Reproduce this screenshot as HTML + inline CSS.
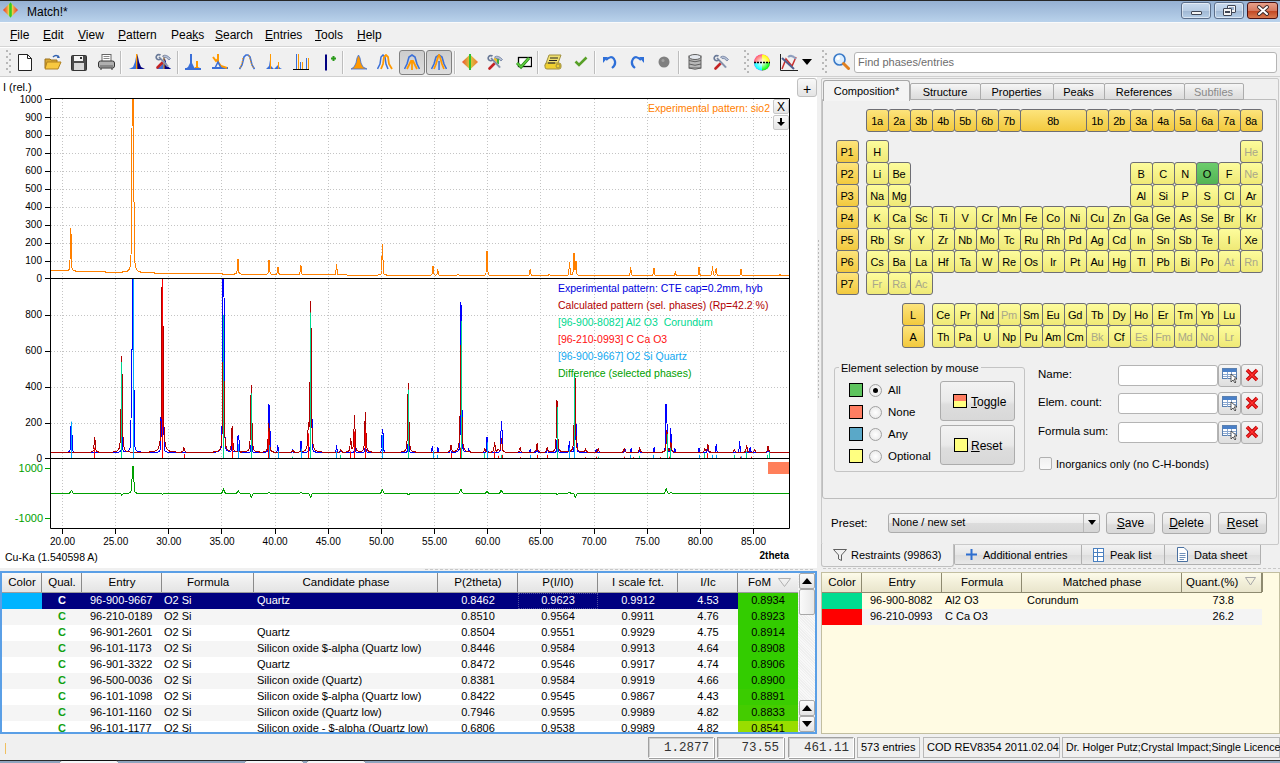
<!DOCTYPE html><html><head><meta charset="utf-8"><style>
*{box-sizing:border-box;margin:0;padding:0}
html,body{width:1280px;height:763px;overflow:hidden;background:#f0f0f0;font-family:"Liberation Sans",sans-serif;font-size:11px;color:#000}
.a{position:absolute}
.t{position:absolute;white-space:nowrap;line-height:1}
u{text-decoration:underline}
.btn{position:absolute;border:1px solid #acacac;border-radius:3px;background:linear-gradient(#f2f2f2,#ebebeb 50%,#dddddd 51%,#cfcfcf)}
.wbtn{position:absolute;border:1px solid #5d6f87;border-radius:3px}
.sep{position:absolute;width:1px;background:#c5c5c5;border-right:1px solid #fff}
.pe{position:absolute;width:21px;height:21px;border:1px solid #a09a5a;border-radius:3px;background:linear-gradient(#fbf79a,#f2ea6a);text-align:center;line-height:19px;font-size:11px;color:#111}
.pg{background:linear-gradient(#fbe07a,#f0c840);border-color:#b09030}
.pd{color:#a8a890}
.po{background:linear-gradient(#5cbf5c,#3da83d);border-color:#2e7a2e}
.tab{position:absolute;border:1px solid #aeaeae;border-bottom:none;background:linear-gradient(#f4f4f4,#e4e4e4);text-align:center;font-size:11px}
.hd{position:absolute;top:0;height:20px;border-right:1px solid #a9a9a9;background:linear-gradient(#ffffff,#f3f3f3 50%,#e8e8e8 51%,#dcdcdc);text-align:center;line-height:19px;font-size:11px}
.row{position:absolute;left:0;height:16px;font-size:11px;line-height:16px}
.c{position:absolute;top:0;height:16px;white-space:nowrap}
</style></head><body><div class="a" style="left:0px;top:0px;width:1280px;height:1px;background:#262626"></div>
<div class="a" style="left:0px;top:1px;width:1280px;height:21px;background:linear-gradient(#95b0d2,#b9d2eb)"></div>
<div class="a" style="left:0px;top:22px;width:1280px;height:1px;background:#fafafa"></div>
<svg class="a" style="left:3px;top:2px" width="15" height="16" viewBox="0 0 15 16"><defs><linearGradient id="dg" x1="0" x2="1"><stop offset="0" stop-color="#f03820"/><stop offset="0.25" stop-color="#f08a40"/><stop offset="0.4" stop-color="#e8e050"/><stop offset="0.5" stop-color="#40d020"/><stop offset="0.6" stop-color="#e8e050"/><stop offset="0.75" stop-color="#f08a40"/><stop offset="1" stop-color="#f03820"/></linearGradient></defs><polygon points="0,8 7.5,0.5 15,8 7.5,15.5" fill="url(#dg)"/><polygon points="6.3,2 7.5,0.5 8.7,2 8.7,14 7.5,15.5 6.3,14" fill="#38c820"/></svg>
<div class="t" style="left:27px;top:5.5px;font-size:12px;color:#000;">Match!*</div>
<div class="a" style="left:1181px;top:2px;width:30px;height:17px;border:1px solid #5b6e8a;border-radius:3px;background:linear-gradient(#c9daee,#b7cce4 50%,#9fb6d2 51%,#b6cfe8);box-shadow:inset 0 0 0 1px rgba(255,255,255,.5)"></div>
<div class="a" style="left:1214px;top:2px;width:30px;height:17px;border:1px solid #5b6e8a;border-radius:3px;background:linear-gradient(#c9daee,#b7cce4 50%,#9fb6d2 51%,#b6cfe8);box-shadow:inset 0 0 0 1px rgba(255,255,255,.5)"></div>
<div class="a" style="left:1191px;top:11px;width:11px;height:4px;background:#f4f4f4;border:1px solid #404654;border-radius:1px"></div>
<div class="a" style="left:1227px;top:5px;width:9px;height:8px;background:#f4f4f4;border:1px solid #404654;border-radius:1px"></div>
<div class="a" style="left:1229px;top:7px;width:5px;height:3px;background:#9ab0cc"></div>
<div class="a" style="left:1223px;top:8px;width:9px;height:8px;background:#f4f4f4;border:1px solid #404654;border-radius:1px"></div>
<div class="a" style="left:1225px;top:11px;width:5px;height:2px;background:#404654"></div>
<div class="a" style="left:1247px;top:2px;width:31px;height:17px;border:1px solid #4a1010;border-radius:3px;background:linear-gradient(#e7a08a,#d67a60 50%,#c04420 51%,#d87a50)"></div>
<svg class="a" style="left:1255px;top:5px" width="16" height="11" viewBox="0 0 16 11"><path d="M4 2 L12 9 M12 2 L4 9" stroke="#3a2a2a" stroke-width="3.8" stroke-linecap="round"/><path d="M4 2 L12 9 M12 2 L4 9" stroke="#fff" stroke-width="2" stroke-linecap="round"/></svg>
<div class="t" style="left:10px;top:28.5px;font-size:12px;color:#000;"><span style="text-decoration:underline">F</span>ile</div>
<div class="t" style="left:43px;top:28.5px;font-size:12px;color:#000;"><span style="text-decoration:underline">E</span>dit</div>
<div class="t" style="left:78px;top:28.5px;font-size:12px;color:#000;"><span style="text-decoration:underline">V</span>iew</div>
<div class="t" style="left:118px;top:28.5px;font-size:12px;color:#000;"><span style="text-decoration:underline">P</span>attern</div>
<div class="t" style="left:171px;top:28.5px;font-size:12px;color:#000;">Pea<span style="text-decoration:underline">k</span>s</div>
<div class="t" style="left:215px;top:28.5px;font-size:12px;color:#000;"><span style="text-decoration:underline">S</span>earch</div>
<div class="t" style="left:265px;top:28.5px;font-size:12px;color:#000;"><span style="text-decoration:underline">E</span>ntries</div>
<div class="t" style="left:315px;top:28.5px;font-size:12px;color:#000;"><span style="text-decoration:underline">T</span>ools</div>
<div class="t" style="left:357px;top:28.5px;font-size:12px;color:#000;"><span style="text-decoration:underline">H</span>elp</div>
<div class="a" style="left:0px;top:46px;width:1280px;height:1px;background:#d5d5d5"></div>
<div class="a" style="left:0px;top:47px;width:1280px;height:1px;background:#ffffff"></div>
<div class="a" style="left:0px;top:76px;width:1280px;height:1px;background:#d0d0d0"></div>
<svg class="a" style="left:6px;top:50px" width="6" height="24" viewBox="0 0 6 24"><rect x="0" y="0" width="2" height="2" fill="#b8b8b8"/><rect x="3" y="3" width="2" height="2" fill="#b8b8b8"/><rect x="0" y="6" width="2" height="2" fill="#b8b8b8"/><rect x="3" y="9" width="2" height="2" fill="#b8b8b8"/><rect x="0" y="12" width="2" height="2" fill="#b8b8b8"/><rect x="3" y="15" width="2" height="2" fill="#b8b8b8"/><rect x="0" y="18" width="2" height="2" fill="#b8b8b8"/><rect x="3" y="21" width="2" height="2" fill="#b8b8b8"/></svg>
<svg class="a" style="left:18px;top:54px" width="14" height="17" viewBox="0 0 14 17"><path d="M0.5 0.5 H9.5 L13.5 4.5 V16.5 H0.5 Z" fill="#fff" stroke="#222"/><path d="M9.5 0.5 V4.5 H13.5" fill="none" stroke="#222"/></svg>
<svg class="a" style="left:44px;top:54px" width="18" height="17" viewBox="0 0 18 17"><path d="M1 5 H6 L7 6 H13 V14 H1 Z" fill="#d8a830" stroke="#9a7020"/><path d="M3 8 H17 L14 15 H1 Z" fill="#f8c840" stroke="#b08020"/><path d="M9 3 Q12 0 15 3" fill="none" stroke="#3060b0" stroke-width="1.5"/><path d="M14 1 L16 4 L13 4 Z" fill="#3060b0"/></svg>
<svg class="a" style="left:71px;top:55px" width="16" height="16" viewBox="0 0 16 16"><rect x="0.5" y="0.5" width="15" height="15" rx="1" fill="#4a4a4a" stroke="#333"/><rect x="3" y="1" width="9" height="5" fill="#f4f4f4"/><rect x="9" y="2" width="2" height="2" fill="#333"/><rect x="3" y="8" width="10" height="7" fill="#d8d8d8"/></svg>
<svg class="a" style="left:98px;top:54px" width="17" height="17" viewBox="0 0 17 17"><rect x="4" y="0.5" width="9" height="7" fill="#fff" stroke="#666"/><path d="M5.5 2.5h6M5.5 4.5h6" stroke="#888"/><rect x="0.5" y="7" width="16" height="7" rx="2" fill="#b0b0b0" stroke="#333"/><rect x="2" y="11" width="13" height="2" fill="#888"/><path d="M3 14v2M14 14v2" stroke="#333"/></svg>
<div class="a" style="left:120px;top:51px;width:1px;height:23px;background:#bdbdbd"></div>
<div class="a" style="left:121px;top:51px;width:1px;height:23px;background:#fbfbfb"></div>
<svg class="a" style="left:129px;top:54px" width="16" height="16" viewBox="0 0 16 16"><path d="M0 15 L4 13 L6 8 L7 3 L8 0 V15 Z" fill="#3a6fd8"/><path d="M8 0 L9 3 L10 8 L12 13 L16 15 H8 Z" fill="#000080"/><rect x="7" y="0" width="1.3" height="15" fill="#ff9900"/></svg>
<svg class="a" style="left:155px;top:53px" width="17" height="17" viewBox="0 0 17 17"><path d="M1 16 L16 16 L12 13 L10 6 L9 2 L8 6 L6 13 Z" fill="#3a6fd8"/><path d="M9 6 L10 6 L12 13 L16 16 H9Z" fill="#000080"/><rect x="8.5" y="2" width="1" height="14" fill="#ff9900"/><path d="M2.5 14.5 L7.5 9.5" stroke="#c42424" stroke-width="2.6" stroke-linecap="round"/><path d="M4 4 L13 13.5" stroke="#9aa6bc" stroke-width="2"/><path d="M13 13.5 L4 4" stroke="#5a6a88" stroke-width="0.6"/><path d="M5.5 2.2 A2.6 2.6 0 1 0 5.8 5.8" fill="none" stroke="#6a7a98" stroke-width="1.7"/><path d="M7.5 3 Q11 0.5 15.5 5.5 L14 7 Q11 3.5 9 4.5 Z" fill="#b4bfd4" stroke="#6e7ea0" stroke-width="0.8"/></svg>
<div class="a" style="left:177px;top:51px;width:1px;height:23px;background:#bdbdbd"></div>
<div class="a" style="left:178px;top:51px;width:1px;height:23px;background:#fbfbfb"></div>
<svg class="a" style="left:185px;top:54px" width="16" height="16" viewBox="0 0 16 16"><path d="M0 15 L3 13 L5 9 V0 H7 V9 L9 13 L10 15 Z" fill="#3a6fd8"/><path d="M9 15 L10 13 L11 13 L11 7 H13 V13 L15 14 L16 15 Z" fill="#ff9900"/><rect x="0" y="14" width="16" height="2" fill="#3a6fd8"/></svg>
<svg class="a" style="left:212px;top:54px" width="17" height="16" viewBox="0 0 17 16"><path d="M0 14 H16" stroke="#3a6fd8" stroke-width="2"/><path d="M1 3 L4 7 L6 5 V0 L6 8 L9 12 L15 14" fill="none" stroke="#ff9900" stroke-width="2"/><path d="M3 14 L6 8 L9 14" fill="none" stroke="#3a6fd8" stroke-width="1.5"/></svg>
<svg class="a" style="left:239px;top:54px" width="16" height="16" viewBox="0 0 16 16"><path d="M0.5 15 L3 11 L5 3 L7 1 L9 1 L11 3 L13 11 L15.5 15" fill="none" stroke="#3a6fd8" stroke-width="1.6"/><path d="M1 14 L3 9 L4 3 M10 1 L12 9 L15 15" fill="none" stroke="#ff9900" stroke-width="1" stroke-dasharray="1.5 1.5"/></svg>
<svg class="a" style="left:266px;top:54px" width="16" height="16" viewBox="0 0 16 16"><path d="M0 15 L3 12 L4 6 L5 12 L8 15 L11 12 L12 11 L14 14 L16 15 Z" fill="#3a6fd8"/><rect x="4" y="0" width="1" height="15" fill="#ff9900"/><rect x="12" y="8" width="1" height="7" fill="#ff9900"/></svg>
<svg class="a" style="left:293px;top:54px" width="16" height="16" viewBox="0 0 16 16"><rect x="3" y="0" width="1" height="15" fill="#3a6fd8"/><rect x="5" y="0" width="1" height="15" fill="#ff9900"/><rect x="7" y="8" width="1" height="7" fill="#3a6fd8"/><rect x="9" y="8" width="1" height="7" fill="#ff9900"/><rect x="13" y="4" width="1" height="11" fill="#3a6fd8"/><rect x="15" y="4" width="1" height="11" fill="#ff9900"/><rect x="0" y="15" width="16" height="1" fill="#000"/></svg>
<svg class="a" style="left:324px;top:54px" width="13" height="17" viewBox="0 0 13 17"><rect x="1" y="0.5" width="2" height="16" fill="#000080"/><path d="M7 4.5 H12 M9.5 2 V7" stroke="#2a9a1a" stroke-width="2"/></svg>
<div class="a" style="left:342px;top:51px;width:1px;height:23px;background:#bdbdbd"></div>
<div class="a" style="left:343px;top:51px;width:1px;height:23px;background:#fbfbfb"></div>
<svg class="a" style="left:351px;top:54px" width="16" height="16" viewBox="0 0 16 16"><path d="M0 15 L3 13 L5 9 L6 4 L7.5 1 L9 4 L10 9 L12 13 L16 15 Z" fill="#ff9900" stroke="#3a6fd8" stroke-width="0.8"/></svg>
<svg class="a" style="left:377px;top:54px" width="17" height="16" viewBox="0 0 17 16"><path d="M0.5 15 L3 10 L4 3 L6 1 L8 3 L9 10 L11 15" fill="none" stroke="#3a6fd8" stroke-width="1.5"/><path d="M4 15 L6 10 L7 3 L9 1 L11 3 L12 10 L15 15" fill="none" stroke="#ff9900" stroke-width="1.8"/></svg>
<div class="a" style="left:399px;top:50px;width:26px;height:25px;border:1px solid #808080;border-radius:3px;background:linear-gradient(#cdcdcd,#dedede)"></div>
<div class="a" style="left:426px;top:50px;width:26px;height:25px;border:1px solid #808080;border-radius:3px;background:linear-gradient(#cdcdcd,#dedede)"></div>
<svg class="a" style="left:404px;top:54px" width="16" height="16" viewBox="0 0 16 16"><path d="M0.5 15 L3 10 L5 3 L8 1 L11 3 L13 10 L15.5 15" fill="none" stroke="#3a6fd8" stroke-width="1.6"/><path d="M3 15 L5 11 L7 7 H9 L11 11 L13 15 M8 7 V16" fill="none" stroke="#ff9900" stroke-width="1.8"/></svg>
<svg class="a" style="left:431px;top:54px" width="16" height="16" viewBox="0 0 16 16"><path d="M0.5 15 L3 10 L5 3 L8 1 L11 3 L13 10 L15.5 15" fill="none" stroke="#3a6fd8" stroke-width="1.6"/><path d="M3 15 L5 10 L7 3 L8 1 L9 3 L11 10 L13 15" fill="none" stroke="#ff9900" stroke-width="1.8"/><rect x="7.3" y="7" width="1.5" height="9" fill="#3a6fd8"/></svg>
<div class="a" style="left:454px;top:51px;width:1px;height:23px;background:#bdbdbd"></div>
<div class="a" style="left:455px;top:51px;width:1px;height:23px;background:#fbfbfb"></div>
<svg class="a" style="left:462px;top:54px" width="16" height="16" viewBox="0 0 16 16"><defs><linearGradient id="dg2" x1="0" x2="1"><stop offset="0" stop-color="#f05030"/><stop offset="0.5" stop-color="#d8d040"/><stop offset="1" stop-color="#f07030"/></linearGradient></defs><polygon points="0,8 8,0.5 16,8 8,15.5" fill="url(#dg2)"/><rect x="7" y="0" width="2" height="16" fill="#30c030"/></svg>
<svg class="a" style="left:487px;top:54px" width="18" height="16" viewBox="0 0 18 16"><rect x="7" y="4" width="3" height="6" fill="#f0c030"/><rect x="10" y="5" width="2" height="5" fill="#40b040"/><path d="M2.5 14.5 L7.5 9.5" stroke="#c42424" stroke-width="2.6" stroke-linecap="round"/><path d="M4 4 L13 13.5" stroke="#9aa6bc" stroke-width="2"/><path d="M13 13.5 L4 4" stroke="#5a6a88" stroke-width="0.6"/><path d="M5.5 2.2 A2.6 2.6 0 1 0 5.8 5.8" fill="none" stroke="#6a7a98" stroke-width="1.7"/><path d="M7.5 3 Q11 0.5 15.5 5.5 L14 7 Q11 3.5 9 4.5 Z" fill="#b4bfd4" stroke="#6e7ea0" stroke-width="0.8"/></svg>
<svg class="a" style="left:516px;top:56px" width="16" height="14" viewBox="0 0 16 14"><rect x="2.5" y="1.5" width="13" height="9" fill="#fff" stroke="#000" stroke-width="1.3"/><path d="M1 7 L5 11 L13 2" fill="none" stroke="#2a8a1a" stroke-width="3"/><path d="M1 7 L5 11 L13 2" fill="none" stroke="#60d040" stroke-width="1.5"/></svg>
<div class="a" style="left:537px;top:51px;width:1px;height:23px;background:#bdbdbd"></div>
<div class="a" style="left:538px;top:51px;width:1px;height:23px;background:#fbfbfb"></div>
<svg class="a" style="left:544px;top:54px" width="18" height="16" viewBox="0 0 18 16"><path d="M5 1 H17 L13 12 H1 Z" fill="#f0e070" stroke="#a09040"/><rect x="1" y="9" width="16" height="6" rx="2" fill="#f0d030" stroke="#a09040"/><path d="M6 4h8M5 6.5h8M4 9h7" stroke="#222" stroke-width="1.2"/><circle cx="14" cy="12" r="2" fill="none" stroke="#a09040"/></svg>
<svg class="a" style="left:574px;top:56px" width="14" height="11" viewBox="0 0 14 11"><path d="M1.5 5.5 L5 9 L12.5 1.5" fill="none" stroke="#58a028" stroke-width="2.6"/></svg>
<div class="a" style="left:594px;top:51px;width:1px;height:23px;background:#bdbdbd"></div>
<div class="a" style="left:595px;top:51px;width:1px;height:23px;background:#fbfbfb"></div>
<svg class="a" style="left:603px;top:55px" width="14" height="14" viewBox="0 0 14 14"><path d="M3 5 Q8 0 11 4 Q14 9 9 13" fill="none" stroke="#2e6fd8" stroke-width="2.2"/><path d="M0 2 L5 2 L0 8 Z" fill="#2e6fd8"/></svg>
<svg class="a" style="left:630px;top:55px" width="14" height="14" viewBox="0 0 14 14"><path d="M11 5 Q6 0 3 4 Q0 9 5 13" fill="none" stroke="#2e6fd8" stroke-width="2.2"/><path d="M14 2 L9 2 L14 8 Z" fill="#2e6fd8"/></svg>
<svg class="a" style="left:658px;top:56px" width="12" height="12" viewBox="0 0 12 12"><circle cx="6" cy="6" r="5.5" fill="#808080"/><circle cx="5" cy="4.5" r="1.5" fill="#a0a0a0"/></svg>
<div class="a" style="left:678px;top:51px;width:1px;height:23px;background:#bdbdbd"></div>
<div class="a" style="left:679px;top:51px;width:1px;height:23px;background:#fbfbfb"></div>
<svg class="a" style="left:688px;top:54px" width="14" height="16" viewBox="0 0 14 16"><rect x="1" y="2" width="12" height="12" fill="#b8b8b8" stroke="#606060"/><ellipse cx="7" cy="3" rx="6" ry="2.5" fill="#e4e8ee" stroke="#606060"/><path d="M1 6.5 Q7 9 13 6.5 M1 10 Q7 12.5 13 10" fill="none" stroke="#606060"/><path d="M1 14 Q7 16.5 13 14" fill="none" stroke="#606060"/></svg>
<svg class="a" style="left:713px;top:54px" width="17" height="16" viewBox="0 0 17 16"><path d="M2.5 14.5 L7.5 9.5" stroke="#c42424" stroke-width="2.6" stroke-linecap="round"/><path d="M4 4 L13 13.5" stroke="#9aa6bc" stroke-width="2"/><path d="M13 13.5 L4 4" stroke="#5a6a88" stroke-width="0.6"/><path d="M5.5 2.2 A2.6 2.6 0 1 0 5.8 5.8" fill="none" stroke="#6a7a98" stroke-width="1.7"/><path d="M7.5 3 Q11 0.5 15.5 5.5 L14 7 Q11 3.5 9 4.5 Z" fill="#b4bfd4" stroke="#6e7ea0" stroke-width="0.8"/></svg>
<svg class="a" style="left:744px;top:50px" width="6" height="24" viewBox="0 0 6 24"><rect x="0" y="0" width="2" height="2" fill="#b8b8b8"/><rect x="3" y="3" width="2" height="2" fill="#b8b8b8"/><rect x="0" y="6" width="2" height="2" fill="#b8b8b8"/><rect x="3" y="9" width="2" height="2" fill="#b8b8b8"/><rect x="0" y="12" width="2" height="2" fill="#b8b8b8"/><rect x="3" y="15" width="2" height="2" fill="#b8b8b8"/><rect x="0" y="18" width="2" height="2" fill="#b8b8b8"/><rect x="3" y="21" width="2" height="2" fill="#b8b8b8"/></svg>
<svg class="a" style="left:753px;top:54px" width="18" height="17" viewBox="0 0 18 17"><defs><radialGradient id="cw"><stop offset="0" stop-color="#fff"/><stop offset="1" stop-color="#fff" stop-opacity="0"/></radialGradient></defs><circle cx="9" cy="8.5" r="8" fill="#f0f"/><path d="M9 8.5 L9 0.5 A8 8 0 0 1 17 8.5 Z" fill="#ff0"/><path d="M9 8.5 L17 8.5 A8 8 0 0 1 9 16.5 Z" fill="#0f0"/><path d="M9 8.5 L9 16.5 A8 8 0 0 1 1 8.5 Z" fill="#0ff"/><path d="M9 8.5 L1 8.5 A8 8 0 0 1 9 0.5 Z" fill="#f66"/><circle cx="9" cy="8.5" r="8" fill="url(#cw)"/><path d="M1 8.5 H17" stroke="#000" stroke-width="1.5" stroke-dasharray="2 1"/></svg>
<svg class="a" style="left:780px;top:54px" width="18" height="17" viewBox="0 0 18 17"><path d="M0.5 0 V16.5 H18" fill="none" stroke="#222"/><path d="M2 15 L6 5 L12 12 L16 3" fill="none" stroke="#c83030" stroke-width="1.5"/><path d="M2 4 L14 15" stroke="#506090" stroke-width="2"/><path d="M8 3 Q12 0 16 5" fill="none" stroke="#90a0c0" stroke-width="2"/></svg>
<svg class="a" style="left:802px;top:59px" width="10" height="6" viewBox="0 0 10 6"><path d="M0 0 H10 L5 6 Z" fill="#000"/></svg>
<svg class="a" style="left:822px;top:50px" width="6" height="24" viewBox="0 0 6 24"><rect x="0" y="0" width="2" height="2" fill="#b8b8b8"/><rect x="3" y="3" width="2" height="2" fill="#b8b8b8"/><rect x="0" y="6" width="2" height="2" fill="#b8b8b8"/><rect x="3" y="9" width="2" height="2" fill="#b8b8b8"/><rect x="0" y="12" width="2" height="2" fill="#b8b8b8"/><rect x="3" y="15" width="2" height="2" fill="#b8b8b8"/><rect x="0" y="18" width="2" height="2" fill="#b8b8b8"/><rect x="3" y="21" width="2" height="2" fill="#b8b8b8"/></svg>
<svg class="a" style="left:833px;top:53px" width="17" height="17" viewBox="0 0 17 17"><circle cx="6.5" cy="6.5" r="5.5" fill="#dbeeff" stroke="#3a7ac8" stroke-width="1.6"/><circle cx="5" cy="5" r="2" fill="#fff"/><path d="M10.5 10.5 L15.5 15.5" stroke="#e08020" stroke-width="3" stroke-linecap="round"/></svg>
<div class="a" style="left:854px;top:52px;width:423px;height:21px;background:#fff;border:1px solid #b5b5b5;border-radius:3px"></div>
<div class="t" style="left:858px;top:57.0px;font-size:11px;color:#6d6d6d;">Find phases/entries</div>
<div class="a" style="left:0px;top:77px;width:817px;height:491px;background:#fff"></div>
<svg class="a" style="left:0;top:0" width="817" height="568" viewBox="0 0 817 568"><path d="M62.5 99 V528" stroke="#c4c4c4" stroke-dasharray="1 2"/><path d="M115.5 99 V528" stroke="#c4c4c4" stroke-dasharray="1 2"/><path d="M168.5 99 V528" stroke="#c4c4c4" stroke-dasharray="1 2"/><path d="M221.5 99 V528" stroke="#c4c4c4" stroke-dasharray="1 2"/><path d="M275.5 99 V528" stroke="#c4c4c4" stroke-dasharray="1 2"/><path d="M328.5 99 V528" stroke="#c4c4c4" stroke-dasharray="1 2"/><path d="M381.5 99 V528" stroke="#c4c4c4" stroke-dasharray="1 2"/><path d="M434.5 99 V528" stroke="#c4c4c4" stroke-dasharray="1 2"/><path d="M487.5 99 V528" stroke="#c4c4c4" stroke-dasharray="1 2"/><path d="M540.5 99 V528" stroke="#c4c4c4" stroke-dasharray="1 2"/><path d="M594.5 99 V528" stroke="#c4c4c4" stroke-dasharray="1 2"/><path d="M647.5 99 V528" stroke="#c4c4c4" stroke-dasharray="1 2"/><path d="M700.5 99 V528" stroke="#c4c4c4" stroke-dasharray="1 2"/><path d="M753.5 99 V528" stroke="#c4c4c4" stroke-dasharray="1 2"/><path d="M51 261.5 H789" stroke="#c4c4c4" stroke-dasharray="1 2"/><path d="M51 243.5 H789" stroke="#c4c4c4" stroke-dasharray="1 2"/><path d="M51 225.5 H789" stroke="#c4c4c4" stroke-dasharray="1 2"/><path d="M51 207.5 H789" stroke="#c4c4c4" stroke-dasharray="1 2"/><path d="M51 189.5 H789" stroke="#c4c4c4" stroke-dasharray="1 2"/><path d="M51 171.5 H789" stroke="#c4c4c4" stroke-dasharray="1 2"/><path d="M51 153.5 H789" stroke="#c4c4c4" stroke-dasharray="1 2"/><path d="M51 135.5 H789" stroke="#c4c4c4" stroke-dasharray="1 2"/><path d="M51 117.5 H789" stroke="#c4c4c4" stroke-dasharray="1 2"/><path d="M51 423.5 H789" stroke="#c4c4c4" stroke-dasharray="1 2"/><path d="M51 387.5 H789" stroke="#c4c4c4" stroke-dasharray="1 2"/><path d="M51 351.5 H789" stroke="#c4c4c4" stroke-dasharray="1 2"/><path d="M51 315.5 H789" stroke="#c4c4c4" stroke-dasharray="1 2"/><path d="M50.50,270.4 L51.00,270.4 L51.50,270.4 L52.00,270.4 L52.50,270.4 L53.00,270.4 L53.50,270.5 L54.00,270.5 L54.50,270.5 L55.00,270.5 L55.50,270.5 L56.00,270.5 L56.50,270.6 L57.00,270.6 L57.50,270.6 L58.00,270.6 L58.50,270.6 L59.00,270.6 L59.50,270.6 L60.00,270.7 L60.50,270.7 L61.00,270.7 L61.50,270.7 L62.00,270.7 L62.50,270.7 L63.00,270.7 L63.50,270.7 L64.00,270.7 L64.50,270.7 L65.00,270.7 L65.50,270.7 L66.00,270.7 L66.50,270.7 L67.00,270.6 L67.50,270.5 L68.00,270.4 L68.50,270.2 L69.00,269.7 L69.50,268.3 L70.00,260.3 L70.50,236.7 L70.79,227.9 L71.00,232.8 L71.50,257.4 L72.00,267.8 L72.50,269.7 L73.00,270.3 L73.50,270.5 L74.00,270.7 L74.50,270.8 L75.00,270.9 L75.50,271.0 L76.00,271.0 L76.50,271.1 L77.00,271.1 L77.50,271.1 L78.00,271.2 L78.50,271.2 L79.00,271.2 L79.50,271.2 L80.00,271.2 L80.50,271.3 L81.00,271.3 L81.50,271.3 L82.00,271.3 L82.50,271.3 L83.00,271.3 L83.50,271.4 L84.00,271.4 L84.50,271.4 L85.00,271.4 L85.50,271.4 L86.00,271.4 L86.50,271.5 L87.00,271.5 L87.50,271.5 L88.00,271.5 L88.50,271.5 L89.00,271.5 L89.50,271.5 L90.00,271.6 L90.50,271.6 L91.00,271.6 L91.50,271.6 L92.00,271.6 L92.50,271.6 L93.00,271.6 L93.50,271.7 L94.00,271.7 L94.50,271.7 L95.00,271.7 L95.50,271.7 L96.00,271.7 L96.50,271.7 L97.00,271.7 L97.50,271.8 L98.00,271.8 L98.50,271.8 L99.00,271.8 L99.50,271.8 L100.00,271.8 L100.50,271.8 L101.00,271.9 L101.50,271.9 L102.00,271.9 L102.50,271.9 L103.00,271.9 L103.50,271.9 L104.00,271.9 L104.50,271.9 L105.00,271.9 L105.50,272.0 L106.00,272.0 L106.50,272.0 L107.00,272.0 L107.50,272.0 L108.00,272.0 L108.50,272.0 L109.00,272.0 L109.50,272.1 L110.00,272.1 L110.50,272.1 L111.00,272.1 L111.50,272.1 L112.00,272.0 L112.50,272.0 L113.00,272.0 L113.50,272.0 L114.00,272.0 L114.50,272.0 L115.00,272.1 L115.50,272.1 L116.00,272.1 L116.50,272.1 L117.00,272.1 L117.50,272.1 L118.00,272.1 L118.50,272.1 L119.00,272.1 L119.50,272.0 L120.00,272.0 L120.50,272.0 L121.00,272.0 L121.50,272.0 L122.00,272.0 L122.50,272.0 L123.00,271.9 L123.50,271.9 L124.00,271.8 L124.50,271.8 L125.00,271.7 L125.50,271.6 L126.00,271.5 L126.50,271.4 L127.00,271.2 L127.50,271.0 L128.00,270.7 L128.50,270.2 L129.00,269.6 L129.50,268.6 L130.00,267.1 L130.50,264.3 L131.00,255.9 L131.50,219.2 L132.00,130.3 L132.13,105.8 L132.50,98.0 L132.87,98.0 L133.00,98.0 L133.40,98.0 L133.50,98.0 L134.00,202.2 L134.50,252.3 L135.00,263.1 L135.50,266.5 L136.00,268.3 L136.50,269.5 L137.00,270.2 L137.50,270.7 L138.00,271.1 L138.50,271.4 L139.00,271.6 L139.50,271.8 L140.00,271.9 L140.50,272.0 L141.00,272.1 L141.50,272.2 L142.00,272.2 L142.50,272.3 L143.00,272.4 L143.50,272.4 L144.00,272.5 L144.50,272.5 L145.00,272.5 L145.50,272.6 L146.00,272.6 L146.50,272.6 L147.00,272.6 L147.50,272.7 L148.00,272.7 L148.50,272.7 L149.00,272.7 L149.50,272.7 L150.00,272.8 L150.50,272.8 L151.00,272.8 L151.50,272.8 L152.00,272.8 L152.50,272.8 L153.00,272.8 L153.50,272.9 L154.00,272.9 L154.50,273.0 L155.00,273.0 L155.50,273.0 L156.00,273.0 L156.50,273.0 L157.00,273.0 L157.50,273.0 L158.00,273.0 L158.50,273.0 L159.00,273.1 L159.50,273.1 L160.00,273.1 L160.50,273.1 L161.00,273.1 L161.50,273.1 L162.00,273.1 L162.50,273.1 L163.00,273.1 L163.50,273.1 L164.00,273.1 L164.50,273.2 L165.00,273.2 L165.50,273.2 L166.00,273.2 L166.50,273.2 L167.00,273.2 L167.50,273.2 L168.00,273.2 L168.50,273.2 L169.00,273.2 L169.50,273.2 L170.00,273.2 L170.50,273.2 L171.00,273.3 L171.50,273.3 L172.00,273.3 L172.50,273.3 L173.00,273.3 L173.50,273.3 L174.00,273.3 L174.50,273.3 L175.00,273.3 L175.50,273.3 L176.00,273.3 L176.50,273.3 L177.00,273.4 L177.50,273.4 L178.00,273.4 L178.50,273.4 L179.00,273.4 L179.50,273.4 L180.00,273.4 L180.50,273.4 L181.00,273.4 L181.50,273.4 L182.00,273.4 L182.50,273.4 L183.00,273.4 L183.50,273.4 L184.00,273.5 L184.50,273.5 L185.00,273.5 L185.50,273.5 L186.00,273.5 L186.50,273.5 L187.00,273.5 L187.50,273.5 L188.00,273.5 L188.50,273.5 L189.00,273.5 L189.50,273.5 L190.00,273.5 L190.50,273.6 L191.00,273.6 L191.50,273.6 L192.00,273.6 L192.50,273.6 L193.00,273.6 L193.50,273.6 L194.00,273.6 L194.50,273.6 L195.00,273.6 L195.50,273.6 L196.00,273.6 L196.50,273.6 L197.00,273.6 L197.50,273.6 L198.00,273.7 L198.50,273.7 L199.00,273.7 L199.50,273.7 L200.00,273.7 L200.50,273.7 L201.00,273.7 L201.50,273.7 L202.00,273.7 L202.50,273.7 L203.00,273.7 L203.50,273.7 L204.00,273.7 L204.50,273.7 L205.00,273.7 L205.50,273.8 L206.00,273.8 L206.50,273.8 L207.00,273.8 L207.50,273.8 L208.00,273.8 L208.50,273.8 L209.00,273.8 L209.50,273.8 L210.00,273.8 L210.50,273.8 L211.00,273.8 L211.50,273.8 L212.00,273.8 L212.50,273.8 L213.00,273.8 L213.50,273.9 L214.00,273.9 L214.50,273.9 L215.00,273.9 L215.50,273.9 L216.00,273.9 L216.50,273.9 L217.00,273.9 L217.50,273.9 L218.00,273.9 L218.50,273.9 L219.00,273.9 L219.50,273.9 L220.00,273.9 L220.50,273.9 L221.00,273.9 L221.50,273.9 L222.00,273.9 L222.50,274.0 L223.00,274.0 L223.50,274.0 L224.00,274.0 L224.50,274.0 L225.00,274.0 L225.50,274.0 L226.00,274.0 L226.50,274.0 L227.00,274.0 L227.50,274.0 L228.00,274.0 L228.50,274.0 L229.00,274.0 L229.50,274.0 L230.00,274.0 L230.50,274.0 L231.00,274.0 L231.50,274.0 L232.00,274.0 L232.50,274.0 L233.00,274.0 L233.50,274.0 L234.00,274.0 L234.50,274.0 L235.00,273.9 L235.50,273.9 L236.00,273.7 L236.50,273.4 L237.00,271.3 L237.50,263.9 L237.90,258.9 L238.00,259.3 L238.50,267.8 L239.00,272.6 L239.50,273.6 L240.00,273.8 L240.50,273.9 L241.00,274.0 L241.50,274.1 L242.00,274.1 L242.50,274.1 L243.00,274.1 L243.50,274.1 L244.00,274.2 L244.50,274.2 L245.00,274.2 L245.50,274.2 L246.00,274.2 L246.50,274.2 L247.00,274.2 L247.50,274.2 L248.00,274.2 L248.50,274.2 L249.00,274.2 L249.50,274.2 L250.00,274.2 L250.50,274.2 L251.00,274.2 L251.50,274.3 L252.00,274.3 L252.50,274.3 L253.00,274.3 L253.50,274.3 L254.00,274.3 L254.50,274.3 L255.00,274.3 L255.50,274.3 L256.00,274.3 L256.50,274.3 L257.00,274.3 L257.50,274.3 L258.00,274.3 L258.50,274.3 L259.00,274.3 L259.50,274.3 L260.00,274.3 L260.50,274.3 L261.00,274.3 L261.50,274.3 L262.00,274.3 L262.50,274.3 L263.00,274.3 L263.50,274.3 L264.00,274.3 L264.50,274.3 L265.00,274.3 L265.50,274.3 L266.00,274.3 L266.50,274.2 L267.00,274.1 L267.50,273.9 L268.00,272.8 L268.50,267.6 L269.00,260.5 L269.04,260.4 L269.50,266.2 L270.00,272.3 L270.50,273.8 L271.00,274.1 L271.50,274.2 L272.00,274.3 L272.50,274.3 L273.00,274.3 L273.50,274.4 L274.00,274.4 L274.50,274.4 L275.00,274.4 L275.50,274.3 L276.00,274.3 L276.50,274.1 L277.00,273.4 L277.50,270.2 L277.97,266.9 L278.00,267.0 L278.50,270.7 L279.00,273.6 L279.50,274.2 L280.00,274.3 L280.50,274.4 L281.00,274.4 L281.50,274.5 L282.00,274.5 L282.50,274.5 L283.00,274.5 L283.50,274.5 L284.00,274.5 L284.50,274.5 L285.00,274.5 L285.50,274.5 L286.00,274.5 L286.50,274.6 L287.00,274.6 L287.50,274.6 L288.00,274.6 L288.50,274.6 L289.00,274.6 L289.50,274.6 L290.00,274.6 L290.50,274.6 L291.00,274.6 L291.50,274.6 L292.00,274.6 L292.50,274.6 L293.00,274.6 L293.50,274.6 L294.00,274.6 L294.50,274.6 L295.00,274.6 L295.50,274.6 L296.00,274.6 L296.50,274.6 L297.00,274.6 L297.50,274.6 L298.00,274.5 L298.50,274.5 L299.00,274.4 L299.50,274.1 L300.00,272.4 L300.50,267.2 L300.82,264.8 L301.00,265.6 L301.50,271.3 L302.00,273.9 L302.50,274.4 L303.00,274.5 L303.50,274.6 L304.00,274.6 L304.50,274.6 L305.00,274.7 L305.50,274.7 L306.00,274.7 L306.50,274.7 L307.00,274.7 L307.50,274.7 L308.00,274.7 L308.50,274.7 L309.00,274.7 L309.50,274.7 L310.00,274.7 L310.50,274.7 L311.00,274.7 L311.50,274.7 L312.00,274.7 L312.50,274.8 L313.00,274.8 L313.50,274.8 L314.00,274.8 L314.50,274.8 L315.00,274.8 L315.50,274.8 L316.00,274.8 L316.50,274.8 L317.00,274.8 L317.50,274.8 L318.00,274.8 L318.50,274.8 L319.00,274.8 L319.50,274.8 L320.00,274.8 L320.50,274.8 L321.00,274.8 L321.50,274.8 L322.00,274.8 L322.50,274.8 L323.00,274.8 L323.50,274.8 L324.00,274.8 L324.50,274.8 L325.00,274.8 L325.50,274.8 L326.00,274.8 L326.50,274.8 L327.00,274.8 L327.50,274.8 L328.00,274.8 L328.50,274.8 L329.00,274.8 L329.50,274.8 L330.00,274.8 L330.50,274.8 L331.00,274.8 L331.50,274.8 L332.00,274.8 L332.50,274.8 L333.00,274.8 L333.50,274.8 L334.00,274.7 L334.50,274.7 L335.00,274.5 L335.50,273.7 L336.00,269.8 L336.50,264.5 L336.54,264.5 L337.00,268.8 L337.50,273.3 L338.00,274.4 L338.50,274.7 L339.00,274.8 L339.50,274.8 L340.00,274.8 L340.50,274.9 L341.00,274.9 L341.50,274.9 L342.00,274.9 L342.50,274.9 L343.00,274.9 L343.50,274.9 L344.00,274.9 L344.50,274.9 L345.00,274.9 L345.50,274.9 L346.00,274.9 L346.50,274.9 L347.00,275.0 L347.50,275.0 L348.00,275.0 L348.50,275.0 L349.00,275.0 L349.50,275.0 L350.00,275.0 L350.50,275.0 L351.00,275.0 L351.50,275.0 L352.00,275.0 L352.50,275.0 L353.00,275.0 L353.50,275.0 L354.00,275.0 L354.50,275.0 L355.00,275.0 L355.50,275.0 L356.00,275.0 L356.50,275.0 L357.00,275.0 L357.50,275.0 L358.00,275.0 L358.50,275.0 L359.00,275.0 L359.50,275.0 L360.00,275.0 L360.50,275.0 L361.00,275.0 L361.50,275.0 L362.00,275.0 L362.50,275.0 L363.00,275.0 L363.50,275.0 L364.00,275.0 L364.50,275.0 L365.00,275.0 L365.50,275.0 L366.00,275.0 L366.50,275.0 L367.00,275.0 L367.50,275.0 L368.00,275.1 L368.50,275.1 L369.00,275.1 L369.50,275.1 L370.00,275.1 L370.50,275.1 L371.00,275.1 L371.50,275.1 L372.00,275.1 L372.50,275.1 L373.00,275.1 L373.50,275.1 L374.00,275.1 L374.50,275.0 L375.00,275.0 L375.50,275.0 L376.00,275.0 L376.50,275.0 L377.00,275.0 L377.50,275.0 L378.00,275.0 L378.50,274.9 L379.00,274.9 L379.50,274.8 L380.00,274.6 L380.50,274.4 L381.00,273.7 L381.50,270.5 L382.00,256.8 L382.46,243.7 L382.50,243.8 L383.00,259.6 L383.50,271.4 L384.00,273.9 L384.50,274.4 L385.00,274.7 L385.50,274.8 L386.00,274.9 L386.50,275.0 L387.00,275.0 L387.50,275.0 L388.00,275.1 L388.50,275.1 L389.00,275.1 L389.50,275.1 L390.00,275.1 L390.50,275.1 L391.00,275.1 L391.50,275.1 L392.00,275.1 L392.50,275.1 L393.00,275.1 L393.50,275.2 L394.00,275.2 L394.50,275.2 L395.00,275.2 L395.50,275.2 L396.00,275.2 L396.50,275.2 L397.00,275.2 L397.50,275.2 L398.00,275.2 L398.50,275.2 L399.00,275.2 L399.50,275.2 L400.00,275.2 L400.50,275.2 L401.00,275.2 L401.50,275.2 L402.00,275.2 L402.50,275.2 L403.00,275.2 L403.50,275.2 L404.00,275.2 L404.50,275.2 L405.00,275.2 L405.50,275.2 L406.00,275.2 L406.50,275.2 L407.00,275.2 L407.50,275.2 L408.00,275.2 L408.50,275.2 L409.00,275.2 L409.50,275.2 L410.00,275.2 L410.50,275.2 L411.00,275.2 L411.50,275.2 L412.00,275.2 L412.50,275.2 L413.00,275.2 L413.50,275.2 L414.00,275.2 L414.50,275.3 L415.00,275.3 L415.50,275.3 L416.00,275.3 L416.50,275.3 L417.00,275.3 L417.50,275.3 L418.00,275.3 L418.50,275.3 L419.00,275.3 L419.50,275.3 L420.00,275.3 L420.50,275.3 L421.00,275.3 L421.50,275.3 L422.00,275.3 L422.50,275.3 L423.00,275.3 L423.50,275.3 L424.00,275.3 L424.50,275.3 L425.00,275.3 L425.50,275.3 L426.00,275.3 L426.50,275.3 L427.00,275.3 L427.50,275.3 L428.00,275.3 L428.50,275.3 L429.00,275.2 L429.50,275.2 L430.00,275.2 L430.50,275.2 L431.00,275.1 L431.50,274.9 L432.00,273.9 L432.50,270.0 L432.96,266.3 L433.00,266.4 L433.50,270.9 L434.00,274.2 L434.50,274.9 L435.00,275.1 L435.50,275.1 L436.00,275.1 L436.50,274.9 L437.00,273.8 L437.50,271.0 L437.74,270.3 L438.00,271.1 L438.50,273.9 L439.00,275.0 L439.50,275.2 L440.00,275.2 L440.50,275.3 L441.00,275.3 L441.50,275.3 L442.00,275.3 L442.50,275.3 L443.00,275.3 L443.50,275.3 L444.00,275.3 L444.50,275.3 L445.00,275.3 L445.50,275.3 L446.00,275.3 L446.50,275.3 L447.00,275.3 L447.50,275.3 L448.00,275.3 L448.50,275.4 L449.00,275.4 L449.50,275.4 L450.00,275.4 L450.50,275.4 L451.00,275.4 L451.50,275.4 L452.00,275.4 L452.50,275.4 L453.00,275.4 L453.50,275.4 L454.00,275.4 L454.50,275.4 L455.00,275.4 L455.50,275.4 L456.00,275.3 L456.50,275.3 L457.00,275.2 L457.50,274.5 L457.94,273.9 L458.00,274.0 L458.50,274.7 L459.00,275.2 L459.50,275.3 L460.00,275.4 L460.50,275.4 L461.00,275.4 L461.50,275.4 L462.00,275.4 L462.50,275.4 L463.00,275.4 L463.50,275.4 L464.00,275.4 L464.50,275.4 L465.00,275.4 L465.50,275.4 L466.00,275.4 L466.50,275.4 L467.00,275.4 L467.50,275.4 L468.00,275.4 L468.50,275.4 L469.00,275.4 L469.50,275.4 L470.00,275.4 L470.50,275.4 L471.00,275.4 L471.50,275.4 L472.00,275.4 L472.50,275.4 L473.00,275.4 L473.50,275.4 L474.00,275.4 L474.50,275.4 L475.00,275.4 L475.50,275.4 L476.00,275.4 L476.50,275.4 L477.00,275.4 L477.50,275.4 L478.00,275.4 L478.50,275.4 L479.00,275.4 L479.50,275.4 L480.00,275.4 L480.50,275.4 L481.00,275.4 L481.50,275.4 L482.00,275.4 L482.50,275.3 L483.00,275.3 L483.50,275.3 L484.00,275.2 L484.50,275.1 L485.00,274.9 L485.50,274.5 L486.00,272.8 L486.50,264.2 L487.00,251.5 L487.06,251.2 L487.50,260.6 L488.00,271.6 L488.50,274.3 L489.00,274.9 L489.50,275.1 L490.00,275.2 L490.50,275.3 L491.00,275.3 L491.50,275.3 L492.00,275.4 L492.50,275.4 L493.00,275.4 L493.50,275.4 L494.00,275.4 L494.50,275.4 L495.00,275.4 L495.50,275.4 L496.00,275.4 L496.50,275.4 L497.00,275.5 L497.50,275.5 L498.00,275.5 L498.50,275.5 L499.00,275.5 L499.50,275.5 L500.00,275.5 L500.50,275.5 L501.00,275.5 L501.50,275.5 L502.00,275.5 L502.50,275.5 L503.00,275.5 L503.50,275.5 L504.00,275.5 L504.50,275.5 L505.00,275.5 L505.50,275.5 L506.00,275.5 L506.50,275.5 L507.00,275.5 L507.50,275.5 L508.00,275.5 L508.50,275.5 L509.00,275.5 L509.50,275.5 L510.00,275.5 L510.50,275.5 L511.00,275.5 L511.50,275.5 L512.00,275.5 L512.50,275.5 L513.00,275.5 L513.50,275.5 L514.00,275.5 L514.50,275.5 L515.00,275.5 L515.50,275.5 L516.00,275.5 L516.50,275.5 L517.00,275.5 L517.50,275.5 L518.00,275.5 L518.50,275.5 L519.00,275.5 L519.50,275.5 L520.00,275.5 L520.50,275.5 L521.00,275.5 L521.50,275.5 L522.00,275.5 L522.50,275.5 L523.00,275.5 L523.50,275.5 L524.00,275.5 L524.50,275.5 L525.00,275.5 L525.50,275.5 L526.00,275.5 L526.50,275.5 L527.00,275.5 L527.50,275.5 L528.00,275.4 L528.50,275.4 L529.00,275.1 L529.50,273.8 L530.00,270.5 L530.22,269.8 L530.50,270.9 L531.00,274.1 L531.50,275.2 L532.00,275.4 L532.50,275.4 L533.00,275.5 L533.50,275.5 L534.00,275.5 L534.50,275.5 L535.00,275.5 L535.50,275.5 L536.00,275.5 L536.50,275.5 L537.00,275.5 L537.50,275.5 L538.00,275.5 L538.50,275.5 L539.00,275.5 L539.50,275.5 L540.00,275.5 L540.50,275.5 L541.00,275.6 L541.50,275.6 L542.00,275.6 L542.50,275.6 L543.00,275.6 L543.50,275.6 L544.00,275.6 L544.50,275.6 L545.00,275.6 L545.50,275.6 L546.00,275.6 L546.50,275.5 L547.00,275.5 L547.50,275.5 L548.00,275.5 L548.50,275.3 L549.00,274.5 L549.35,274.1 L549.50,274.2 L550.00,275.0 L550.50,275.4 L551.00,275.5 L551.50,275.5 L552.00,275.6 L552.50,275.6 L553.00,275.6 L553.50,275.6 L554.00,275.6 L554.50,275.6 L555.00,275.6 L555.50,275.6 L556.00,275.6 L556.50,275.6 L557.00,275.6 L557.50,275.6 L558.00,275.6 L558.50,275.6 L559.00,275.6 L559.50,275.6 L560.00,275.6 L560.50,275.6 L561.00,275.5 L561.50,275.5 L562.00,275.5 L562.50,275.5 L563.00,275.5 L563.50,275.5 L564.00,275.5 L564.50,275.5 L565.00,275.5 L565.50,275.5 L566.00,275.4 L566.50,275.4 L567.00,275.3 L567.50,275.2 L568.00,275.0 L568.50,274.1 L569.00,269.5 L569.50,263.0 L569.55,262.9 L570.00,267.9 L570.50,273.4 L571.00,274.7 L571.50,274.9 L572.00,274.8 L572.50,274.4 L573.00,272.5 L573.50,263.7 L574.00,252.8 L574.02,252.7 L574.50,262.4 L575.00,270.1 L575.50,265.6 L575.93,260.7 L576.00,260.9 L576.50,268.7 L577.00,273.8 L577.50,274.9 L578.00,275.1 L578.50,275.3 L579.00,275.4 L579.50,275.4 L580.00,275.5 L580.50,275.5 L581.00,275.5 L581.50,275.5 L582.00,275.5 L582.50,275.5 L583.00,275.6 L583.50,275.6 L584.00,275.6 L584.50,275.6 L585.00,275.6 L585.50,275.6 L586.00,275.6 L586.50,275.6 L587.00,275.6 L587.50,275.6 L588.00,275.6 L588.50,275.6 L589.00,275.6 L589.50,275.6 L590.00,275.6 L590.50,275.6 L591.00,275.6 L591.50,275.6 L592.00,275.6 L592.50,275.6 L593.00,275.6 L593.50,275.6 L594.00,275.6 L594.50,275.6 L595.00,275.6 L595.50,275.6 L596.00,275.6 L596.50,275.6 L597.00,275.6 L597.50,275.6 L598.00,275.6 L598.50,275.6 L599.00,275.6 L599.50,275.6 L600.00,275.6 L600.50,275.6 L601.00,275.6 L601.50,275.6 L602.00,275.6 L602.50,275.6 L603.00,275.6 L603.50,275.6 L604.00,275.6 L604.50,275.6 L605.00,275.6 L605.50,275.6 L606.00,275.6 L606.50,275.6 L607.00,275.6 L607.50,275.6 L608.00,275.6 L608.50,275.6 L609.00,275.6 L609.50,275.6 L610.00,275.6 L610.50,275.6 L611.00,275.6 L611.50,275.6 L612.00,275.6 L612.50,275.6 L613.00,275.6 L613.50,275.6 L614.00,275.6 L614.50,275.6 L615.00,275.6 L615.50,275.6 L616.00,275.6 L616.50,275.6 L617.00,275.6 L617.50,275.6 L618.00,275.6 L618.50,275.6 L619.00,275.6 L619.50,275.6 L620.00,275.6 L620.50,275.6 L621.00,275.6 L621.50,275.6 L622.00,275.6 L622.50,275.6 L623.00,275.6 L623.50,275.6 L624.00,275.6 L624.50,275.6 L625.00,275.6 L625.50,275.6 L626.00,275.6 L626.50,275.6 L627.00,275.6 L627.50,275.6 L628.00,275.6 L628.50,275.5 L629.00,275.4 L629.50,275.0 L630.00,272.9 L630.50,268.2 L630.67,267.6 L631.00,269.6 L631.50,273.9 L632.00,275.2 L632.50,275.4 L633.00,275.5 L633.50,275.6 L634.00,275.6 L634.50,275.6 L635.00,275.6 L635.50,275.6 L636.00,275.6 L636.50,275.6 L637.00,275.6 L637.50,275.7 L638.00,275.7 L638.50,275.7 L639.00,275.7 L639.50,275.7 L640.00,275.7 L640.50,275.7 L641.00,275.7 L641.50,275.7 L642.00,275.7 L642.50,275.7 L643.00,275.7 L643.50,275.7 L644.00,275.7 L644.50,275.7 L645.00,275.7 L645.50,275.7 L646.00,275.7 L646.50,275.7 L647.00,275.7 L647.50,275.7 L648.00,275.7 L648.50,275.6 L649.00,275.6 L649.50,275.6 L650.00,275.6 L650.50,275.6 L651.00,275.6 L651.50,275.5 L652.00,275.5 L652.50,275.2 L653.00,274.0 L653.50,269.8 L653.85,267.6 L654.00,268.1 L654.50,272.7 L655.00,275.0 L655.50,275.4 L656.00,275.5 L656.50,275.6 L657.00,275.6 L657.50,275.6 L658.00,275.6 L658.50,275.6 L659.00,275.7 L659.50,275.7 L660.00,275.7 L660.50,275.7 L661.00,275.7 L661.50,275.7 L662.00,275.7 L662.50,275.7 L663.00,275.7 L663.50,275.7 L664.00,275.7 L664.50,275.7 L665.00,275.7 L665.50,275.7 L666.00,275.7 L666.50,275.7 L667.00,275.7 L667.50,275.7 L668.00,275.7 L668.50,275.7 L669.00,275.7 L669.50,275.7 L670.00,275.7 L670.50,275.7 L671.00,275.7 L671.50,275.7 L672.00,275.7 L672.50,275.6 L673.00,275.6 L673.50,275.6 L674.00,275.5 L674.50,274.8 L675.00,272.7 L675.32,271.8 L675.50,272.1 L676.00,274.4 L676.50,275.4 L677.00,275.6 L677.50,275.6 L678.00,275.6 L678.50,275.7 L679.00,275.7 L679.50,275.7 L680.00,275.7 L680.50,275.7 L681.00,275.7 L681.50,275.7 L682.00,275.7 L682.50,275.7 L683.00,275.7 L683.50,275.7 L684.00,275.7 L684.50,275.7 L685.00,275.7 L685.50,275.7 L686.00,275.7 L686.50,275.7 L687.00,275.7 L687.50,275.7 L688.00,275.7 L688.50,275.7 L689.00,275.7 L689.50,275.7 L690.00,275.7 L690.50,275.7 L691.00,275.7 L691.50,275.7 L692.00,275.7 L692.50,275.7 L693.00,275.7 L693.50,275.7 L694.00,275.7 L694.50,275.7 L695.00,275.7 L695.50,275.6 L696.00,275.6 L696.50,275.6 L697.00,275.5 L697.50,275.4 L698.00,274.7 L698.50,271.6 L699.00,267.6 L699.02,267.6 L699.50,271.1 L700.00,274.6 L700.50,275.4 L701.00,275.5 L701.50,275.6 L702.00,275.6 L702.50,275.6 L703.00,275.7 L703.50,275.7 L704.00,275.7 L704.50,275.7 L705.00,275.7 L705.50,275.7 L706.00,275.7 L706.50,275.7 L707.00,275.7 L707.50,275.7 L708.00,275.7 L708.50,275.6 L709.00,275.6 L709.50,275.6 L710.00,275.6 L710.50,275.5 L711.00,275.3 L711.50,274.6 L712.00,271.1 L712.50,266.7 L712.52,266.7 L713.00,270.6 L713.50,274.3 L714.00,275.2 L714.50,275.3 L715.00,275.1 L715.50,273.5 L716.00,269.2 L716.25,268.1 L716.50,269.3 L717.00,273.6 L717.50,275.2 L718.00,275.5 L718.50,275.6 L719.00,275.6 L719.50,275.6 L720.00,275.7 L720.50,275.7 L721.00,275.7 L721.50,275.7 L722.00,275.7 L722.50,275.7 L723.00,275.7 L723.50,275.7 L724.00,275.7 L724.50,275.7 L725.00,275.7 L725.50,275.7 L726.00,275.7 L726.50,275.7 L727.00,275.7 L727.50,275.7 L728.00,275.7 L728.50,275.7 L729.00,275.7 L729.50,275.7 L730.00,275.7 L730.50,275.7 L731.00,275.7 L731.50,275.7 L732.00,275.7 L732.50,275.7 L733.00,275.7 L733.50,275.7 L734.00,275.7 L734.50,275.7 L735.00,275.7 L735.50,275.7 L736.00,275.7 L736.50,275.7 L737.00,275.7 L737.50,275.7 L738.00,275.7 L738.50,275.6 L739.00,275.6 L739.50,275.5 L740.00,274.9 L740.50,272.2 L741.00,268.9 L741.01,268.9 L741.50,272.0 L742.00,274.8 L742.50,275.4 L743.00,275.6 L743.50,275.6 L744.00,275.7 L744.50,275.7 L745.00,275.7 L745.50,275.7 L746.00,275.7 L746.50,275.7 L747.00,275.7 L747.50,275.7 L748.00,275.7 L748.50,275.7 L749.00,275.7 L749.50,275.7 L750.00,275.7 L750.50,275.7 L751.00,275.7 L751.50,275.7 L752.00,275.7 L752.50,275.7 L753.00,275.7 L753.50,275.7 L754.00,275.7 L754.50,275.7 L755.00,275.7 L755.50,275.7 L756.00,275.7 L756.50,275.7 L757.00,275.7 L757.50,275.7 L758.00,275.7 L758.50,275.7 L759.00,275.7 L759.50,275.7 L760.00,275.7 L760.50,275.7 L761.00,275.7 L761.50,275.7 L762.00,275.7 L762.50,275.7 L763.00,275.7 L763.50,275.7 L764.00,275.7 L764.50,275.7 L765.00,275.7 L765.50,275.7 L766.00,275.7 L766.50,275.7 L767.00,275.7 L767.50,275.7 L768.00,275.7 L768.50,275.7 L769.00,275.7 L769.50,275.7 L770.00,275.7 L770.50,275.7 L771.00,275.7 L771.50,275.7 L772.00,275.7 L772.50,275.7 L773.00,275.7 L773.50,275.7 L774.00,275.7 L774.50,275.7 L775.00,275.7 L775.50,275.7 L776.00,275.7 L776.50,275.7 L777.00,275.7 L777.50,275.7 L778.00,275.7 L778.50,275.7 L779.00,275.6 L779.50,275.0 L780.00,274.3 L780.03,274.3 L780.50,274.9 L781.00,275.5 L781.50,275.7 L782.00,275.7 L782.50,275.7 L783.00,275.7 L783.50,275.7 L784.00,275.7 L784.50,275.7 L785.00,275.7 L785.50,275.7 L786.00,275.7 L786.50,275.8 L787.00,275.8 L787.50,275.8 L788.00,275.8 L788.50,275.8 L789.00,275.8" fill="none" stroke="#ff8000" stroke-width="1" shape-rendering="crispEdges"/><path d="M50.50,452.4 L51.00,452.4 L51.50,452.4 L52.00,452.4 L52.50,452.4 L53.00,452.4 L53.50,452.4 L54.00,452.4 L54.50,452.4 L55.00,452.4 L55.50,452.4 L56.00,452.4 L56.50,452.4 L57.00,452.4 L57.50,452.4 L58.00,452.4 L58.50,452.4 L59.00,452.4 L59.50,452.4 L60.00,452.4 L60.50,452.4 L61.00,452.4 L61.50,452.4 L62.00,452.3 L62.50,452.3 L63.00,452.3 L63.50,452.3 L64.00,452.3 L64.50,452.3 L65.00,452.3 L65.50,452.3 L66.00,452.3 L66.50,452.3 L67.00,452.2 L67.50,452.2 L68.00,452.1 L68.50,452.0 L69.00,451.9 L69.50,451.5 L70.00,450.4 L70.50,442.3 L71.00,426.1 L71.00,426.1 L71.50,431.7 L71.85,431.7 L72.00,434.3 L72.50,447.5 L73.00,451.2 L73.50,451.7 L74.00,452.0 L74.50,452.1 L75.00,452.2 L75.50,452.2 L76.00,452.3 L76.50,452.3 L77.00,452.3 L77.50,452.3 L78.00,452.3 L78.50,452.3 L79.00,452.3 L79.50,452.3 L80.00,452.3 L80.50,452.3 L81.00,452.4 L81.50,452.4 L82.00,452.4 L82.50,452.4 L83.00,452.4 L83.50,452.4 L84.00,452.4 L84.50,452.4 L85.00,452.4 L85.50,452.4 L86.00,452.4 L86.50,452.4 L87.00,452.4 L87.50,452.4 L88.00,452.4 L88.50,452.4 L89.00,452.4 L89.50,452.4 L90.00,452.4 L90.50,452.4 L91.00,452.4 L91.50,452.4 L92.00,452.4 L92.50,452.4 L93.00,452.4 L93.50,452.4 L94.00,452.4 L94.50,452.4 L95.00,452.4 L95.50,452.4 L96.00,452.4 L96.50,452.4 L97.00,452.4 L97.50,452.4 L98.00,452.4 L98.50,452.4 L99.00,452.4 L99.50,452.4 L100.00,452.4 L100.50,452.4 L101.00,452.4 L101.50,452.4 L102.00,452.4 L102.50,452.4 L103.00,452.4 L103.50,452.4 L104.00,452.4 L104.50,452.4 L105.00,452.4 L105.50,452.4 L106.00,452.4 L106.50,452.4 L107.00,452.4 L107.50,452.4 L108.00,452.4 L108.50,452.4 L109.00,452.4 L109.50,452.4 L110.00,452.4 L110.50,452.4 L111.00,452.4 L111.50,452.4 L112.00,452.4 L112.50,452.4 L113.00,452.4 L113.50,452.4 L114.00,452.3 L114.50,452.3 L115.00,452.3 L115.50,452.3 L116.00,452.3 L116.50,452.2 L117.00,452.2 L117.50,452.2 L118.00,452.1 L118.50,452.1 L119.00,452.0 L119.50,451.9 L120.00,451.8 L120.50,451.4 L121.00,450.2 L121.50,440.7 L122.00,420.6 L122.03,420.5 L122.50,438.4 L123.00,449.8 L123.50,451.2 L124.00,451.6 L124.50,451.7 L125.00,451.7 L125.50,451.7 L126.00,451.7 L126.50,451.6 L127.00,451.5 L127.50,451.3 L128.00,451.1 L128.50,450.8 L129.00,450.3 L129.50,449.5 L130.00,448.0 L130.50,444.3 L131.00,421.3 L131.50,355.1 L131.59,349.0 L132.00,354.1 L132.50,278.0 L132.66,278.0 L133.00,300.3 L133.50,363.2 L133.72,361.5 L134.00,388.1 L134.50,436.7 L135.00,446.7 L135.50,448.9 L136.00,450.0 L136.50,450.6 L137.00,451.0 L137.50,451.3 L138.00,451.5 L138.50,451.6 L139.00,451.8 L139.50,451.9 L140.00,451.9 L140.50,452.0 L141.00,452.0 L141.50,452.1 L142.00,452.1 L142.50,452.1 L143.00,452.2 L143.50,452.2 L144.00,452.2 L144.50,452.2 L145.00,452.2 L145.50,452.2 L146.00,452.2 L146.50,452.2 L147.00,452.2 L147.50,452.2 L148.00,452.2 L148.50,452.2 L149.00,452.3 L149.50,452.3 L150.00,452.3 L150.50,452.3 L151.00,452.3 L151.50,452.3 L152.00,452.3 L152.50,452.3 L153.00,452.3 L153.50,452.3 L154.00,452.3 L154.50,452.3 L155.00,452.3 L155.50,452.2 L156.00,452.2 L156.50,452.2 L157.00,452.1 L157.50,452.1 L158.00,452.0 L158.50,451.8 L159.00,451.6 L159.50,451.2 L160.00,450.3 L160.50,445.9 L161.00,417.3 L161.36,394.2 L161.50,398.8 L162.00,437.3 L162.50,446.5 L163.00,432.4 L163.49,406.6 L163.50,406.7 L164.00,434.9 L164.50,449.1 L165.00,451.0 L165.50,451.5 L166.00,451.8 L166.50,451.9 L167.00,452.0 L167.50,452.1 L168.00,452.2 L168.50,452.2 L169.00,452.2 L169.50,452.2 L170.00,452.3 L170.50,452.3 L171.00,452.3 L171.50,452.3 L172.00,452.3 L172.50,452.3 L173.00,452.3 L173.50,452.3 L174.00,452.3 L174.50,452.3 L175.00,452.3 L175.50,452.3 L176.00,452.3 L176.50,452.3 L177.00,452.3 L177.50,452.4 L178.00,452.4 L178.50,452.4 L179.00,452.4 L179.50,452.4 L180.00,452.4 L180.50,452.4 L181.00,452.4 L181.50,452.4 L182.00,452.4 L182.50,452.4 L183.00,452.4 L183.50,452.4 L184.00,452.4 L184.50,452.4 L185.00,452.4 L185.50,452.4 L186.00,452.4 L186.50,452.4 L187.00,452.4 L187.50,452.4 L188.00,452.4 L188.50,452.4 L189.00,452.4 L189.50,452.4 L190.00,452.4 L190.50,452.4 L191.00,452.4 L191.50,452.4 L192.00,452.4 L192.50,452.4 L193.00,452.4 L193.50,452.4 L194.00,452.4 L194.50,452.4 L195.00,452.4 L195.50,452.4 L196.00,452.4 L196.50,452.4 L197.00,452.4 L197.50,452.4 L198.00,452.4 L198.50,452.4 L199.00,452.4 L199.50,452.4 L200.00,452.4 L200.50,452.4 L201.00,452.4 L201.50,452.4 L202.00,452.4 L202.50,452.4 L203.00,452.4 L203.50,452.4 L204.00,452.4 L204.50,452.4 L205.00,452.4 L205.50,452.4 L206.00,452.4 L206.50,452.3 L207.00,452.3 L207.50,452.3 L208.00,452.3 L208.50,452.3 L209.00,452.3 L209.50,452.3 L210.00,452.2 L210.50,452.2 L211.00,452.2 L211.50,452.2 L212.00,452.2 L212.50,452.2 L213.00,452.2 L213.50,452.1 L214.00,452.1 L214.50,452.1 L215.00,452.0 L215.50,452.0 L216.00,451.9 L216.50,451.9 L217.00,451.8 L217.50,451.7 L218.00,451.6 L218.50,451.4 L219.00,451.1 L219.50,450.8 L220.00,450.3 L220.50,449.4 L221.00,447.9 L221.50,444.3 L222.00,426.9 L222.48,378.0 L222.50,375.4 L223.00,278.0 L223.23,278.0 L223.50,278.0 L224.00,297.0 L224.08,301.6 L224.50,380.7 L225.00,437.1 L225.50,445.9 L226.00,448.4 L226.50,449.6 L227.00,450.4 L227.50,450.8 L228.00,451.1 L228.50,451.4 L229.00,451.5 L229.50,451.6 L230.00,451.7 L230.50,451.6 L231.00,451.4 L231.50,449.5 L232.00,442.3 L232.15,441.2 L232.50,445.3 L233.00,450.8 L233.50,451.7 L234.00,451.9 L234.50,451.9 L235.00,452.0 L235.50,451.9 L236.00,451.9 L236.50,451.7 L237.00,451.2 L237.50,447.6 L238.00,436.2 L238.11,435.0 L238.50,438.6 L238.96,439.7 L239.00,440.0 L239.50,448.1 L240.00,451.4 L240.50,451.9 L241.00,452.1 L241.50,452.2 L242.00,452.2 L242.50,452.3 L243.00,452.3 L243.50,452.3 L244.00,452.3 L244.50,452.3 L245.00,452.3 L245.50,452.3 L246.00,452.3 L246.50,452.3 L247.00,452.3 L247.50,452.3 L248.00,452.3 L248.50,452.2 L249.00,452.2 L249.50,452.1 L250.00,451.9 L250.50,451.2 L251.00,445.3 L251.50,434.4 L251.50,434.4 L252.00,445.2 L252.50,451.1 L253.00,451.9 L253.50,452.1 L254.00,452.2 L254.50,452.2 L255.00,452.3 L255.50,452.3 L256.00,452.3 L256.50,452.3 L257.00,452.3 L257.50,452.3 L258.00,452.3 L258.50,452.3 L259.00,452.3 L259.50,452.3 L260.00,452.3 L260.50,452.3 L261.00,452.3 L261.50,452.3 L262.00,452.3 L262.50,452.3 L263.00,452.3 L263.50,452.2 L264.00,452.2 L264.50,452.2 L265.00,452.1 L265.50,452.1 L266.00,451.9 L266.50,451.8 L267.00,451.5 L267.50,450.8 L268.00,448.2 L268.50,429.5 L268.93,404.4 L269.00,404.6 L269.50,421.2 L269.79,424.0 L270.00,430.5 L270.50,447.0 L271.00,450.8 L271.50,451.5 L272.00,451.8 L272.50,451.9 L273.00,452.0 L273.50,452.1 L274.00,452.2 L274.50,452.2 L275.00,452.2 L275.50,452.2 L276.00,452.2 L276.50,452.0 L277.00,451.2 L277.50,447.1 L277.76,445.5 L278.00,447.0 L278.50,451.2 L279.00,452.1 L279.50,452.2 L280.00,452.3 L280.50,452.3 L281.00,452.3 L281.50,452.3 L282.00,452.3 L282.50,452.3 L283.00,452.3 L283.50,452.3 L284.00,452.3 L284.50,452.3 L285.00,452.3 L285.50,452.4 L286.00,452.4 L286.50,452.4 L287.00,452.4 L287.50,452.4 L288.00,452.4 L288.50,452.4 L289.00,452.4 L289.50,452.4 L290.00,452.3 L290.50,452.3 L291.00,452.3 L291.50,452.3 L292.00,451.9 L292.50,450.3 L292.75,449.7 L293.00,450.3 L293.50,451.9 L294.00,452.3 L294.50,452.3 L295.00,452.3 L295.50,452.3 L296.00,452.3 L296.50,452.3 L297.00,452.3 L297.50,452.3 L298.00,452.3 L298.50,452.2 L299.00,452.1 L299.50,452.0 L300.00,451.3 L300.50,446.6 L300.93,440.6 L301.00,440.9 L301.50,448.6 L302.00,451.7 L302.50,452.0 L303.00,452.1 L303.50,452.2 L304.00,452.2 L304.50,452.2 L305.00,452.2 L305.50,452.2 L306.00,452.1 L306.50,452.1 L307.00,452.0 L307.50,451.9 L308.00,451.8 L308.50,451.6 L309.00,451.2 L309.50,450.4 L310.00,447.8 L310.50,428.5 L311.00,384.5 L311.03,383.6 L311.50,398.5 L311.77,406.1 L312.00,418.7 L312.50,444.4 L313.00,450.0 L313.50,451.0 L314.00,451.5 L314.50,451.8 L315.00,451.9 L315.50,452.0 L316.00,452.1 L316.50,452.1 L317.00,452.2 L317.50,452.2 L318.00,452.2 L318.50,452.3 L319.00,452.3 L319.50,452.3 L320.00,452.3 L320.50,452.3 L321.00,452.3 L321.50,452.3 L322.00,452.3 L322.50,452.3 L323.00,452.3 L323.50,452.3 L324.00,452.3 L324.50,452.3 L325.00,452.3 L325.50,452.3 L326.00,452.3 L326.50,452.3 L327.00,452.3 L327.50,452.3 L328.00,452.4 L328.50,452.4 L329.00,452.4 L329.50,452.4 L330.00,452.4 L330.50,452.4 L331.00,452.4 L331.50,452.4 L332.00,452.4 L332.50,452.4 L333.00,452.3 L333.50,452.3 L334.00,452.3 L334.50,452.3 L335.00,452.2 L335.50,452.0 L336.00,450.0 L336.50,445.6 L336.54,445.5 L337.00,449.3 L337.50,451.8 L338.00,452.2 L338.50,452.2 L339.00,452.3 L339.50,452.3 L340.00,452.2 L340.50,451.3 L341.00,449.7 L341.01,449.7 L341.50,451.3 L342.00,452.2 L342.50,452.3 L343.00,452.3 L343.50,452.3 L344.00,452.3 L344.50,452.4 L345.00,452.4 L345.50,452.4 L346.00,452.4 L346.50,452.4 L347.00,452.4 L347.50,452.4 L348.00,452.4 L348.50,452.4 L349.00,452.4 L349.50,452.4 L350.00,452.3 L350.50,452.3 L351.00,452.3 L351.50,452.3 L352.00,452.3 L352.50,452.3 L353.00,452.2 L353.50,452.1 L354.00,451.3 L354.50,446.5 L354.83,443.4 L355.00,444.5 L355.50,450.5 L356.00,452.0 L356.50,452.2 L357.00,452.3 L357.50,452.3 L358.00,452.3 L358.50,452.3 L359.00,452.3 L359.50,452.3 L360.00,452.3 L360.50,452.3 L361.00,452.3 L361.50,452.3 L362.00,452.3 L362.50,452.3 L363.00,452.3 L363.50,452.2 L364.00,452.1 L364.50,451.7 L365.00,448.3 L365.46,443.4 L365.50,443.5 L366.00,449.3 L366.50,451.8 L367.00,452.1 L367.50,452.2 L368.00,452.3 L368.50,452.3 L369.00,452.3 L369.50,452.3 L370.00,452.3 L370.50,452.3 L371.00,452.3 L371.50,452.3 L372.00,452.3 L372.50,452.3 L373.00,452.3 L373.50,452.3 L374.00,452.3 L374.50,452.3 L375.00,452.3 L375.50,452.3 L376.00,452.3 L376.50,452.3 L377.00,452.3 L377.50,452.3 L378.00,452.3 L378.50,452.2 L379.00,452.2 L379.50,452.1 L380.00,452.0 L380.50,451.8 L381.00,451.3 L381.50,448.5 L382.00,434.7 L382.25,428.8 L382.50,431.0 L383.00,433.4 L383.10,433.8 L383.50,442.8 L384.00,450.4 L384.50,451.6 L385.00,451.9 L385.50,452.1 L386.00,452.2 L386.50,452.2 L387.00,452.3 L387.50,452.3 L388.00,452.3 L388.50,452.3 L389.00,452.3 L389.50,452.3 L390.00,452.3 L390.50,452.3 L391.00,452.3 L391.50,452.3 L392.00,452.3 L392.50,452.3 L393.00,452.4 L393.50,452.4 L394.00,452.4 L394.50,452.4 L395.00,452.4 L395.50,452.4 L396.00,452.4 L396.50,452.4 L397.00,452.4 L397.50,452.4 L398.00,452.4 L398.50,452.4 L399.00,452.4 L399.50,452.4 L400.00,452.4 L400.50,452.4 L401.00,452.4 L401.50,452.4 L402.00,452.3 L402.50,452.3 L403.00,452.3 L403.50,452.3 L404.00,452.3 L404.50,452.3 L405.00,452.3 L405.50,452.2 L406.00,452.2 L406.50,452.1 L407.00,451.8 L407.50,450.9 L408.00,444.0 L408.50,430.8 L408.51,430.8 L409.00,443.6 L409.50,450.9 L410.00,451.8 L410.50,452.1 L411.00,452.2 L411.50,452.2 L412.00,452.3 L412.50,452.3 L413.00,452.3 L413.50,452.3 L414.00,452.3 L414.50,452.3 L415.00,452.3 L415.50,452.4 L416.00,452.4 L416.50,452.4 L417.00,452.4 L417.50,452.4 L418.00,452.4 L418.50,452.4 L419.00,452.4 L419.50,452.4 L420.00,452.4 L420.50,452.4 L421.00,452.4 L421.50,452.4 L422.00,452.4 L422.50,452.4 L423.00,452.4 L423.50,452.4 L424.00,452.4 L424.50,452.4 L425.00,452.4 L425.50,452.4 L426.00,452.4 L426.50,452.4 L427.00,452.4 L427.50,452.4 L428.00,452.4 L428.50,452.3 L429.00,452.3 L429.50,452.3 L430.00,452.3 L430.50,452.3 L431.00,452.2 L431.50,451.6 L432.00,448.2 L432.32,446.1 L432.50,446.9 L433.00,451.1 L433.50,452.1 L434.00,452.2 L434.50,452.3 L435.00,452.3 L435.50,452.3 L436.00,452.3 L436.50,452.2 L437.00,451.8 L437.50,449.5 L437.85,447.7 L438.00,448.1 L438.50,451.3 L439.00,452.2 L439.50,452.3 L440.00,452.3 L440.50,452.3 L441.00,452.3 L441.50,452.4 L442.00,452.4 L442.50,452.4 L443.00,452.4 L443.50,452.4 L444.00,452.3 L444.50,452.3 L445.00,452.3 L445.50,452.3 L446.00,452.3 L446.50,452.3 L447.00,452.3 L447.50,452.3 L448.00,452.3 L448.50,452.2 L449.00,452.2 L449.50,452.0 L450.00,450.8 L450.50,448.7 L450.50,448.7 L451.00,450.9 L451.50,452.0 L452.00,452.1 L452.50,452.2 L453.00,452.2 L453.50,452.1 L454.00,452.1 L454.50,452.1 L455.00,452.0 L455.50,452.0 L456.00,451.9 L456.50,451.8 L457.00,451.6 L457.50,451.4 L458.00,451.1 L458.50,450.5 L459.00,449.5 L459.50,447.5 L460.00,438.6 L460.50,376.8 L460.91,302.2 L461.00,303.1 L461.50,357.7 L461.66,369.9 L462.00,407.7 L462.50,442.3 L463.00,448.5 L463.50,450.0 L464.00,450.8 L464.50,451.2 L465.00,451.5 L465.50,451.7 L466.00,451.8 L466.50,451.9 L467.00,451.9 L467.50,451.9 L468.00,451.0 L468.50,448.6 L468.57,448.6 L469.00,450.4 L469.50,451.9 L470.00,452.1 L470.50,452.2 L471.00,452.2 L471.50,452.2 L472.00,452.2 L472.50,452.3 L473.00,452.3 L473.50,452.3 L474.00,452.3 L474.50,452.3 L475.00,452.3 L475.50,452.3 L476.00,452.3 L476.50,452.3 L477.00,452.3 L477.50,452.3 L478.00,452.4 L478.50,452.4 L479.00,452.4 L479.50,452.4 L480.00,452.4 L480.50,452.4 L481.00,452.4 L481.50,452.3 L482.00,452.3 L482.50,452.3 L483.00,452.3 L483.50,452.3 L484.00,452.3 L484.50,452.2 L485.00,452.2 L485.50,452.0 L486.00,451.5 L486.50,447.4 L487.00,437.1 L487.06,436.9 L487.50,444.9 L488.00,451.1 L488.50,451.9 L489.00,452.1 L489.50,452.2 L490.00,452.2 L490.50,452.3 L491.00,452.3 L491.50,452.3 L492.00,452.3 L492.50,452.3 L493.00,452.3 L493.50,452.3 L494.00,452.3 L494.50,452.3 L495.00,452.3 L495.50,452.3 L496.00,452.3 L496.50,452.3 L497.00,452.2 L497.50,452.2 L498.00,452.1 L498.50,452.1 L499.00,451.9 L499.50,451.7 L500.00,451.1 L500.50,448.2 L501.00,431.5 L501.31,421.0 L501.50,423.3 L502.00,430.4 L502.16,431.1 L502.50,439.9 L503.00,449.7 L503.50,451.4 L504.00,451.8 L504.50,452.0 L505.00,452.1 L505.50,452.2 L506.00,452.2 L506.50,452.3 L507.00,452.3 L507.50,452.3 L508.00,452.3 L508.50,452.3 L509.00,452.3 L509.50,452.3 L510.00,452.3 L510.50,452.3 L511.00,452.3 L511.50,452.3 L512.00,452.4 L512.50,452.4 L513.00,452.4 L513.50,452.4 L514.00,452.4 L514.50,452.4 L515.00,452.4 L515.50,452.4 L516.00,452.4 L516.50,452.4 L517.00,452.4 L517.50,452.4 L518.00,452.4 L518.50,452.4 L519.00,452.4 L519.50,452.4 L520.00,452.4 L520.50,452.4 L521.00,452.4 L521.50,452.4 L522.00,452.4 L522.50,452.4 L523.00,452.4 L523.50,452.4 L524.00,452.4 L524.50,452.4 L525.00,452.4 L525.50,452.4 L526.00,452.4 L526.50,452.4 L527.00,452.4 L527.50,452.4 L528.00,452.3 L528.50,452.3 L529.00,452.3 L529.50,451.9 L530.00,450.0 L530.22,449.5 L530.50,450.3 L531.00,452.0 L531.50,452.3 L532.00,452.3 L532.50,452.3 L533.00,452.3 L533.50,452.3 L534.00,452.3 L534.50,452.3 L535.00,452.2 L535.50,452.2 L536.00,451.7 L536.50,448.6 L536.92,445.0 L537.00,445.2 L537.50,450.2 L538.00,452.0 L538.50,452.2 L539.00,452.3 L539.50,452.3 L540.00,452.3 L540.50,452.3 L541.00,452.3 L541.50,452.3 L542.00,452.3 L542.50,452.3 L543.00,452.3 L543.50,452.3 L544.00,452.3 L544.50,452.3 L545.00,452.3 L545.50,452.3 L546.00,452.3 L546.50,452.1 L547.00,450.6 L547.44,448.8 L547.50,448.8 L548.00,451.2 L548.50,452.2 L549.00,452.3 L549.50,452.3 L550.00,452.3 L550.50,452.3 L551.00,452.3 L551.50,452.3 L552.00,452.3 L552.50,452.3 L553.00,452.3 L553.50,452.3 L554.00,452.3 L554.50,452.2 L555.00,452.2 L555.50,452.0 L556.00,451.8 L556.50,450.2 L557.00,440.6 L557.33,434.4 L557.50,436.5 L558.00,448.5 L558.50,451.6 L559.00,452.0 L559.50,452.1 L560.00,452.2 L560.50,452.2 L561.00,452.3 L561.50,452.3 L562.00,452.3 L562.50,452.3 L563.00,452.3 L563.50,452.3 L564.00,452.3 L564.50,452.3 L565.00,452.3 L565.50,452.3 L566.00,452.3 L566.50,452.2 L567.00,452.2 L567.50,452.1 L568.00,451.9 L568.50,450.9 L569.00,444.9 L569.34,440.6 L569.50,441.8 L570.00,449.6 L570.50,451.7 L571.00,451.9 L571.50,451.9 L572.00,451.9 L572.50,451.7 L573.00,451.5 L573.50,450.8 L574.00,447.7 L574.50,427.5 L574.87,410.3 L575.00,413.3 L575.50,440.0 L576.00,438.2 L576.46,424.4 L576.50,424.6 L577.00,442.4 L577.50,450.4 L578.00,451.4 L578.50,451.8 L579.00,452.0 L579.50,452.1 L580.00,452.1 L580.50,452.2 L581.00,452.2 L581.50,452.2 L582.00,452.3 L582.50,452.3 L583.00,452.3 L583.50,452.3 L584.00,452.3 L584.50,452.3 L585.00,452.3 L585.50,452.3 L586.00,452.3 L586.50,452.3 L587.00,452.3 L587.50,452.3 L588.00,452.3 L588.50,452.4 L589.00,452.4 L589.50,452.4 L590.00,452.4 L590.50,452.4 L591.00,452.4 L591.50,452.4 L592.00,452.4 L592.50,452.4 L593.00,452.4 L593.50,452.4 L594.00,452.3 L594.50,452.3 L595.00,452.2 L595.50,451.7 L596.00,449.9 L596.13,449.7 L596.50,450.8 L597.00,452.1 L597.50,452.3 L598.00,452.3 L598.50,452.4 L599.00,452.4 L599.50,452.4 L600.00,452.4 L600.50,452.4 L601.00,452.4 L601.50,452.4 L602.00,452.4 L602.50,452.4 L603.00,452.4 L603.50,452.4 L604.00,452.4 L604.50,452.4 L605.00,452.4 L605.50,452.4 L606.00,452.4 L606.50,452.4 L607.00,452.4 L607.50,452.4 L608.00,452.4 L608.50,452.4 L609.00,452.4 L609.50,452.4 L610.00,452.4 L610.50,452.4 L611.00,452.4 L611.50,452.4 L612.00,452.4 L612.50,452.4 L613.00,452.4 L613.50,452.4 L614.00,452.4 L614.50,452.4 L615.00,452.4 L615.50,452.4 L616.00,452.4 L616.50,452.4 L617.00,452.4 L617.50,452.4 L618.00,452.4 L618.50,452.4 L619.00,452.4 L619.50,452.4 L620.00,452.4 L620.50,452.4 L621.00,452.4 L621.50,452.4 L622.00,452.3 L622.50,452.3 L623.00,452.3 L623.50,452.3 L624.00,451.9 L624.50,450.0 L624.83,448.8 L625.00,449.2 L625.50,451.6 L626.00,452.2 L626.50,452.3 L627.00,452.3 L627.50,452.3 L628.00,452.3 L628.50,452.3 L629.00,452.3 L629.50,452.3 L630.00,452.2 L630.50,451.7 L631.00,449.4 L631.21,448.8 L631.50,449.8 L632.00,451.9 L632.50,452.2 L633.00,452.3 L633.50,452.3 L634.00,452.3 L634.50,452.4 L635.00,452.4 L635.50,452.4 L636.00,452.4 L636.50,452.4 L637.00,452.3 L637.50,452.3 L638.00,452.3 L638.50,452.3 L639.00,451.9 L639.50,450.1 L639.71,449.7 L640.00,450.5 L640.50,452.0 L641.00,452.3 L641.50,452.3 L642.00,452.3 L642.50,452.4 L643.00,452.4 L643.50,452.4 L644.00,452.4 L644.50,452.4 L645.00,452.4 L645.50,452.4 L646.00,452.4 L646.50,452.4 L647.00,452.4 L647.50,452.4 L648.00,452.4 L648.50,452.4 L649.00,452.4 L649.50,452.4 L650.00,452.3 L650.50,452.3 L651.00,452.3 L651.50,452.3 L652.00,452.3 L652.50,452.3 L653.00,452.2 L653.50,451.4 L654.00,448.3 L654.17,447.8 L654.50,449.5 L655.00,451.8 L655.50,452.2 L656.00,452.2 L656.50,452.3 L657.00,452.3 L657.50,452.3 L658.00,452.3 L658.50,452.3 L659.00,452.3 L659.50,452.3 L660.00,452.2 L660.50,452.2 L661.00,452.2 L661.50,452.1 L662.00,452.1 L662.50,452.0 L663.00,451.9 L663.50,451.7 L664.00,451.4 L664.50,450.8 L665.00,448.4 L665.50,431.3 L665.97,403.9 L666.00,403.7 L666.50,415.9 L666.82,416.7 L667.00,423.0 L667.50,444.8 L668.00,450.2 L668.50,451.0 L669.00,451.2 L669.50,451.0 L670.00,448.1 L670.50,433.3 L670.75,427.8 L671.00,433.4 L671.50,448.3 L672.00,451.3 L672.50,451.7 L673.00,451.9 L673.50,452.0 L674.00,451.7 L674.50,449.6 L674.79,448.6 L675.00,449.3 L675.50,451.6 L676.00,452.1 L676.50,452.2 L677.00,452.3 L677.50,452.3 L678.00,452.3 L678.50,452.3 L679.00,452.3 L679.50,452.3 L680.00,452.3 L680.50,452.3 L681.00,452.3 L681.50,452.3 L682.00,452.3 L682.50,452.3 L683.00,452.4 L683.50,452.4 L684.00,452.4 L684.50,452.4 L685.00,452.4 L685.50,452.4 L686.00,452.4 L686.50,452.4 L687.00,452.4 L687.50,452.4 L688.00,452.4 L688.50,452.4 L689.00,452.4 L689.50,452.4 L690.00,452.4 L690.50,452.4 L691.00,452.4 L691.50,452.4 L692.00,452.4 L692.50,452.4 L693.00,452.4 L693.50,452.4 L694.00,452.4 L694.50,452.4 L695.00,452.4 L695.50,452.4 L696.00,452.3 L696.50,452.3 L697.00,452.3 L697.50,452.3 L698.00,452.1 L698.50,450.7 L699.00,447.9 L699.02,447.9 L699.50,450.4 L700.00,452.0 L700.50,452.2 L701.00,452.3 L701.50,452.3 L702.00,452.3 L702.50,452.3 L703.00,452.3 L703.50,452.3 L704.00,452.3 L704.50,452.3 L705.00,452.3 L705.50,452.3 L706.00,452.3 L706.50,452.2 L707.00,451.5 L707.50,448.1 L707.74,447.0 L708.00,448.3 L708.50,451.5 L709.00,452.2 L709.50,452.3 L710.00,452.3 L710.50,452.3 L711.00,452.3 L711.50,452.3 L712.00,452.3 L712.50,452.3 L713.00,452.3 L713.50,452.3 L714.00,452.3 L714.50,452.2 L715.00,452.1 L715.50,451.0 L716.00,446.1 L716.25,444.3 L716.50,446.2 L717.00,451.1 L717.50,452.1 L718.00,452.2 L718.50,452.3 L719.00,452.3 L719.50,452.3 L720.00,452.3 L720.50,452.3 L721.00,452.4 L721.50,452.4 L722.00,452.4 L722.50,452.4 L723.00,452.4 L723.50,452.4 L724.00,452.4 L724.50,452.4 L725.00,452.4 L725.50,452.4 L726.00,452.4 L726.50,452.4 L727.00,452.4 L727.50,452.4 L728.00,452.4 L728.50,452.4 L729.00,452.4 L729.50,452.4 L730.00,452.4 L730.50,452.4 L731.00,452.4 L731.50,452.4 L732.00,452.4 L732.50,452.4 L733.00,452.4 L733.50,452.4 L734.00,452.4 L734.50,452.4 L735.00,452.3 L735.50,452.3 L736.00,452.3 L736.50,452.3 L737.00,452.3 L737.50,452.2 L738.00,452.1 L738.50,451.8 L739.00,449.6 L739.50,442.2 L739.63,441.4 L740.00,445.9 L740.50,451.2 L741.00,452.0 L741.50,452.2 L742.00,452.3 L742.50,452.3 L743.00,452.3 L743.50,452.3 L744.00,452.3 L744.50,452.3 L745.00,452.3 L745.50,452.3 L746.00,452.3 L746.50,452.3 L747.00,452.3 L747.50,452.3 L748.00,452.3 L748.50,452.3 L749.00,452.2 L749.50,451.6 L750.00,448.4 L750.26,447.2 L750.50,448.3 L751.00,451.5 L751.50,452.2 L752.00,452.3 L752.50,452.3 L753.00,452.3 L753.50,452.3 L754.00,452.4 L754.50,452.4 L755.00,452.4 L755.50,452.4 L756.00,452.4 L756.50,452.4 L757.00,452.4 L757.50,452.4 L758.00,452.4 L758.50,452.4 L759.00,452.4 L759.50,452.4 L760.00,452.4 L760.50,452.4 L761.00,452.4 L761.50,452.4 L762.00,452.4 L762.50,452.4 L763.00,452.4 L763.50,452.4 L764.00,452.4 L764.50,452.4 L765.00,452.4 L765.50,452.3 L766.00,452.3 L766.50,452.3 L767.00,452.2 L767.50,451.8 L768.00,449.5 L768.33,447.9 L768.50,448.4 L769.00,451.4 L769.50,452.2 L770.00,452.3 L770.50,452.3 L771.00,452.3 L771.50,452.4 L772.00,452.4 L772.50,452.4 L773.00,452.4 L773.50,452.4 L774.00,452.4 L774.50,452.4 L775.00,452.4 L775.50,452.4 L776.00,452.4 L776.50,452.4 L777.00,452.4 L777.50,452.4 L778.00,452.4 L778.50,452.4 L779.00,452.4 L779.50,452.4 L780.00,452.4 L780.50,452.4 L781.00,452.4 L781.50,452.4 L782.00,452.4 L782.50,452.4 L783.00,452.4 L783.50,452.4 L784.00,452.4 L784.50,452.4 L785.00,452.4 L785.50,452.4 L786.00,452.4 L786.50,452.4 L787.00,452.4 L787.50,452.4 L788.00,452.4 L788.50,452.4 L789.00,452.4" fill="none" stroke="#0000ff" stroke-width="1" shape-rendering="crispEdges"/><path d="M50.50,452.4 L51.00,452.4 L51.50,452.4 L52.00,452.4 L52.50,452.4 L53.00,452.4 L53.50,452.4 L54.00,452.4 L54.50,452.4 L55.00,452.4 L55.50,452.4 L56.00,452.4 L56.50,452.4 L57.00,452.4 L57.50,452.4 L58.00,452.4 L58.50,452.4 L59.00,452.4 L59.50,452.4 L60.00,452.4 L60.50,452.4 L61.00,452.4 L61.50,452.4 L62.00,452.4 L62.50,452.4 L63.00,452.4 L63.50,452.4 L64.00,452.4 L64.50,452.4 L65.00,452.4 L65.50,452.4 L66.00,452.4 L66.50,452.4 L67.00,452.4 L67.50,452.4 L68.00,452.4 L68.50,452.4 L69.00,452.4 L69.50,452.4 L70.00,452.4 L70.50,452.4 L71.00,452.4 L71.50,452.4 L72.00,452.4 L72.50,452.4 L73.00,452.4 L73.50,452.4 L74.00,452.4 L74.50,452.4 L75.00,452.4 L75.50,452.4 L76.00,452.4 L76.50,452.4 L77.00,452.4 L77.50,452.4 L78.00,452.4 L78.50,452.4 L79.00,452.4 L79.50,452.4 L80.00,452.4 L80.50,452.4 L81.00,452.4 L81.50,452.4 L82.00,452.4 L82.50,452.3 L83.00,452.3 L83.50,452.3 L84.00,452.3 L84.50,452.3 L85.00,452.3 L85.50,452.3 L86.00,452.3 L86.50,452.3 L87.00,452.3 L87.50,452.3 L88.00,452.3 L88.50,452.3 L89.00,452.2 L89.50,452.2 L90.00,452.2 L90.50,452.1 L91.00,452.0 L91.50,451.9 L92.00,451.8 L92.50,451.5 L93.00,450.9 L93.50,449.5 L94.00,445.5 L94.50,438.3 L94.71,436.9 L95.00,439.4 L95.50,446.5 L96.00,449.9 L96.50,451.0 L97.00,451.5 L97.50,451.8 L98.00,451.9 L98.50,452.0 L99.00,452.1 L99.50,452.1 L100.00,452.2 L100.50,452.2 L101.00,452.2 L101.50,452.2 L102.00,452.2 L102.50,452.2 L103.00,452.2 L103.50,452.2 L104.00,452.2 L104.50,452.2 L105.00,452.2 L105.50,452.2 L106.00,452.2 L106.50,452.2 L107.00,452.2 L107.50,452.2 L108.00,452.2 L108.50,452.2 L109.00,452.2 L109.50,452.2 L110.00,452.1 L110.50,452.1 L111.00,452.1 L111.50,452.1 L112.00,452.1 L112.50,452.0 L113.00,452.0 L113.50,451.9 L114.00,451.9 L114.50,451.8 L115.00,451.7 L115.50,451.6 L116.00,451.5 L116.50,451.3 L117.00,451.1 L117.50,450.7 L118.00,450.3 L118.50,449.6 L119.00,448.6 L119.50,446.8 L120.00,443.4 L120.50,434.7 L121.00,409.9 L121.50,364.8 L121.71,356.1 L122.00,371.7 L122.50,415.6 L123.00,436.8 L123.50,444.1 L124.00,447.2 L124.50,448.8 L125.00,449.8 L125.50,450.4 L126.00,450.8 L126.50,451.1 L127.00,451.3 L127.50,451.5 L128.00,451.6 L128.50,451.7 L129.00,451.8 L129.50,451.9 L130.00,452.0 L130.50,452.0 L131.00,452.0 L131.50,452.1 L132.00,452.1 L132.50,452.1 L133.00,452.2 L133.50,452.2 L134.00,452.2 L134.50,452.2 L135.00,452.2 L135.50,452.2 L136.00,452.2 L136.50,452.2 L137.00,452.1 L137.50,452.1 L138.00,452.1 L138.50,452.2 L139.00,452.2 L139.50,452.2 L140.00,452.2 L140.50,452.1 L141.00,452.1 L141.50,452.1 L142.00,452.1 L142.50,452.1 L143.00,452.1 L143.50,452.1 L144.00,452.1 L144.50,452.1 L145.00,452.1 L145.50,452.1 L146.00,452.1 L146.50,452.1 L147.00,452.0 L147.50,452.1 L148.00,452.0 L148.50,452.0 L149.00,452.0 L149.50,452.0 L150.00,451.9 L150.50,451.9 L151.00,451.8 L151.50,451.8 L152.00,451.7 L152.50,451.7 L153.00,451.6 L153.50,451.5 L154.00,451.4 L154.50,451.2 L155.00,451.1 L155.50,450.9 L156.00,450.7 L156.50,450.4 L157.00,450.0 L157.50,449.5 L158.00,448.8 L158.50,447.9 L159.00,446.5 L159.50,444.4 L160.00,441.0 L160.50,434.9 L161.00,421.1 L161.50,381.8 L162.00,287.1 L162.42,278.0 L162.50,278.0 L163.00,322.9 L163.50,398.8 L164.00,426.9 L164.50,437.2 L165.00,442.3 L165.50,445.2 L166.00,447.0 L166.50,448.2 L167.00,449.0 L167.50,449.6 L168.00,450.1 L168.50,450.5 L169.00,450.7 L169.50,451.0 L170.00,451.1 L170.50,451.3 L171.00,451.4 L171.50,451.5 L172.00,451.6 L172.50,451.7 L173.00,451.7 L173.50,451.8 L174.00,451.8 L174.50,451.9 L175.00,451.9 L175.50,451.9 L176.00,452.0 L176.50,452.0 L177.00,452.0 L177.50,452.0 L178.00,452.0 L178.50,452.1 L179.00,452.1 L179.50,452.1 L180.00,452.1 L180.50,452.1 L181.00,452.0 L181.50,452.0 L182.00,451.9 L182.50,451.6 L183.00,450.8 L183.50,449.0 L183.89,447.9 L184.00,448.0 L184.50,450.0 L185.00,451.3 L185.50,451.8 L186.00,452.0 L186.50,452.1 L187.00,452.1 L187.50,452.2 L188.00,452.3 L188.50,452.3 L189.00,452.3 L189.50,452.3 L190.00,452.3 L190.50,452.4 L191.00,452.4 L191.50,452.4 L192.00,452.4 L192.50,452.4 L193.00,452.4 L193.50,452.4 L194.00,452.4 L194.50,452.4 L195.00,452.4 L195.50,452.4 L196.00,452.4 L196.50,452.4 L197.00,452.4 L197.50,452.4 L198.00,452.3 L198.50,452.3 L199.00,452.3 L199.50,452.3 L200.00,452.3 L200.50,452.3 L201.00,452.3 L201.50,452.3 L202.00,452.3 L202.50,452.3 L203.00,452.3 L203.50,452.3 L204.00,452.3 L204.50,452.3 L205.00,452.3 L205.50,452.3 L206.00,452.2 L206.50,452.2 L207.00,452.2 L207.50,452.2 L208.00,452.2 L208.50,452.2 L209.00,452.2 L209.50,452.2 L210.00,452.1 L210.50,452.1 L211.00,452.1 L211.50,452.1 L212.00,452.1 L212.50,452.0 L213.00,452.0 L213.50,452.0 L214.00,451.9 L214.50,451.9 L215.00,451.8 L215.50,451.7 L216.00,451.6 L216.50,451.5 L217.00,451.4 L217.50,451.2 L218.00,451.0 L218.50,450.7 L219.00,450.4 L219.50,449.8 L220.00,449.1 L220.50,447.9 L221.00,446.1 L221.50,442.8 L222.00,435.4 L222.50,414.3 L223.00,362.9 L223.44,322.7 L223.50,323.8 L224.00,378.6 L224.50,421.7 L225.00,437.8 L225.50,443.7 L226.00,446.5 L226.50,448.1 L227.00,449.0 L227.50,449.7 L228.00,450.0 L228.50,450.3 L229.00,450.3 L229.50,450.2 L230.00,449.9 L230.50,449.0 L231.00,446.5 L231.50,439.4 L232.00,427.7 L232.15,426.4 L232.50,431.9 L233.00,443.1 L233.50,448.1 L234.00,449.9 L234.50,450.7 L235.00,451.1 L235.50,451.4 L236.00,451.5 L236.50,451.7 L237.00,451.7 L237.50,451.8 L238.00,451.9 L238.50,451.9 L239.00,451.9 L239.50,451.9 L240.00,451.9 L240.50,452.0 L241.00,452.0 L241.50,452.0 L242.00,451.9 L242.50,451.9 L243.00,451.9 L243.50,451.9 L244.00,451.8 L244.50,451.8 L245.00,451.7 L245.50,451.6 L246.00,451.5 L246.50,451.4 L247.00,451.2 L247.50,450.9 L248.00,450.4 L248.50,449.7 L249.00,448.7 L249.50,446.5 L250.00,441.3 L250.50,426.4 L251.00,395.5 L251.29,384.6 L251.50,390.9 L252.00,422.6 L252.50,439.9 L253.00,446.0 L253.50,448.4 L254.00,449.7 L254.50,450.4 L255.00,450.9 L255.50,451.2 L256.00,451.4 L256.50,451.6 L257.00,451.7 L257.50,451.8 L258.00,451.8 L258.50,451.9 L259.00,451.9 L259.50,452.0 L260.00,452.0 L260.50,452.0 L261.00,452.0 L261.50,452.0 L262.00,452.0 L262.50,452.0 L263.00,452.0 L263.50,451.9 L264.00,451.9 L264.50,451.8 L265.00,451.6 L265.50,451.4 L266.00,451.1 L266.50,450.6 L267.00,449.6 L267.50,447.0 L268.00,439.6 L268.50,425.9 L268.72,423.0 L269.00,427.4 L269.50,440.9 L270.00,447.5 L270.50,449.8 L271.00,450.7 L271.50,451.2 L272.00,451.5 L272.50,451.7 L273.00,451.9 L273.50,452.0 L274.00,452.0 L274.50,452.1 L275.00,452.1 L275.50,452.1 L276.00,452.2 L276.50,452.2 L277.00,452.2 L277.50,452.3 L278.00,452.3 L278.50,452.3 L279.00,452.3 L279.50,452.3 L280.00,452.3 L280.50,452.3 L281.00,452.3 L281.50,452.3 L282.00,452.3 L282.50,452.3 L283.00,452.3 L283.50,452.3 L284.00,452.3 L284.50,452.3 L285.00,452.3 L285.50,452.3 L286.00,452.2 L286.50,452.2 L287.00,452.2 L287.50,452.2 L288.00,452.2 L288.50,452.2 L289.00,452.2 L289.50,452.2 L290.00,452.2 L290.50,452.1 L291.00,452.1 L291.50,451.9 L292.00,451.5 L292.50,450.6 L292.75,450.4 L293.00,450.6 L293.50,451.4 L294.00,451.9 L294.50,452.0 L295.00,452.1 L295.50,452.1 L296.00,452.1 L296.50,452.1 L297.00,452.1 L297.50,452.0 L298.00,452.0 L298.50,452.0 L299.00,452.0 L299.50,451.9 L300.00,451.9 L300.50,451.8 L301.00,451.8 L301.50,451.7 L302.00,451.6 L302.50,451.5 L303.00,451.4 L303.50,451.2 L304.00,451.0 L304.50,450.8 L305.00,450.4 L305.50,449.9 L306.00,449.3 L306.50,448.1 L307.00,446.0 L307.50,441.0 L308.00,430.1 L308.37,423.0 L308.50,422.9 L309.00,427.4 L309.50,420.2 L310.00,383.9 L310.50,314.4 L310.71,300.8 L311.00,325.3 L311.50,394.2 L312.00,427.5 L312.50,439.1 L313.00,443.9 L313.50,446.5 L314.00,448.1 L314.50,449.1 L315.00,449.8 L315.50,450.3 L316.00,450.6 L316.50,450.9 L317.00,451.1 L317.50,451.3 L318.00,451.4 L318.50,451.6 L319.00,451.7 L319.50,451.7 L320.00,451.8 L320.50,451.9 L321.00,451.9 L321.50,451.9 L322.00,452.0 L322.50,452.0 L323.00,452.0 L323.50,452.1 L324.00,452.1 L324.50,452.1 L325.00,452.1 L325.50,452.1 L326.00,452.2 L326.50,452.2 L327.00,452.2 L327.50,452.2 L328.00,452.2 L328.50,452.2 L329.00,452.2 L329.50,452.2 L330.00,452.2 L330.50,452.2 L331.00,452.2 L331.50,452.2 L332.00,452.2 L332.50,452.2 L333.00,452.2 L333.50,452.2 L334.00,452.2 L334.50,452.2 L335.00,452.2 L335.50,452.2 L336.00,452.2 L336.50,452.3 L337.00,452.3 L337.50,452.2 L338.00,452.2 L338.50,452.2 L339.00,452.0 L339.50,451.8 L340.00,451.0 L340.50,449.8 L340.69,449.6 L341.00,450.1 L341.50,451.3 L342.00,451.8 L342.50,452.0 L343.00,452.1 L343.50,452.1 L344.00,452.1 L344.50,452.1 L345.00,452.1 L345.50,452.0 L346.00,452.0 L346.50,451.9 L347.00,451.8 L347.50,451.7 L348.00,451.5 L348.50,451.2 L349.00,450.7 L349.50,449.3 L350.00,445.7 L350.50,439.4 L350.68,438.4 L351.00,440.8 L351.50,446.4 L352.00,448.6 L352.50,448.7 L353.00,447.2 L353.50,442.3 L354.00,429.1 L354.50,415.3 L354.51,415.3 L355.00,428.8 L355.50,442.3 L356.00,447.6 L356.50,449.5 L357.00,450.4 L357.50,450.9 L358.00,451.2 L358.50,451.4 L359.00,451.5 L359.50,451.5 L360.00,451.5 L360.50,451.5 L361.00,451.4 L361.50,451.3 L362.00,451.1 L362.50,450.7 L363.00,450.1 L363.50,449.0 L364.00,446.3 L364.50,438.4 L365.00,420.8 L365.35,411.9 L365.50,413.9 L366.00,432.6 L366.50,444.1 L367.00,448.3 L367.50,449.9 L368.00,450.7 L368.50,451.1 L369.00,451.4 L369.50,451.6 L370.00,451.8 L370.50,451.9 L371.00,451.9 L371.50,452.0 L372.00,452.1 L372.50,452.1 L373.00,452.1 L373.50,452.2 L374.00,452.2 L374.50,452.2 L375.00,452.2 L375.50,452.2 L376.00,452.2 L376.50,452.3 L377.00,452.3 L377.50,452.3 L378.00,452.3 L378.50,452.3 L379.00,452.3 L379.50,452.3 L380.00,452.3 L380.50,452.3 L381.00,452.3 L381.50,452.3 L382.00,452.3 L382.50,452.3 L383.00,452.3 L383.50,452.3 L384.00,452.3 L384.50,452.3 L385.00,452.3 L385.50,452.3 L386.00,452.3 L386.50,452.3 L387.00,452.3 L387.50,452.3 L388.00,452.3 L388.50,452.3 L389.00,452.3 L389.50,452.3 L390.00,452.3 L390.50,452.3 L391.00,452.3 L391.50,452.3 L392.00,452.3 L392.50,452.3 L393.00,452.3 L393.50,452.3 L394.00,452.3 L394.50,452.3 L395.00,452.3 L395.50,452.3 L396.00,452.2 L396.50,452.2 L397.00,452.2 L397.50,452.2 L398.00,452.2 L398.50,452.2 L399.00,452.1 L399.50,452.1 L400.00,452.1 L400.50,452.0 L401.00,452.0 L401.50,451.9 L402.00,451.9 L402.50,451.8 L403.00,451.6 L403.50,451.5 L404.00,451.3 L404.50,451.0 L405.00,450.5 L405.50,449.8 L406.00,448.7 L406.50,446.5 L407.00,441.2 L407.50,426.1 L408.00,394.7 L408.29,383.3 L408.50,389.4 L409.00,421.7 L409.50,439.6 L410.00,445.9 L410.50,448.4 L411.00,449.7 L411.50,450.4 L412.00,450.9 L412.50,451.2 L413.00,451.4 L413.50,451.6 L414.00,451.7 L414.50,451.8 L415.00,451.9 L415.50,452.0 L416.00,452.0 L416.50,452.1 L417.00,452.1 L417.50,452.1 L418.00,452.2 L418.50,452.2 L419.00,452.2 L419.50,452.2 L420.00,452.2 L420.50,452.2 L421.00,452.2 L421.50,452.3 L422.00,452.3 L422.50,452.3 L423.00,452.3 L423.50,452.3 L424.00,452.3 L424.50,452.3 L425.00,452.3 L425.50,452.3 L426.00,452.3 L426.50,452.3 L427.00,452.3 L427.50,452.3 L428.00,452.3 L428.50,452.3 L429.00,452.3 L429.50,452.3 L430.00,452.3 L430.50,452.3 L431.00,452.3 L431.50,452.3 L432.00,452.3 L432.50,452.3 L433.00,452.3 L433.50,452.3 L434.00,452.4 L434.50,452.4 L435.00,452.4 L435.50,452.4 L436.00,452.3 L436.50,452.3 L437.00,452.3 L437.50,452.3 L438.00,452.3 L438.50,452.3 L439.00,452.3 L439.50,452.3 L440.00,452.3 L440.50,452.3 L441.00,452.3 L441.50,452.3 L442.00,452.3 L442.50,452.2 L443.00,452.2 L443.50,452.2 L444.00,452.2 L444.50,452.2 L445.00,452.2 L445.50,452.2 L446.00,452.1 L446.50,452.1 L447.00,452.1 L447.50,452.0 L448.00,452.0 L448.50,451.9 L449.00,451.7 L449.50,451.4 L450.00,450.5 L450.50,448.1 L451.00,445.5 L451.03,445.5 L451.50,447.7 L452.00,450.1 L452.50,451.1 L453.00,451.3 L453.50,451.4 L454.00,451.4 L454.50,451.4 L455.00,451.2 L455.50,451.1 L456.00,450.8 L456.50,450.5 L457.00,450.1 L457.50,449.4 L458.00,448.3 L458.50,446.6 L459.00,443.2 L459.50,435.3 L460.00,416.6 L460.27,400.5 L460.50,384.8 L461.00,345.1 L461.13,342.9 L461.50,371.1 L462.00,416.8 L462.50,436.6 L463.00,443.6 L463.50,446.7 L464.00,448.4 L464.50,449.4 L465.00,450.1 L465.50,450.6 L466.00,450.9 L466.50,451.2 L467.00,451.4 L467.50,451.5 L468.00,451.6 L468.50,451.7 L469.00,451.8 L469.50,451.9 L470.00,451.9 L470.50,452.0 L471.00,452.0 L471.50,452.0 L472.00,452.1 L472.50,452.1 L473.00,452.1 L473.50,452.1 L474.00,452.1 L474.50,452.2 L475.00,452.2 L475.50,452.2 L476.00,452.2 L476.50,452.2 L477.00,452.2 L477.50,452.2 L478.00,452.2 L478.50,452.2 L479.00,452.2 L479.50,452.2 L480.00,452.2 L480.50,452.2 L481.00,452.2 L481.50,452.2 L482.00,452.1 L482.50,452.1 L483.00,452.0 L483.50,451.7 L484.00,451.0 L484.50,449.4 L484.83,448.7 L485.00,448.9 L485.50,450.6 L486.00,451.6 L486.50,451.9 L487.00,452.1 L487.50,452.1 L488.00,452.2 L488.50,452.2 L489.00,452.2 L489.50,452.2 L490.00,452.2 L490.50,452.1 L491.00,452.1 L491.50,452.0 L492.00,451.9 L492.50,451.7 L493.00,451.2 L493.50,450.1 L494.00,447.0 L494.50,442.4 L494.61,442.1 L495.00,444.8 L495.50,448.9 L496.00,450.7 L496.50,451.2 L497.00,451.3 L497.50,450.8 L498.00,449.6 L498.33,449.1 L498.50,449.2 L499.00,450.3 L499.50,450.8 L500.00,450.4 L500.50,448.7 L501.00,444.1 L501.50,438.9 L501.52,438.9 L502.00,443.6 L502.50,448.7 L503.00,450.6 L503.50,451.4 L504.00,451.7 L504.50,451.9 L505.00,452.0 L505.50,452.1 L506.00,452.1 L506.50,452.2 L507.00,452.2 L507.50,452.2 L508.00,452.2 L508.50,452.3 L509.00,452.3 L509.50,452.3 L510.00,452.3 L510.50,452.3 L511.00,452.3 L511.50,452.3 L512.00,452.3 L512.50,452.3 L513.00,452.3 L513.50,452.3 L514.00,452.3 L514.50,452.3 L515.00,452.3 L515.50,452.3 L516.00,452.3 L516.50,452.3 L517.00,452.2 L517.50,452.2 L518.00,452.1 L518.50,452.0 L519.00,451.6 L519.50,450.5 L520.00,448.5 L520.23,448.0 L520.50,448.7 L521.00,450.7 L521.50,451.6 L522.00,452.0 L522.50,452.1 L523.00,452.2 L523.50,452.2 L524.00,452.3 L524.50,452.3 L525.00,452.3 L525.50,452.3 L526.00,452.3 L526.50,452.3 L527.00,452.3 L527.50,452.3 L528.00,452.3 L528.50,452.3 L529.00,452.3 L529.50,452.3 L530.00,452.3 L530.50,452.3 L531.00,452.3 L531.50,452.3 L532.00,452.2 L532.50,452.2 L533.00,452.2 L533.50,452.2 L534.00,452.1 L534.50,452.0 L535.00,451.8 L535.50,451.5 L536.00,450.6 L536.50,448.1 L537.00,444.3 L537.13,444.0 L537.50,446.0 L538.00,449.6 L538.50,451.1 L539.00,451.7 L539.50,451.9 L540.00,452.0 L540.50,452.1 L541.00,452.1 L541.50,452.1 L542.00,452.2 L542.50,452.2 L543.00,452.1 L543.50,452.1 L544.00,452.1 L544.50,452.0 L545.00,452.0 L545.50,451.8 L546.00,451.4 L546.50,450.2 L547.00,448.0 L547.23,447.5 L547.50,448.2 L548.00,450.3 L548.50,451.4 L549.00,451.7 L549.50,451.8 L550.00,451.8 L550.50,451.8 L551.00,451.8 L551.50,451.7 L552.00,451.6 L552.50,451.5 L553.00,451.3 L553.50,451.0 L554.00,450.6 L554.50,449.9 L555.00,448.7 L555.50,446.1 L556.00,438.9 L556.50,420.2 L557.00,400.6 L557.01,400.6 L557.50,419.5 L558.00,438.5 L558.50,446.0 L559.00,448.7 L559.50,449.9 L560.00,450.6 L560.50,451.0 L561.00,451.3 L561.50,451.5 L562.00,451.6 L562.50,451.7 L563.00,451.8 L563.50,451.8 L564.00,451.8 L564.50,451.9 L565.00,451.9 L565.50,451.9 L566.00,451.9 L566.50,451.9 L567.00,451.8 L567.50,451.8 L568.00,451.7 L568.50,451.7 L569.00,451.6 L569.50,451.4 L570.00,451.3 L570.50,451.0 L571.00,450.7 L571.50,450.2 L572.00,449.5 L572.50,448.3 L573.00,446.1 L573.50,440.9 L574.00,426.0 L574.50,392.0 L574.87,373.3 L575.00,376.4 L575.50,412.6 L576.00,435.9 L576.50,444.3 L577.00,447.5 L577.50,449.0 L578.00,450.0 L578.50,450.6 L579.00,450.9 L579.50,451.2 L580.00,451.4 L580.50,451.6 L581.00,451.7 L581.50,451.8 L582.00,451.8 L582.50,451.9 L583.00,451.9 L583.50,451.9 L584.00,451.8 L584.50,451.4 L585.00,450.4 L585.50,449.5 L585.50,449.5 L586.00,450.5 L586.50,451.5 L587.00,451.9 L587.50,452.0 L588.00,452.1 L588.50,452.2 L589.00,452.2 L589.50,452.2 L590.00,452.2 L590.50,452.2 L591.00,452.2 L591.50,452.2 L592.00,452.3 L592.50,452.3 L593.00,452.3 L593.50,452.3 L594.00,452.2 L594.50,452.2 L595.00,452.2 L595.50,452.2 L596.00,452.1 L596.50,452.0 L597.00,451.7 L597.50,450.9 L598.00,449.2 L598.25,448.7 L598.50,449.2 L599.00,450.8 L599.50,451.7 L600.00,452.0 L600.50,452.2 L601.00,452.2 L601.50,452.3 L602.00,452.3 L602.50,452.3 L603.00,452.3 L603.50,452.3 L604.00,452.3 L604.50,452.3 L605.00,452.4 L605.50,452.4 L606.00,452.4 L606.50,452.4 L607.00,452.4 L607.50,452.4 L608.00,452.4 L608.50,452.4 L609.00,452.4 L609.50,452.4 L610.00,452.4 L610.50,452.4 L611.00,452.4 L611.50,452.4 L612.00,452.4 L612.50,452.4 L613.00,452.4 L613.50,452.4 L614.00,452.4 L614.50,452.4 L615.00,452.4 L615.50,452.4 L616.00,452.4 L616.50,452.4 L617.00,452.4 L617.50,452.4 L618.00,452.3 L618.50,452.3 L619.00,452.3 L619.50,452.3 L620.00,452.3 L620.50,452.3 L621.00,452.3 L621.50,452.2 L622.00,452.2 L622.50,452.1 L623.00,451.8 L623.50,451.0 L624.00,449.4 L624.30,448.8 L624.50,449.1 L625.00,450.8 L625.50,451.7 L626.00,452.0 L626.50,452.2 L627.00,452.2 L627.50,452.3 L628.00,452.3 L628.50,452.3 L629.00,452.3 L629.50,452.3 L630.00,452.3 L630.50,452.3 L631.00,452.3 L631.50,452.3 L632.00,452.3 L632.50,452.3 L633.00,452.3 L633.50,452.3 L634.00,452.3 L634.50,452.3 L635.00,452.3 L635.50,452.3 L636.00,452.3 L636.50,452.2 L637.00,452.2 L637.50,452.1 L638.00,451.9 L638.50,451.4 L639.00,450.0 L639.50,448.0 L639.60,447.9 L640.00,449.1 L640.50,451.0 L641.00,451.8 L641.50,452.0 L642.00,452.1 L642.50,452.2 L643.00,452.3 L643.50,452.3 L644.00,452.3 L644.50,452.3 L645.00,452.3 L645.50,452.3 L646.00,452.3 L646.50,452.3 L647.00,452.3 L647.50,452.3 L648.00,452.3 L648.50,452.3 L649.00,452.3 L649.50,452.3 L650.00,452.3 L650.50,452.3 L651.00,452.3 L651.50,452.3 L652.00,452.3 L652.50,452.3 L653.00,452.3 L653.50,452.3 L654.00,452.3 L654.50,452.3 L655.00,452.3 L655.50,452.3 L656.00,452.3 L656.50,452.3 L657.00,452.3 L657.50,452.3 L658.00,452.3 L658.50,452.3 L659.00,452.2 L659.50,452.2 L660.00,452.2 L660.50,452.2 L661.00,452.2 L661.50,452.1 L662.00,452.1 L662.50,452.0 L663.00,451.9 L663.50,451.7 L664.00,451.5 L664.50,451.2 L665.00,450.5 L665.50,448.9 L666.00,444.3 L666.50,434.5 L666.82,430.4 L667.00,432.0 L667.50,442.1 L668.00,447.9 L668.50,449.8 L669.00,450.4 L669.50,450.2 L670.00,448.7 L670.50,444.9 L670.85,443.0 L671.00,443.4 L671.50,447.6 L672.00,450.3 L672.50,451.3 L673.00,451.7 L673.50,451.9 L674.00,452.0 L674.50,452.1 L675.00,452.1 L675.50,452.2 L676.00,452.2 L676.50,452.2 L677.00,452.2 L677.50,452.3 L678.00,452.3 L678.50,452.3 L679.00,452.3 L679.50,452.3 L680.00,452.3 L680.50,452.3 L681.00,452.3 L681.50,452.3 L682.00,452.3 L682.50,452.3 L683.00,452.3 L683.50,452.3 L684.00,452.3 L684.50,452.3 L685.00,452.3 L685.50,452.3 L686.00,452.3 L686.50,452.3 L687.00,452.3 L687.50,452.3 L688.00,452.3 L688.50,452.3 L689.00,452.3 L689.50,452.3 L690.00,452.3 L690.50,452.3 L691.00,452.3 L691.50,452.3 L692.00,452.3 L692.50,452.4 L693.00,452.4 L693.50,452.4 L694.00,452.4 L694.50,452.4 L695.00,452.3 L695.50,452.3 L696.00,452.3 L696.50,452.3 L697.00,452.3 L697.50,452.3 L698.00,452.3 L698.50,452.3 L699.00,452.3 L699.50,452.3 L700.00,452.3 L700.50,452.3 L701.00,452.3 L701.50,452.2 L702.00,452.2 L702.50,452.1 L703.00,452.0 L703.50,451.6 L704.00,450.8 L704.50,449.1 L704.76,448.5 L705.00,448.9 L705.50,450.4 L706.00,451.0 L706.50,450.6 L707.00,448.8 L707.50,445.1 L707.74,444.2 L708.00,445.3 L708.50,449.0 L709.00,450.9 L709.50,451.6 L710.00,451.9 L710.50,452.0 L711.00,452.1 L711.50,452.2 L712.00,452.2 L712.50,452.3 L713.00,452.3 L713.50,452.3 L714.00,452.3 L714.50,452.3 L715.00,452.3 L715.50,452.3 L716.00,452.3 L716.50,452.3 L717.00,452.3 L717.50,452.3 L718.00,452.3 L718.50,452.3 L719.00,452.4 L719.50,452.4 L720.00,452.4 L720.50,452.4 L721.00,452.4 L721.50,452.4 L722.00,452.4 L722.50,452.4 L723.00,452.4 L723.50,452.4 L724.00,452.4 L724.50,452.4 L725.00,452.4 L725.50,452.4 L726.00,452.4 L726.50,452.4 L727.00,452.4 L727.50,452.3 L728.00,452.3 L728.50,452.3 L729.00,452.3 L729.50,452.3 L730.00,452.3 L730.50,452.3 L731.00,452.3 L731.50,452.3 L732.00,452.2 L732.50,452.1 L733.00,451.9 L733.50,451.4 L734.00,450.2 L734.32,449.7 L734.50,449.9 L735.00,451.1 L735.50,451.8 L736.00,452.1 L736.50,452.2 L737.00,452.2 L737.50,452.3 L738.00,452.3 L738.50,452.3 L739.00,452.3 L739.50,452.3 L740.00,452.3 L740.50,452.3 L741.00,452.3 L741.50,452.3 L742.00,452.3 L742.50,452.2 L743.00,452.2 L743.50,452.2 L744.00,452.1 L744.50,452.0 L745.00,451.7 L745.50,451.0 L746.00,449.1 L746.50,446.0 L746.65,445.7 L747.00,447.2 L747.50,450.1 L748.00,451.4 L748.50,451.8 L749.00,452.0 L749.50,452.1 L750.00,452.2 L750.50,452.2 L751.00,452.2 L751.50,452.2 L752.00,452.2 L752.50,452.2 L753.00,452.1 L753.50,451.9 L754.00,451.4 L754.50,450.2 L754.83,449.6 L755.00,449.8 L755.50,451.1 L756.00,451.8 L756.50,452.1 L757.00,452.2 L757.50,452.2 L758.00,452.3 L758.50,452.3 L759.00,452.3 L759.50,452.3 L760.00,452.3 L760.50,452.3 L761.00,452.3 L761.50,452.3 L762.00,452.3 L762.50,452.3 L763.00,452.3 L763.50,452.3 L764.00,452.3 L764.50,452.2 L765.00,452.2 L765.50,452.1 L766.00,452.0 L766.50,451.8 L767.00,451.1 L767.50,449.3 L768.00,446.6 L768.12,446.4 L768.50,447.9 L769.00,450.4 L769.50,451.5 L770.00,451.9 L770.50,452.1 L771.00,452.2 L771.50,452.2 L772.00,452.3 L772.50,452.3 L773.00,452.3 L773.50,452.3 L774.00,452.3 L774.50,452.3 L775.00,452.3 L775.50,452.3 L776.00,452.3 L776.50,452.3 L777.00,452.3 L777.50,452.4 L778.00,452.4 L778.50,452.4 L779.00,452.4 L779.50,452.4 L780.00,452.4 L780.50,452.4 L781.00,452.4 L781.50,452.4 L782.00,452.4 L782.50,452.4 L783.00,452.4 L783.50,452.4 L784.00,452.4 L784.50,452.4 L785.00,452.4 L785.50,452.4 L786.00,452.4 L786.50,452.3 L787.00,452.3 L787.50,452.3 L788.00,452.3 L788.50,452.3 L789.00,452.3" fill="none" stroke="#b00000" stroke-width="1" shape-rendering="crispEdges"/><path d="M121.5 458V362.0M223.5 458V314.9M251.5 458V393.3M292.5 458V456.7M310.5 458V312.5M340.5 458V454.9M408.5 458V389.6M461.5 458V321.0M484.5 458V453.1M501.5 458V454.9M557.5 458V407.0M574.5 458V374.6M598.5 458V456.7M639.5 458V455.8M667.5 458V434.0M670.5 458V447.7M704.5 458V453.1M707.5 458V454.9M734.5 458V454.9M746.5 458V451.3M767.5 458V454.9M769.5 458V452.2" stroke="#00d890" stroke-width="1"/><path d="M94.5 458V447.7M162.5 458V278.5M184.5 458V454.0M232.5 458V438.7M268.5 458V431.5M308.5 458V433.3M350.5 458V451.3M354.5 458V431.5M365.5 458V429.7M451.5 458V453.1M460.5 458V447.7M494.5 458V451.3M498.5 458V455.8M502.5 458V454.9M520.5 458V457.1M537.5 458V454.9M547.5 458V454.9M585.5 458V457.1M596.5 458V456.7M624.5 458V456.7M633.5 458V457.1M660.5 458V457.1M669.5 458V456.7M707.5 458V453.1M740.5 458V456.7M751.5 458V456.7" stroke="#ff0000" stroke-width="1"/><path d="M71.5 458V421.6M133.5 458V278.5M238.5 458V444.1M269.5 458V445.0M278.5 458V451.3M301.5 458V448.6M336.5 458V451.3M382.5 458V435.1M433.5 458V451.3M437.5 458V454.9M487.5 458V442.3M530.5 458V454.9M569.5 458V447.7M574.5 458V445.9M630.5 458V454.9M653.5 458V454.9M699.5 458V454.9M712.5 458V454.9M716.5 458V454.9M741.5 458V456.3" stroke="#00a8ff" stroke-width="1"/><path d="M50.50,493.3 L51.00,493.3 L51.50,493.3 L52.00,493.3 L52.50,493.3 L53.00,493.3 L53.50,493.3 L54.00,493.3 L54.50,493.3 L55.00,493.3 L55.50,493.3 L56.00,493.3 L56.50,493.3 L57.00,493.3 L57.50,493.3 L58.00,493.3 L58.50,493.3 L59.00,493.3 L59.50,493.3 L60.00,493.3 L60.50,493.3 L61.00,493.3 L61.50,493.3 L62.00,493.3 L62.50,493.3 L63.00,493.3 L63.50,493.3 L64.00,493.3 L64.50,493.3 L65.00,493.3 L65.50,493.3 L66.00,493.3 L66.50,493.3 L67.00,493.3 L67.50,493.3 L68.00,493.3 L68.50,493.3 L69.00,493.2 L69.50,493.1 L70.00,492.8 L70.50,492.0 L71.00,490.8 L71.43,490.3 L71.50,490.3 L72.00,491.1 L72.50,492.3 L73.00,492.9 L73.50,493.2 L74.00,493.2 L74.50,493.3 L75.00,493.3 L75.50,493.3 L76.00,493.3 L76.50,493.3 L77.00,493.3 L77.50,493.3 L78.00,493.3 L78.50,493.3 L79.00,493.3 L79.50,493.3 L80.00,493.3 L80.50,493.3 L81.00,493.3 L81.50,493.3 L82.00,493.3 L82.50,493.3 L83.00,493.3 L83.50,493.3 L84.00,493.3 L84.50,493.3 L85.00,493.3 L85.50,493.3 L86.00,493.3 L86.50,493.3 L87.00,493.3 L87.50,493.3 L88.00,493.3 L88.50,493.3 L89.00,493.3 L89.50,493.3 L90.00,493.3 L90.50,493.3 L91.00,493.3 L91.50,493.3 L92.00,493.3 L92.50,493.3 L93.00,493.3 L93.50,493.3 L94.00,493.3 L94.50,493.3 L95.00,493.3 L95.50,493.3 L96.00,493.3 L96.50,493.3 L97.00,493.3 L97.50,493.3 L98.00,493.3 L98.50,493.3 L99.00,493.3 L99.50,493.3 L100.00,493.3 L100.50,493.3 L101.00,493.3 L101.50,493.3 L102.00,493.3 L102.50,493.3 L103.00,493.3 L103.50,493.3 L104.00,493.3 L104.50,493.3 L105.00,493.3 L105.50,493.3 L106.00,493.3 L106.50,493.3 L107.00,493.3 L107.50,493.3 L108.00,493.3 L108.50,493.3 L109.00,493.3 L109.50,493.3 L110.00,493.3 L110.50,493.3 L111.00,493.3 L111.50,493.3 L112.00,493.3 L112.50,493.3 L113.00,493.3 L113.50,493.3 L114.00,493.3 L114.50,493.3 L115.00,493.3 L115.50,493.3 L116.00,493.3 L116.50,493.3 L117.00,493.3 L117.50,493.3 L118.00,493.3 L118.50,493.3 L119.00,493.3 L119.50,493.3 L120.00,493.4 L120.50,493.7 L121.00,494.3 L121.50,495.1 L121.82,495.3 L122.00,495.2 L122.50,494.5 L123.00,493.8 L123.50,493.4 L124.00,493.3 L124.50,493.3 L125.00,493.3 L125.50,493.2 L126.00,493.2 L126.50,493.2 L127.00,493.2 L127.50,493.2 L128.00,493.1 L128.50,493.1 L129.00,493.0 L129.50,492.9 L130.00,492.8 L130.50,492.4 L131.00,491.2 L131.50,487.2 L132.00,478.9 L132.50,469.3 L132.66,467.3 L133.00,466.4 L133.30,469.2 L133.50,472.7 L134.00,482.3 L134.50,488.9 L135.00,491.7 L135.50,492.6 L136.00,492.9 L136.50,493.0 L137.00,493.0 L137.50,493.1 L138.00,493.1 L138.50,493.2 L139.00,493.2 L139.50,493.2 L140.00,493.2 L140.50,493.2 L141.00,493.2 L141.50,493.2 L142.00,493.2 L142.50,493.3 L143.00,493.3 L143.50,493.3 L144.00,493.3 L144.50,493.3 L145.00,493.3 L145.50,493.3 L146.00,493.3 L146.50,493.3 L147.00,493.3 L147.50,493.3 L148.00,493.3 L148.50,493.3 L149.00,493.3 L149.50,493.3 L150.00,493.3 L150.50,493.3 L151.00,493.3 L151.50,493.3 L152.00,493.3 L152.50,493.3 L153.00,493.3 L153.50,493.3 L154.00,493.3 L154.50,493.3 L155.00,493.3 L155.50,493.3 L156.00,493.3 L156.50,493.3 L157.00,493.3 L157.50,493.3 L158.00,493.3 L158.50,493.3 L159.00,493.3 L159.50,493.3 L160.00,493.3 L160.50,493.4 L161.00,493.5 L161.50,493.7 L162.00,494.1 L162.42,494.3 L162.50,494.3 L163.00,494.0 L163.50,493.6 L164.00,493.4 L164.50,493.3 L165.00,493.3 L165.50,493.3 L166.00,493.3 L166.50,493.3 L167.00,493.3 L167.50,493.3 L168.00,493.3 L168.50,493.3 L169.00,493.3 L169.50,493.3 L170.00,493.3 L170.50,493.3 L171.00,493.3 L171.50,493.3 L172.00,493.3 L172.50,493.3 L173.00,493.3 L173.50,493.3 L174.00,493.3 L174.50,493.3 L175.00,493.3 L175.50,493.3 L176.00,493.3 L176.50,493.3 L177.00,493.3 L177.50,493.3 L178.00,493.3 L178.50,493.3 L179.00,493.3 L179.50,493.3 L180.00,493.3 L180.50,493.3 L181.00,493.3 L181.50,493.3 L182.00,493.3 L182.50,493.3 L183.00,493.3 L183.50,493.3 L184.00,493.3 L184.50,493.3 L185.00,493.3 L185.50,493.3 L186.00,493.3 L186.50,493.3 L187.00,493.3 L187.50,493.3 L188.00,493.3 L188.50,493.3 L189.00,493.3 L189.50,493.3 L190.00,493.3 L190.50,493.3 L191.00,493.3 L191.50,493.3 L192.00,493.3 L192.50,493.3 L193.00,493.3 L193.50,493.3 L194.00,493.3 L194.50,493.3 L195.00,493.3 L195.50,493.3 L196.00,493.3 L196.50,493.3 L197.00,493.3 L197.50,493.3 L198.00,493.3 L198.50,493.3 L199.00,493.3 L199.50,493.3 L200.00,493.3 L200.50,493.3 L201.00,493.3 L201.50,493.3 L202.00,493.3 L202.50,493.3 L203.00,493.3 L203.50,493.3 L204.00,493.3 L204.50,493.3 L205.00,493.3 L205.50,493.3 L206.00,493.3 L206.50,493.3 L207.00,493.3 L207.50,493.3 L208.00,493.3 L208.50,493.3 L209.00,493.3 L209.50,493.3 L210.00,493.3 L210.50,493.3 L211.00,493.3 L211.50,493.3 L212.00,493.3 L212.50,493.3 L213.00,493.3 L213.50,493.3 L214.00,493.3 L214.50,493.3 L215.00,493.3 L215.50,493.3 L216.00,493.3 L216.50,493.3 L217.00,493.3 L217.50,493.3 L218.00,493.3 L218.50,493.3 L219.00,493.3 L219.50,493.3 L220.00,493.3 L220.50,493.2 L221.00,493.2 L221.50,493.1 L222.00,492.8 L222.50,491.9 L223.00,490.5 L223.50,489.6 L223.54,489.5 L224.00,490.3 L224.50,491.7 L225.00,492.7 L225.50,493.1 L226.00,493.2 L226.50,493.2 L227.00,493.3 L227.50,493.3 L228.00,493.3 L228.50,493.3 L229.00,493.3 L229.50,493.3 L230.00,493.3 L230.50,493.3 L231.00,493.3 L231.50,493.3 L232.00,493.3 L232.50,493.3 L233.00,493.3 L233.50,493.3 L234.00,493.3 L234.50,493.3 L235.00,493.3 L235.50,493.2 L236.00,493.2 L236.50,493.0 L237.00,492.5 L237.50,491.6 L238.00,490.8 L238.11,490.8 L238.50,491.2 L239.00,492.1 L239.50,492.9 L240.00,493.2 L240.50,493.2 L241.00,493.3 L241.50,493.3 L242.00,493.3 L242.50,493.3 L243.00,493.3 L243.50,493.3 L244.00,493.3 L244.50,493.3 L245.00,493.3 L245.50,493.3 L246.00,493.3 L246.50,493.3 L247.00,493.3 L247.50,493.3 L248.00,493.3 L248.50,493.4 L249.00,493.4 L249.50,493.5 L250.00,493.9 L250.50,494.9 L251.00,496.4 L251.50,497.3 L251.50,497.3 L252.00,496.4 L252.50,494.9 L253.00,493.9 L253.50,493.5 L254.00,493.4 L254.50,493.4 L255.00,493.3 L255.50,493.3 L256.00,493.3 L256.50,493.3 L257.00,493.3 L257.50,493.3 L258.00,493.3 L258.50,493.3 L259.00,493.3 L259.50,493.3 L260.00,493.3 L260.50,493.3 L261.00,493.3 L261.50,493.3 L262.00,493.3 L262.50,493.3 L263.00,493.3 L263.50,493.3 L264.00,493.3 L264.50,493.3 L265.00,493.3 L265.50,493.3 L266.00,493.3 L266.50,493.3 L267.00,493.2 L267.50,493.1 L268.00,492.9 L268.50,492.6 L268.72,492.6 L269.00,492.6 L269.50,492.9 L270.00,493.1 L270.50,493.2 L271.00,493.3 L271.50,493.3 L272.00,493.3 L272.50,493.3 L273.00,493.3 L273.50,493.3 L274.00,493.3 L274.50,493.3 L275.00,493.3 L275.50,493.3 L276.00,493.3 L276.50,493.3 L277.00,493.3 L277.50,493.3 L278.00,493.3 L278.50,493.3 L279.00,493.3 L279.50,493.3 L280.00,493.3 L280.50,493.3 L281.00,493.3 L281.50,493.3 L282.00,493.3 L282.50,493.3 L283.00,493.3 L283.50,493.3 L284.00,493.3 L284.50,493.3 L285.00,493.3 L285.50,493.3 L286.00,493.3 L286.50,493.3 L287.00,493.3 L287.50,493.3 L288.00,493.3 L288.50,493.3 L289.00,493.3 L289.50,493.3 L290.00,493.3 L290.50,493.3 L291.00,493.3 L291.50,493.3 L292.00,493.3 L292.50,493.3 L293.00,493.3 L293.50,493.3 L294.00,493.3 L294.50,493.3 L295.00,493.3 L295.50,493.3 L296.00,493.3 L296.50,493.3 L297.00,493.3 L297.50,493.3 L298.00,493.3 L298.50,493.3 L299.00,493.2 L299.50,493.1 L300.00,492.9 L300.50,492.5 L300.93,492.3 L301.00,492.3 L301.50,492.6 L302.00,493.0 L302.50,493.2 L303.00,493.3 L303.50,493.3 L304.00,493.3 L304.50,493.3 L305.00,493.3 L305.50,493.3 L306.00,493.3 L306.50,493.3 L307.00,493.3 L307.50,493.3 L308.00,493.4 L308.50,493.4 L309.00,493.7 L309.50,494.3 L310.00,495.7 L310.50,497.1 L310.71,497.3 L311.00,497.0 L311.50,495.5 L312.00,494.2 L312.50,493.6 L313.00,493.4 L313.50,493.4 L314.00,493.3 L314.50,493.3 L315.00,493.3 L315.50,493.3 L316.00,493.3 L316.50,493.3 L317.00,493.3 L317.50,493.3 L318.00,493.3 L318.50,493.3 L319.00,493.3 L319.50,493.3 L320.00,493.3 L320.50,493.3 L321.00,493.3 L321.50,493.3 L322.00,493.3 L322.50,493.3 L323.00,493.3 L323.50,493.3 L324.00,493.3 L324.50,493.3 L325.00,493.3 L325.50,493.3 L326.00,493.3 L326.50,493.3 L327.00,493.3 L327.50,493.3 L328.00,493.3 L328.50,493.3 L329.00,493.3 L329.50,493.3 L330.00,493.3 L330.50,493.3 L331.00,493.3 L331.50,493.3 L332.00,493.3 L332.50,493.3 L333.00,493.3 L333.50,493.3 L334.00,493.3 L334.50,493.3 L335.00,493.3 L335.50,493.3 L336.00,493.3 L336.50,493.3 L337.00,493.3 L337.50,493.3 L338.00,493.3 L338.50,493.3 L339.00,493.3 L339.50,493.3 L340.00,493.3 L340.50,493.3 L341.00,493.3 L341.50,493.3 L342.00,493.3 L342.50,493.3 L343.00,493.3 L343.50,493.3 L344.00,493.3 L344.50,493.3 L345.00,493.3 L345.50,493.3 L346.00,493.3 L346.50,493.3 L347.00,493.3 L347.50,493.3 L348.00,493.3 L348.50,493.3 L349.00,493.3 L349.50,493.3 L350.00,493.3 L350.50,493.3 L351.00,493.3 L351.50,493.3 L352.00,493.3 L352.50,493.3 L353.00,493.3 L353.50,493.3 L354.00,493.3 L354.50,493.3 L355.00,493.3 L355.50,493.3 L356.00,493.3 L356.50,493.3 L357.00,493.3 L357.50,493.3 L358.00,493.3 L358.50,493.3 L359.00,493.3 L359.50,493.3 L360.00,493.3 L360.50,493.3 L361.00,493.3 L361.50,493.3 L362.00,493.3 L362.50,493.3 L363.00,493.3 L363.50,493.3 L364.00,493.3 L364.50,493.3 L365.00,493.3 L365.50,493.3 L366.00,493.3 L366.50,493.3 L367.00,493.3 L367.50,493.3 L368.00,493.3 L368.50,493.3 L369.00,493.3 L369.50,493.3 L370.00,493.3 L370.50,493.3 L371.00,493.3 L371.50,493.3 L372.00,493.3 L372.50,493.3 L373.00,493.3 L373.50,493.3 L374.00,493.3 L374.50,493.3 L375.00,493.3 L375.50,493.3 L376.00,493.3 L376.50,493.3 L377.00,493.3 L377.50,493.3 L378.00,493.3 L378.50,493.3 L379.00,493.3 L379.50,493.2 L380.00,493.2 L380.50,493.1 L381.00,492.8 L381.50,491.8 L382.00,490.5 L382.46,489.8 L382.50,489.8 L383.00,490.7 L383.50,492.0 L384.00,492.8 L384.50,493.1 L385.00,493.2 L385.50,493.2 L386.00,493.3 L386.50,493.3 L387.00,493.3 L387.50,493.3 L388.00,493.3 L388.50,493.3 L389.00,493.3 L389.50,493.3 L390.00,493.3 L390.50,493.3 L391.00,493.3 L391.50,493.3 L392.00,493.3 L392.50,493.3 L393.00,493.3 L393.50,493.3 L394.00,493.3 L394.50,493.3 L395.00,493.3 L395.50,493.3 L396.00,493.3 L396.50,493.3 L397.00,493.3 L397.50,493.3 L398.00,493.3 L398.50,493.3 L399.00,493.3 L399.50,493.3 L400.00,493.3 L400.50,493.3 L401.00,493.3 L401.50,493.3 L402.00,493.3 L402.50,493.3 L403.00,493.3 L403.50,493.3 L404.00,493.3 L404.50,493.3 L405.00,493.3 L405.50,493.3 L406.00,493.3 L406.50,493.4 L407.00,493.5 L407.50,493.9 L408.00,494.5 L408.50,494.8 L408.51,494.8 L409.00,494.5 L409.50,493.9 L410.00,493.5 L410.50,493.4 L411.00,493.3 L411.50,493.3 L412.00,493.3 L412.50,493.3 L413.00,493.3 L413.50,493.3 L414.00,493.3 L414.50,493.3 L415.00,493.3 L415.50,493.3 L416.00,493.3 L416.50,493.3 L417.00,493.3 L417.50,493.3 L418.00,493.3 L418.50,493.3 L419.00,493.3 L419.50,493.3 L420.00,493.3 L420.50,493.3 L421.00,493.3 L421.50,493.3 L422.00,493.3 L422.50,493.3 L423.00,493.3 L423.50,493.3 L424.00,493.3 L424.50,493.3 L425.00,493.3 L425.50,493.3 L426.00,493.3 L426.50,493.3 L427.00,493.3 L427.50,493.3 L428.00,493.3 L428.50,493.3 L429.00,493.3 L429.50,493.3 L430.00,493.3 L430.50,493.3 L431.00,493.3 L431.50,493.3 L432.00,493.3 L432.50,493.3 L433.00,493.3 L433.50,493.3 L434.00,493.3 L434.50,493.3 L435.00,493.3 L435.50,493.3 L436.00,493.3 L436.50,493.3 L437.00,493.3 L437.50,493.3 L438.00,493.3 L438.50,493.3 L439.00,493.3 L439.50,493.3 L440.00,493.3 L440.50,493.3 L441.00,493.3 L441.50,493.3 L442.00,493.3 L442.50,493.3 L443.00,493.3 L443.50,493.3 L444.00,493.3 L444.50,493.3 L445.00,493.3 L445.50,493.3 L446.00,493.3 L446.50,493.3 L447.00,493.3 L447.50,493.3 L448.00,493.3 L448.50,493.3 L449.00,493.3 L449.50,493.3 L450.00,493.3 L450.50,493.3 L451.00,493.3 L451.50,493.3 L452.00,493.3 L452.50,493.3 L453.00,493.3 L453.50,493.3 L454.00,493.3 L454.50,493.3 L455.00,493.3 L455.50,493.3 L456.00,493.3 L456.50,493.3 L457.00,493.3 L457.50,493.3 L458.00,493.2 L458.50,493.2 L459.00,493.1 L459.50,492.6 L460.00,491.5 L460.50,489.9 L460.91,489.3 L461.00,489.3 L461.50,490.5 L462.00,492.0 L462.50,492.8 L463.00,493.1 L463.50,493.2 L464.00,493.2 L464.50,493.3 L465.00,493.3 L465.50,493.3 L466.00,493.3 L466.50,493.3 L467.00,493.3 L467.50,493.3 L468.00,493.3 L468.50,493.3 L469.00,493.3 L469.50,493.3 L470.00,493.3 L470.50,493.3 L471.00,493.3 L471.50,493.3 L472.00,493.3 L472.50,493.3 L473.00,493.3 L473.50,493.3 L474.00,493.3 L474.50,493.3 L475.00,493.3 L475.50,493.3 L476.00,493.3 L476.50,493.3 L477.00,493.3 L477.50,493.3 L478.00,493.3 L478.50,493.3 L479.00,493.3 L479.50,493.3 L480.00,493.3 L480.50,493.3 L481.00,493.3 L481.50,493.3 L482.00,493.3 L482.50,493.3 L483.00,493.3 L483.50,493.3 L484.00,493.3 L484.50,493.3 L485.00,493.2 L485.50,493.1 L486.00,492.6 L486.50,491.8 L487.00,491.3 L487.06,491.3 L487.50,491.6 L488.00,492.4 L488.50,493.0 L489.00,493.2 L489.50,493.2 L490.00,493.3 L490.50,493.3 L491.00,493.3 L491.50,493.3 L492.00,493.3 L492.50,493.3 L493.00,493.3 L493.50,493.3 L494.00,493.3 L494.50,493.3 L495.00,493.3 L495.50,493.3 L496.00,493.3 L496.50,493.3 L497.00,493.3 L497.50,493.3 L498.00,493.3 L498.50,493.2 L499.00,493.2 L499.50,493.1 L500.00,492.7 L500.50,491.7 L501.00,490.6 L501.31,490.3 L501.50,490.4 L502.00,491.4 L502.50,492.5 L503.00,493.0 L503.50,493.2 L504.00,493.2 L504.50,493.3 L505.00,493.3 L505.50,493.3 L506.00,493.3 L506.50,493.3 L507.00,493.3 L507.50,493.3 L508.00,493.3 L508.50,493.3 L509.00,493.3 L509.50,493.3 L510.00,493.3 L510.50,493.3 L511.00,493.3 L511.50,493.3 L512.00,493.3 L512.50,493.3 L513.00,493.3 L513.50,493.3 L514.00,493.3 L514.50,493.3 L515.00,493.3 L515.50,493.3 L516.00,493.3 L516.50,493.3 L517.00,493.3 L517.50,493.3 L518.00,493.3 L518.50,493.3 L519.00,493.3 L519.50,493.3 L520.00,493.3 L520.50,493.3 L521.00,493.3 L521.50,493.3 L522.00,493.3 L522.50,493.3 L523.00,493.3 L523.50,493.3 L524.00,493.3 L524.50,493.3 L525.00,493.3 L525.50,493.3 L526.00,493.3 L526.50,493.3 L527.00,493.3 L527.50,493.3 L528.00,493.3 L528.50,493.3 L529.00,493.3 L529.50,493.3 L530.00,493.3 L530.50,493.3 L531.00,493.3 L531.50,493.3 L532.00,493.3 L532.50,493.3 L533.00,493.3 L533.50,493.3 L534.00,493.3 L534.50,493.3 L535.00,493.3 L535.50,493.3 L536.00,493.3 L536.50,493.3 L537.00,493.3 L537.50,493.3 L538.00,493.3 L538.50,493.3 L539.00,493.3 L539.50,493.3 L540.00,493.3 L540.50,493.3 L541.00,493.3 L541.50,493.3 L542.00,493.3 L542.50,493.3 L543.00,493.3 L543.50,493.3 L544.00,493.3 L544.50,493.3 L545.00,493.3 L545.50,493.3 L546.00,493.3 L546.50,493.3 L547.00,493.3 L547.50,493.3 L548.00,493.3 L548.50,493.3 L549.00,493.3 L549.50,493.3 L550.00,493.3 L550.50,493.3 L551.00,493.3 L551.50,493.3 L552.00,493.3 L552.50,493.3 L553.00,493.3 L553.50,493.3 L554.00,493.3 L554.50,493.3 L555.00,493.3 L555.50,493.4 L556.00,493.6 L556.50,494.1 L557.00,494.6 L557.33,494.8 L557.50,494.8 L558.00,494.3 L558.50,493.7 L559.00,493.4 L559.50,493.4 L560.00,493.3 L560.50,493.3 L561.00,493.3 L561.50,493.3 L562.00,493.3 L562.50,493.3 L563.00,493.3 L563.50,493.3 L564.00,493.3 L564.50,493.3 L565.00,493.3 L565.50,493.3 L566.00,493.3 L566.50,493.3 L567.00,493.3 L567.50,493.2 L568.00,493.1 L568.50,492.8 L569.00,492.4 L569.34,492.3 L569.50,492.3 L570.00,492.7 L570.50,493.0 L571.00,493.2 L571.50,493.3 L572.00,493.3 L572.50,493.4 L573.00,493.4 L573.50,493.5 L574.00,494.0 L574.50,495.2 L575.00,496.7 L575.40,497.3 L575.50,497.3 L576.00,496.1 L576.50,494.6 L577.00,493.7 L577.50,493.5 L578.00,493.4 L578.50,493.4 L579.00,493.3 L579.50,493.3 L580.00,493.3 L580.50,493.3 L581.00,493.3 L581.50,493.3 L582.00,493.3 L582.50,493.3 L583.00,493.3 L583.50,493.3 L584.00,493.3 L584.50,493.3 L585.00,493.3 L585.50,493.3 L586.00,493.3 L586.50,493.3 L587.00,493.3 L587.50,493.3 L588.00,493.3 L588.50,493.3 L589.00,493.3 L589.50,493.3 L590.00,493.3 L590.50,493.3 L591.00,493.3 L591.50,493.3 L592.00,493.3 L592.50,493.3 L593.00,493.3 L593.50,493.3 L594.00,493.3 L594.50,493.3 L595.00,493.3 L595.50,493.3 L596.00,493.3 L596.50,493.3 L597.00,493.3 L597.50,493.3 L598.00,493.3 L598.50,493.3 L599.00,493.3 L599.50,493.3 L600.00,493.3 L600.50,493.3 L601.00,493.3 L601.50,493.3 L602.00,493.3 L602.50,493.3 L603.00,493.3 L603.50,493.3 L604.00,493.3 L604.50,493.3 L605.00,493.3 L605.50,493.3 L606.00,493.3 L606.50,493.3 L607.00,493.3 L607.50,493.3 L608.00,493.3 L608.50,493.3 L609.00,493.3 L609.50,493.3 L610.00,493.3 L610.50,493.3 L611.00,493.3 L611.50,493.3 L612.00,493.3 L612.50,493.3 L613.00,493.3 L613.50,493.3 L614.00,493.3 L614.50,493.3 L615.00,493.3 L615.50,493.3 L616.00,493.3 L616.50,493.3 L617.00,493.3 L617.50,493.3 L618.00,493.3 L618.50,493.3 L619.00,493.3 L619.50,493.3 L620.00,493.3 L620.50,493.3 L621.00,493.3 L621.50,493.3 L622.00,493.3 L622.50,493.3 L623.00,493.3 L623.50,493.3 L624.00,493.3 L624.50,493.3 L625.00,493.3 L625.50,493.3 L626.00,493.3 L626.50,493.3 L627.00,493.3 L627.50,493.3 L628.00,493.3 L628.50,493.3 L629.00,493.3 L629.50,493.3 L630.00,493.3 L630.50,493.3 L631.00,493.3 L631.50,493.3 L632.00,493.3 L632.50,493.3 L633.00,493.3 L633.50,493.3 L634.00,493.3 L634.50,493.3 L635.00,493.3 L635.50,493.3 L636.00,493.3 L636.50,493.3 L637.00,493.3 L637.50,493.3 L638.00,493.3 L638.50,493.3 L639.00,493.3 L639.50,493.3 L640.00,493.3 L640.50,493.3 L641.00,493.3 L641.50,493.3 L642.00,493.3 L642.50,493.3 L643.00,493.3 L643.50,493.3 L644.00,493.3 L644.50,493.3 L645.00,493.3 L645.50,493.3 L646.00,493.3 L646.50,493.3 L647.00,493.3 L647.50,493.3 L648.00,493.3 L648.50,493.3 L649.00,493.3 L649.50,493.3 L650.00,493.3 L650.50,493.3 L651.00,493.3 L651.50,493.3 L652.00,493.3 L652.50,493.3 L653.00,493.3 L653.50,493.3 L654.00,493.3 L654.50,493.3 L655.00,493.3 L655.50,493.3 L656.00,493.3 L656.50,493.3 L657.00,493.3 L657.50,493.3 L658.00,493.3 L658.50,493.3 L659.00,493.3 L659.50,493.3 L660.00,493.3 L660.50,493.3 L661.00,493.3 L661.50,493.3 L662.00,493.3 L662.50,493.3 L663.00,493.2 L663.50,493.2 L664.00,493.2 L664.50,493.0 L665.00,492.3 L665.50,490.8 L666.00,489.2 L666.28,488.8 L666.50,489.0 L667.00,490.6 L667.50,492.1 L668.00,492.9 L668.50,493.1 L669.00,493.2 L669.50,493.1 L670.00,492.9 L670.50,492.5 L671.00,492.3 L671.07,492.3 L671.50,492.4 L672.00,492.8 L672.50,493.1 L673.00,493.2 L673.50,493.3 L674.00,493.3 L674.50,493.3 L675.00,493.3 L675.50,493.3 L676.00,493.3 L676.50,493.3 L677.00,493.3 L677.50,493.3 L678.00,493.3 L678.50,493.3 L679.00,493.3 L679.50,493.3 L680.00,493.3 L680.50,493.3 L681.00,493.3 L681.50,493.3 L682.00,493.3 L682.50,493.3 L683.00,493.3 L683.50,493.3 L684.00,493.3 L684.50,493.3 L685.00,493.3 L685.50,493.3 L686.00,493.3 L686.50,493.3 L687.00,493.3 L687.50,493.3 L688.00,493.3 L688.50,493.3 L689.00,493.3 L689.50,493.3 L690.00,493.3 L690.50,493.3 L691.00,493.3 L691.50,493.3 L692.00,493.3 L692.50,493.3 L693.00,493.3 L693.50,493.3 L694.00,493.3 L694.50,493.3 L695.00,493.3 L695.50,493.3 L696.00,493.3 L696.50,493.3 L697.00,493.3 L697.50,493.3 L698.00,493.3 L698.50,493.3 L699.00,493.3 L699.50,493.3 L700.00,493.3 L700.50,493.3 L701.00,493.3 L701.50,493.3 L702.00,493.3 L702.50,493.3 L703.00,493.3 L703.50,493.3 L704.00,493.3 L704.50,493.3 L705.00,493.3 L705.50,493.3 L706.00,493.3 L706.50,493.3 L707.00,493.3 L707.50,493.3 L708.00,493.3 L708.50,493.3 L709.00,493.3 L709.50,493.3 L710.00,493.3 L710.50,493.3 L711.00,493.3 L711.50,493.3 L712.00,493.3 L712.50,493.3 L713.00,493.3 L713.50,493.3 L714.00,493.3 L714.50,493.3 L715.00,493.3 L715.50,493.3 L716.00,493.3 L716.50,493.3 L717.00,493.3 L717.50,493.3 L718.00,493.3 L718.50,493.3 L719.00,493.3 L719.50,493.3 L720.00,493.3 L720.50,493.3 L721.00,493.3 L721.50,493.3 L722.00,493.3 L722.50,493.3 L723.00,493.3 L723.50,493.3 L724.00,493.3 L724.50,493.3 L725.00,493.3 L725.50,493.3 L726.00,493.3 L726.50,493.3 L727.00,493.3 L727.50,493.3 L728.00,493.3 L728.50,493.3 L729.00,493.3 L729.50,493.3 L730.00,493.3 L730.50,493.3 L731.00,493.3 L731.50,493.3 L732.00,493.3 L732.50,493.3 L733.00,493.3 L733.50,493.3 L734.00,493.3 L734.50,493.3 L735.00,493.3 L735.50,493.3 L736.00,493.3 L736.50,493.3 L737.00,493.3 L737.50,493.3 L738.00,493.3 L738.50,493.3 L739.00,493.3 L739.50,493.3 L740.00,493.3 L740.50,493.3 L741.00,493.3 L741.50,493.3 L742.00,493.3 L742.50,493.3 L743.00,493.3 L743.50,493.3 L744.00,493.3 L744.50,493.3 L745.00,493.3 L745.50,493.3 L746.00,493.3 L746.50,493.3 L747.00,493.3 L747.50,493.3 L748.00,493.3 L748.50,493.3 L749.00,493.3 L749.50,493.3 L750.00,493.3 L750.50,493.3 L751.00,493.3 L751.50,493.3 L752.00,493.3 L752.50,493.3 L753.00,493.3 L753.50,493.3 L754.00,493.3 L754.50,493.3 L755.00,493.3 L755.50,493.3 L756.00,493.3 L756.50,493.3 L757.00,493.3 L757.50,493.3 L758.00,493.3 L758.50,493.3 L759.00,493.3 L759.50,493.3 L760.00,493.3 L760.50,493.3 L761.00,493.3 L761.50,493.3 L762.00,493.3 L762.50,493.3 L763.00,493.3 L763.50,493.3 L764.00,493.3 L764.50,493.3 L765.00,493.3 L765.50,493.3 L766.00,493.3 L766.50,493.3 L767.00,493.3 L767.50,493.3 L768.00,493.3 L768.50,493.3 L769.00,493.3 L769.50,493.3 L770.00,493.3 L770.50,493.3 L771.00,493.3 L771.50,493.3 L772.00,493.3 L772.50,493.3 L773.00,493.3 L773.50,493.3 L774.00,493.3 L774.50,493.3 L775.00,493.3 L775.50,493.3 L776.00,493.3 L776.50,493.3 L777.00,493.3 L777.50,493.3 L778.00,493.3 L778.50,493.3 L779.00,493.3 L779.50,493.3 L780.00,493.3 L780.50,493.3 L781.00,493.3 L781.50,493.3 L782.00,493.3 L782.50,493.3 L783.00,493.3 L783.50,493.3 L784.00,493.3 L784.50,493.3 L785.00,493.3 L785.50,493.3 L786.00,493.3 L786.50,493.3 L787.00,493.3 L787.50,493.3 L788.00,493.3 L788.50,493.3 L789.00,493.3" fill="none" stroke="#00a000" stroke-width="1" shape-rendering="crispEdges"/><path d="M50.5 98.5H789.5V528.5H50.5ZM45 278.5H789 M45 458.5H789M45 261.5H50M45 243.5H50M45 225.5H50M45 207.5H50M45 189.5H50M45 171.5H50M45 153.5H50M45 135.5H50M45 117.5H50M45 99.5H50M45 423.5H50M45 387.5H50M45 351.5H50M45 315.5H50M62.5 528V534M115.5 528V534M168.5 528V534M221.5 528V534M275.5 528V534M328.5 528V534M381.5 528V534M434.5 528V534M487.5 528V534M540.5 528V534M594.5 528V534M647.5 528V534M700.5 528V534M753.5 528V534" fill="none" stroke="#000" stroke-width="1"/><path d="M45 468.5H50 M45 518.5H50" stroke="#00a000"/><rect x="768" y="462" width="21" height="12" fill="#ff7f5a"/></svg>
<div class="t" style="left:3px;top:81.5px;font-size:11px;color:#000;">I (rel.)</div>
<div class="t" style="left:0;width:42px;text-align:right;top:274.0px;font-size:10px">0</div>
<div class="t" style="left:0;width:42px;text-align:right;top:256.1px;font-size:10px">100</div>
<div class="t" style="left:0;width:42px;text-align:right;top:238.1px;font-size:10px">200</div>
<div class="t" style="left:0;width:42px;text-align:right;top:220.2px;font-size:10px">300</div>
<div class="t" style="left:0;width:42px;text-align:right;top:202.2px;font-size:10px">400</div>
<div class="t" style="left:0;width:42px;text-align:right;top:184.2px;font-size:10px">500</div>
<div class="t" style="left:0;width:42px;text-align:right;top:166.3px;font-size:10px">600</div>
<div class="t" style="left:0;width:42px;text-align:right;top:148.4px;font-size:10px">700</div>
<div class="t" style="left:0;width:42px;text-align:right;top:130.4px;font-size:10px">800</div>
<div class="t" style="left:0;width:42px;text-align:right;top:112.5px;font-size:10px">900</div>
<div class="t" style="left:0;width:42px;text-align:right;top:94.5px;font-size:10px">1000</div>
<div class="t" style="left:0;width:42px;text-align:right;top:418.0px;font-size:10px">200</div>
<div class="t" style="left:0;width:42px;text-align:right;top:382.0px;font-size:10px">400</div>
<div class="t" style="left:0;width:42px;text-align:right;top:346.0px;font-size:10px">600</div>
<div class="t" style="left:0;width:42px;text-align:right;top:310.0px;font-size:10px">800</div>
<div class="t" style="left:0;width:42px;text-align:right;top:454.0px;font-size:10px">0</div>
<div class="t" style="left:0;width:43px;text-align:right;top:463.0px;font-size:11px;color:#00a000">1000</div>
<div class="t" style="left:0;width:43px;text-align:right;top:513.0px;font-size:11px;color:#00a000">-1000</div>
<div class="t" style="left:32.5px;width:60px;text-align:center;top:537px;font-size:10px">20.00</div>
<div class="t" style="left:85.7px;width:60px;text-align:center;top:537px;font-size:10px">25.00</div>
<div class="t" style="left:138.8px;width:60px;text-align:center;top:537px;font-size:10px">30.00</div>
<div class="t" style="left:192.0px;width:60px;text-align:center;top:537px;font-size:10px">35.00</div>
<div class="t" style="left:245.1px;width:60px;text-align:center;top:537px;font-size:10px">40.00</div>
<div class="t" style="left:298.2px;width:60px;text-align:center;top:537px;font-size:10px">45.00</div>
<div class="t" style="left:351.4px;width:60px;text-align:center;top:537px;font-size:10px">50.00</div>
<div class="t" style="left:404.6px;width:60px;text-align:center;top:537px;font-size:10px">55.00</div>
<div class="t" style="left:457.7px;width:60px;text-align:center;top:537px;font-size:10px">60.00</div>
<div class="t" style="left:510.9px;width:60px;text-align:center;top:537px;font-size:10px">65.00</div>
<div class="t" style="left:564.0px;width:60px;text-align:center;top:537px;font-size:10px">70.00</div>
<div class="t" style="left:617.2px;width:60px;text-align:center;top:537px;font-size:10px">75.00</div>
<div class="t" style="left:670.3px;width:60px;text-align:center;top:537px;font-size:10px">80.00</div>
<div class="t" style="left:723.5px;width:60px;text-align:center;top:537px;font-size:10px">85.00</div>
<div class="t" style="left:5px;top:551.8px;font-size:10.5px;color:#000;">Cu-Ka (1.540598 A)</div>
<div class="t" style="left:700px;width:89px;text-align:right;top:551px;font-size:10px;font-weight:bold">2theta</div>
<div class="t" style="left:500px;width:270px;text-align:right;top:103px;font-size:10.5px;color:#ff8000">Experimental pattern: sio2</div>
<div class="t" style="left:558px;top:283px;font-size:10.5px;color:#0000e0">Experimental pattern: CTE cap=0.2mm, hyb</div>
<div class="t" style="left:558px;top:300px;font-size:10.5px;color:#b00000">Calculated pattern (sel. phases) (Rp=42.2 %)</div>
<div class="t" style="left:558px;top:317px;font-size:10.5px;color:#00d890">[96-900-8082] Al2 O3&nbsp; Corundum</div>
<div class="t" style="left:558px;top:334px;font-size:10.5px;color:#ff1010">[96-210-0993] C Ca O3</div>
<div class="t" style="left:558px;top:351px;font-size:10.5px;color:#10a8f0">[96-900-9667] O2 Si Quartz</div>
<div class="t" style="left:558px;top:368px;font-size:10.5px;color:#00a000">Difference (selected phases)</div>
<div class="a" style="left:773px;top:99px;width:16px;height:15px;border:1px solid #c8c8c8;border-radius:2px;background:linear-gradient(#fafafa,#e6e6e6)"></div>
<div class="t" style="left:773px;width:16px;text-align:center;top:101px;font-size:12px">X</div>
<div class="a" style="left:773px;top:115px;width:16px;height:15px;border:1px solid #c8c8c8;border-radius:2px;background:linear-gradient(#fafafa,#e6e6e6)"></div>
<svg class="a" style="left:776px;top:117px" width="10" height="10" viewBox="0 0 10 10"><path d="M5 1V6" stroke="#000" stroke-width="2"/><path d="M1 5H9L5 9Z" fill="#000"/></svg>
<div class="a" style="left:797px;top:78px;width:20px;height:19px;border:1px solid #c0c0c0;border-radius:3px;background:linear-gradient(#f8f8f8,#e4e4e4)"></div>
<div class="t" style="left:797px;width:20px;text-align:center;top:82px;font-size:14px">+</div>
<svg class="a" style="left:0;top:568px" width="817" height="4"><path d="M425 1.5H815" stroke="#c8c8c8" stroke-dasharray="3 2"/></svg>
<div class="a" style="left:0px;top:571px;width:817px;height:163px;border:2px solid #5a9fe6;background:#fff"></div>
<div class="a" style="left:2px;top:573px;width:40px;height:20px;background:linear-gradient(#f9f9f9,#ededed 50%,#e4e4e4);border-bottom:1px solid #9c9c9c"></div>
<div class="a" style="left:41px;top:573px;width:2px;height:19px;background:#8a8a8a"></div>
<div class="t" style="left:2px;width:40px;text-align:center;top:577px;font-size:11.5px">Color</div>
<div class="a" style="left:42px;top:573px;width:40px;height:20px;background:linear-gradient(#f9f9f9,#ededed 50%,#e4e4e4);border-bottom:1px solid #9c9c9c"></div>
<div class="a" style="left:81px;top:573px;width:2px;height:19px;background:#8a8a8a"></div>
<div class="t" style="left:42px;width:40px;text-align:center;top:577px;font-size:11.5px">Qual.</div>
<div class="a" style="left:82px;top:573px;width:80px;height:20px;background:linear-gradient(#f9f9f9,#ededed 50%,#e4e4e4);border-bottom:1px solid #9c9c9c"></div>
<div class="a" style="left:161px;top:573px;width:2px;height:19px;background:#8a8a8a"></div>
<div class="t" style="left:82px;width:80px;text-align:center;top:577px;font-size:11.5px">Entry</div>
<div class="a" style="left:162px;top:573px;width:92px;height:20px;background:linear-gradient(#f9f9f9,#ededed 50%,#e4e4e4);border-bottom:1px solid #9c9c9c"></div>
<div class="a" style="left:253px;top:573px;width:2px;height:19px;background:#8a8a8a"></div>
<div class="t" style="left:162px;width:92px;text-align:center;top:577px;font-size:11.5px">Formula</div>
<div class="a" style="left:254px;top:573px;width:184px;height:20px;background:linear-gradient(#f9f9f9,#ededed 50%,#e4e4e4);border-bottom:1px solid #9c9c9c"></div>
<div class="a" style="left:437px;top:573px;width:2px;height:19px;background:#8a8a8a"></div>
<div class="t" style="left:254px;width:184px;text-align:center;top:577px;font-size:11.5px">Candidate phase</div>
<div class="a" style="left:438px;top:573px;width:80px;height:20px;background:linear-gradient(#f9f9f9,#ededed 50%,#e4e4e4);border-bottom:1px solid #9c9c9c"></div>
<div class="a" style="left:517px;top:573px;width:2px;height:19px;background:#8a8a8a"></div>
<div class="t" style="left:438px;width:80px;text-align:center;top:577px;font-size:11.5px">P(2theta)</div>
<div class="a" style="left:518px;top:573px;width:80px;height:20px;background:linear-gradient(#f9f9f9,#ededed 50%,#e4e4e4);border-bottom:1px solid #9c9c9c"></div>
<div class="a" style="left:597px;top:573px;width:2px;height:19px;background:#8a8a8a"></div>
<div class="t" style="left:518px;width:80px;text-align:center;top:577px;font-size:11.5px">P(I/I0)</div>
<div class="a" style="left:598px;top:573px;width:80px;height:20px;background:linear-gradient(#f9f9f9,#ededed 50%,#e4e4e4);border-bottom:1px solid #9c9c9c"></div>
<div class="a" style="left:677px;top:573px;width:2px;height:19px;background:#8a8a8a"></div>
<div class="t" style="left:598px;width:80px;text-align:center;top:577px;font-size:11.5px">I scale fct.</div>
<div class="a" style="left:678px;top:573px;width:60px;height:20px;background:linear-gradient(#f9f9f9,#ededed 50%,#e4e4e4);border-bottom:1px solid #9c9c9c"></div>
<div class="a" style="left:737px;top:573px;width:2px;height:19px;background:#8a8a8a"></div>
<div class="t" style="left:678px;width:60px;text-align:center;top:577px;font-size:11.5px">I/Ic</div>
<div class="a" style="left:738px;top:573px;width:60px;height:20px;background:linear-gradient(#f9f9f9,#ededed 50%,#e4e4e4);border-bottom:1px solid #9c9c9c"></div>
<div class="t" style="left:748px;top:577px;font-size:11.5px">FoM</div>
<svg class="a" style="left:778px;top:578px" width="13" height="9"><path d="M0.5 0.5H12.5L6.5 8.5Z" fill="none" stroke="#b0b0b0"/></svg>
<div class="a" style="left:798px;top:573px;width:17px;height:159px;background:repeating-linear-gradient(45deg,#efefef 0 1px,#f8f8f8 1px 2px)"></div>
<div class="a" style="left:799px;top:573px;width:16px;height:16px;border:1px solid #a8a8a8;border-radius:2px;background:linear-gradient(#fbfbfb,#e4e4e4)"></div>
<svg class="a" style="left:802px;top:578px" width="10" height="6"><path d="M0 6H10L5 0Z" fill="#000"/></svg>
<div class="a" style="left:799px;top:589px;width:16px;height:26px;border:1px solid #a8a8a8;border-radius:2px;background:linear-gradient(90deg,#fafafa,#e8e8e8)"></div>
<div class="a" style="left:799px;top:700px;width:16px;height:16px;border:1px solid #a8a8a8;border-radius:2px;background:linear-gradient(#fbfbfb,#e4e4e4)"></div>
<svg class="a" style="left:802px;top:705px" width="10" height="6"><path d="M0 6H10L5 0Z" fill="#000"/></svg>
<div class="a" style="left:799px;top:716px;width:16px;height:16px;border:1px solid #a8a8a8;border-radius:2px;background:linear-gradient(#fbfbfb,#e4e4e4)"></div>
<svg class="a" style="left:802px;top:721px" width="10" height="6"><path d="M0 0H10L5 6Z" fill="#000"/></svg>
<div class="a" style="left:2px;top:593px;width:796px;height:139px;overflow:hidden">
<div class="a" style="left:0px;top:0px;width:796px;height:16px;background:#000080"></div>
<div class="a" style="left:0px;top:0px;width:40px;height:16px;background:#00b4ff"></div>
<div class="a" style="left:736px;top:0px;width:60px;height:16px;background:#33cc00"></div>
<div class="a" style="left:516px;top:0px;width:80px;height:16px;border:1px dotted #5050a0"></div>
<div class="t" style="left:40px;width:40px;text-align:center;top:2px;font-size:11px;font-weight:bold;color:#fff">C</div>
<div class="t" style="left:88px;top:2px;font-size:11px;color:#fff">96-900-9667</div>
<div class="t" style="left:162px;top:2px;font-size:11px;color:#fff">O2 Si</div>
<div class="t" style="left:255px;top:2px;font-size:11px;color:#fff">Quartz</div>
<div class="t" style="left:436px;width:80px;text-align:center;top:2px;font-size:11px;color:#fff">0.8462</div>
<div class="t" style="left:516px;width:80px;text-align:center;top:2px;font-size:11px;color:#fff">0.9623</div>
<div class="t" style="left:596px;width:80px;text-align:center;top:2px;font-size:11px;color:#fff">0.9912</div>
<div class="t" style="left:676px;width:60px;text-align:center;top:2px;font-size:11px;color:#fff">4.53</div>
<div class="t" style="left:736px;width:60px;text-align:center;top:2px;font-size:11px;color:#000">0.8934</div>
<div class="a" style="left:0px;top:16px;width:796px;height:16px;background:#f5f5f5"></div>
<div class="a" style="left:736px;top:16px;width:60px;height:16px;background:#33cc00"></div>
<div class="t" style="left:40px;width:40px;text-align:center;top:18px;font-size:11px;font-weight:bold;color:#10a010">C</div>
<div class="t" style="left:88px;top:18px;font-size:11px;color:#000">96-210-0189</div>
<div class="t" style="left:162px;top:18px;font-size:11px;color:#000">O2 Si</div>
<div class="t" style="left:255px;top:18px;font-size:11px;color:#000"></div>
<div class="t" style="left:436px;width:80px;text-align:center;top:18px;font-size:11px;color:#000">0.8510</div>
<div class="t" style="left:516px;width:80px;text-align:center;top:18px;font-size:11px;color:#000">0.9564</div>
<div class="t" style="left:596px;width:80px;text-align:center;top:18px;font-size:11px;color:#000">0.9911</div>
<div class="t" style="left:676px;width:60px;text-align:center;top:18px;font-size:11px;color:#000">4.76</div>
<div class="t" style="left:736px;width:60px;text-align:center;top:18px;font-size:11px;color:#000">0.8923</div>
<div class="a" style="left:0px;top:32px;width:796px;height:16px;background:#ffffff"></div>
<div class="a" style="left:736px;top:32px;width:60px;height:16px;background:#33cc00"></div>
<div class="t" style="left:40px;width:40px;text-align:center;top:34px;font-size:11px;font-weight:bold;color:#10a010">C</div>
<div class="t" style="left:88px;top:34px;font-size:11px;color:#000">96-901-2601</div>
<div class="t" style="left:162px;top:34px;font-size:11px;color:#000">O2 Si</div>
<div class="t" style="left:255px;top:34px;font-size:11px;color:#000">Quartz</div>
<div class="t" style="left:436px;width:80px;text-align:center;top:34px;font-size:11px;color:#000">0.8504</div>
<div class="t" style="left:516px;width:80px;text-align:center;top:34px;font-size:11px;color:#000">0.9551</div>
<div class="t" style="left:596px;width:80px;text-align:center;top:34px;font-size:11px;color:#000">0.9929</div>
<div class="t" style="left:676px;width:60px;text-align:center;top:34px;font-size:11px;color:#000">4.75</div>
<div class="t" style="left:736px;width:60px;text-align:center;top:34px;font-size:11px;color:#000">0.8914</div>
<div class="a" style="left:0px;top:48px;width:796px;height:16px;background:#f5f5f5"></div>
<div class="a" style="left:736px;top:48px;width:60px;height:16px;background:#33cc00"></div>
<div class="t" style="left:40px;width:40px;text-align:center;top:50px;font-size:11px;font-weight:bold;color:#10a010">C</div>
<div class="t" style="left:88px;top:50px;font-size:11px;color:#000">96-101-1173</div>
<div class="t" style="left:162px;top:50px;font-size:11px;color:#000">O2 Si</div>
<div class="t" style="left:255px;top:50px;font-size:11px;color:#000">Silicon oxide $-alpha (Quartz low)</div>
<div class="t" style="left:436px;width:80px;text-align:center;top:50px;font-size:11px;color:#000">0.8446</div>
<div class="t" style="left:516px;width:80px;text-align:center;top:50px;font-size:11px;color:#000">0.9584</div>
<div class="t" style="left:596px;width:80px;text-align:center;top:50px;font-size:11px;color:#000">0.9913</div>
<div class="t" style="left:676px;width:60px;text-align:center;top:50px;font-size:11px;color:#000">4.64</div>
<div class="t" style="left:736px;width:60px;text-align:center;top:50px;font-size:11px;color:#000">0.8908</div>
<div class="a" style="left:0px;top:64px;width:796px;height:16px;background:#ffffff"></div>
<div class="a" style="left:736px;top:64px;width:60px;height:16px;background:#33cc00"></div>
<div class="t" style="left:40px;width:40px;text-align:center;top:66px;font-size:11px;font-weight:bold;color:#10a010">C</div>
<div class="t" style="left:88px;top:66px;font-size:11px;color:#000">96-901-3322</div>
<div class="t" style="left:162px;top:66px;font-size:11px;color:#000">O2 Si</div>
<div class="t" style="left:255px;top:66px;font-size:11px;color:#000">Quartz</div>
<div class="t" style="left:436px;width:80px;text-align:center;top:66px;font-size:11px;color:#000">0.8472</div>
<div class="t" style="left:516px;width:80px;text-align:center;top:66px;font-size:11px;color:#000">0.9546</div>
<div class="t" style="left:596px;width:80px;text-align:center;top:66px;font-size:11px;color:#000">0.9917</div>
<div class="t" style="left:676px;width:60px;text-align:center;top:66px;font-size:11px;color:#000">4.74</div>
<div class="t" style="left:736px;width:60px;text-align:center;top:66px;font-size:11px;color:#000">0.8906</div>
<div class="a" style="left:0px;top:80px;width:796px;height:16px;background:#f5f5f5"></div>
<div class="a" style="left:736px;top:80px;width:60px;height:16px;background:#33cc00"></div>
<div class="t" style="left:40px;width:40px;text-align:center;top:82px;font-size:11px;font-weight:bold;color:#10a010">C</div>
<div class="t" style="left:88px;top:82px;font-size:11px;color:#000">96-500-0036</div>
<div class="t" style="left:162px;top:82px;font-size:11px;color:#000">O2 Si</div>
<div class="t" style="left:255px;top:82px;font-size:11px;color:#000">Silicon oxide (Quartz)</div>
<div class="t" style="left:436px;width:80px;text-align:center;top:82px;font-size:11px;color:#000">0.8381</div>
<div class="t" style="left:516px;width:80px;text-align:center;top:82px;font-size:11px;color:#000">0.9584</div>
<div class="t" style="left:596px;width:80px;text-align:center;top:82px;font-size:11px;color:#000">0.9919</div>
<div class="t" style="left:676px;width:60px;text-align:center;top:82px;font-size:11px;color:#000">4.66</div>
<div class="t" style="left:736px;width:60px;text-align:center;top:82px;font-size:11px;color:#000">0.8900</div>
<div class="a" style="left:0px;top:96px;width:796px;height:16px;background:#ffffff"></div>
<div class="a" style="left:736px;top:96px;width:60px;height:16px;background:#3acc00"></div>
<div class="t" style="left:40px;width:40px;text-align:center;top:98px;font-size:11px;font-weight:bold;color:#10a010">C</div>
<div class="t" style="left:88px;top:98px;font-size:11px;color:#000">96-101-1098</div>
<div class="t" style="left:162px;top:98px;font-size:11px;color:#000">O2 Si</div>
<div class="t" style="left:255px;top:98px;font-size:11px;color:#000">Silicon oxide $-alpha (Quartz low)</div>
<div class="t" style="left:436px;width:80px;text-align:center;top:98px;font-size:11px;color:#000">0.8422</div>
<div class="t" style="left:516px;width:80px;text-align:center;top:98px;font-size:11px;color:#000">0.9545</div>
<div class="t" style="left:596px;width:80px;text-align:center;top:98px;font-size:11px;color:#000">0.9867</div>
<div class="t" style="left:676px;width:60px;text-align:center;top:98px;font-size:11px;color:#000">4.43</div>
<div class="t" style="left:736px;width:60px;text-align:center;top:98px;font-size:11px;color:#000">0.8891</div>
<div class="a" style="left:0px;top:112px;width:796px;height:16px;background:#f5f5f5"></div>
<div class="a" style="left:736px;top:112px;width:60px;height:16px;background:#44cc00"></div>
<div class="t" style="left:40px;width:40px;text-align:center;top:114px;font-size:11px;font-weight:bold;color:#10a010">C</div>
<div class="t" style="left:88px;top:114px;font-size:11px;color:#000">96-101-1160</div>
<div class="t" style="left:162px;top:114px;font-size:11px;color:#000">O2 Si</div>
<div class="t" style="left:255px;top:114px;font-size:11px;color:#000">Silicon oxide (Quartz low)</div>
<div class="t" style="left:436px;width:80px;text-align:center;top:114px;font-size:11px;color:#000">0.7946</div>
<div class="t" style="left:516px;width:80px;text-align:center;top:114px;font-size:11px;color:#000">0.9595</div>
<div class="t" style="left:596px;width:80px;text-align:center;top:114px;font-size:11px;color:#000">0.9989</div>
<div class="t" style="left:676px;width:60px;text-align:center;top:114px;font-size:11px;color:#000">4.82</div>
<div class="t" style="left:736px;width:60px;text-align:center;top:114px;font-size:11px;color:#000">0.8833</div>
<div class="a" style="left:0px;top:128px;width:796px;height:16px;background:#ffffff"></div>
<div class="a" style="left:736px;top:128px;width:60px;height:16px;background:#99dd00"></div>
<div class="t" style="left:40px;width:40px;text-align:center;top:130px;font-size:11px;font-weight:bold;color:#10a010">C</div>
<div class="t" style="left:88px;top:130px;font-size:11px;color:#000">96-101-1177</div>
<div class="t" style="left:162px;top:130px;font-size:11px;color:#000">O2 Si</div>
<div class="t" style="left:255px;top:130px;font-size:11px;color:#000">Silicon oxide - $-alpha (Quartz low)</div>
<div class="t" style="left:436px;width:80px;text-align:center;top:130px;font-size:11px;color:#000">0.6806</div>
<div class="t" style="left:516px;width:80px;text-align:center;top:130px;font-size:11px;color:#000">0.9538</div>
<div class="t" style="left:596px;width:80px;text-align:center;top:130px;font-size:11px;color:#000">0.9989</div>
<div class="t" style="left:676px;width:60px;text-align:center;top:130px;font-size:11px;color:#000">4.82</div>
<div class="t" style="left:736px;width:60px;text-align:center;top:130px;font-size:11px;color:#000">0.8541</div>
</div>
<div class="a" style="left:821px;top:78px;width:458px;height:467px;border:1px solid #c9c9c9;border-radius:2px;background:#f0f0f0"></div>
<div class="a" style="left:822px;top:99px;width:455px;height:400px;border:1px solid #bdbdbd;border-radius:0 2px 3px 3px;background:#f0f0f0"></div>
<div class="a" style="left:823px;top:80px;width:87px;height:21px;border:1px solid #a8a8a8;border-bottom:none;border-radius:3px 3px 0 0;background:#f4f4f4"></div>
<div class="t" style="left:823px;width:87px;text-align:center;top:86px;font-size:11px">Composition*</div>
<div class="a" style="left:910px;top:83px;width:71px;height:17px;border:1px solid #acacac;border-radius:2px 2px 0 0;background:linear-gradient(#f6f6f6,#e6e6e6 55%,#dcdcdc)"></div>
<div class="t" style="left:910px;width:70px;text-align:center;top:87px;font-size:11px;color:#000">Structure</div>
<div class="a" style="left:980px;top:83px;width:74px;height:17px;border:1px solid #acacac;border-radius:2px 2px 0 0;background:linear-gradient(#f6f6f6,#e6e6e6 55%,#dcdcdc)"></div>
<div class="t" style="left:980px;width:73px;text-align:center;top:87px;font-size:11px;color:#000">Properties</div>
<div class="a" style="left:1053px;top:83px;width:52px;height:17px;border:1px solid #acacac;border-radius:2px 2px 0 0;background:linear-gradient(#f6f6f6,#e6e6e6 55%,#dcdcdc)"></div>
<div class="t" style="left:1053px;width:51px;text-align:center;top:87px;font-size:11px;color:#000">Peaks</div>
<div class="a" style="left:1104px;top:83px;width:81px;height:17px;border:1px solid #acacac;border-radius:2px 2px 0 0;background:linear-gradient(#f6f6f6,#e6e6e6 55%,#dcdcdc)"></div>
<div class="t" style="left:1104px;width:80px;text-align:center;top:87px;font-size:11px;color:#000">References</div>
<div class="a" style="left:1184px;top:83px;width:60px;height:17px;border:1px solid #acacac;border-radius:2px 2px 0 0;background:linear-gradient(#f6f6f6,#e6e6e6 55%,#dcdcdc)"></div>
<div class="t" style="left:1184px;width:59px;text-align:center;top:87px;font-size:11px;color:#8a8a8a">Subfiles</div>
<div class="a" style="left:866px;top:109px;width:23px;height:23px;border:1px solid #6e6e74;border-radius:3px;background:linear-gradient(#fde47c,#f2c93e);text-align:center;line-height:23px;font-size:11px;letter-spacing:-0.3px;white-space:nowrap;padding-right:1px">1a</div>
<div class="a" style="left:888px;top:109px;width:23px;height:23px;border:1px solid #6e6e74;border-radius:3px;background:linear-gradient(#fde47c,#f2c93e);text-align:center;line-height:23px;font-size:11px;letter-spacing:-0.3px;white-space:nowrap;padding-right:1px">2a</div>
<div class="a" style="left:910px;top:109px;width:23px;height:23px;border:1px solid #6e6e74;border-radius:3px;background:linear-gradient(#fde47c,#f2c93e);text-align:center;line-height:23px;font-size:11px;letter-spacing:-0.3px;white-space:nowrap;padding-right:1px">3b</div>
<div class="a" style="left:932px;top:109px;width:23px;height:23px;border:1px solid #6e6e74;border-radius:3px;background:linear-gradient(#fde47c,#f2c93e);text-align:center;line-height:23px;font-size:11px;letter-spacing:-0.3px;white-space:nowrap;padding-right:1px">4b</div>
<div class="a" style="left:954px;top:109px;width:23px;height:23px;border:1px solid #6e6e74;border-radius:3px;background:linear-gradient(#fde47c,#f2c93e);text-align:center;line-height:23px;font-size:11px;letter-spacing:-0.3px;white-space:nowrap;padding-right:1px">5b</div>
<div class="a" style="left:976px;top:109px;width:23px;height:23px;border:1px solid #6e6e74;border-radius:3px;background:linear-gradient(#fde47c,#f2c93e);text-align:center;line-height:23px;font-size:11px;letter-spacing:-0.3px;white-space:nowrap;padding-right:1px">6b</div>
<div class="a" style="left:998px;top:109px;width:23px;height:23px;border:1px solid #6e6e74;border-radius:3px;background:linear-gradient(#fde47c,#f2c93e);text-align:center;line-height:23px;font-size:11px;letter-spacing:-0.3px;white-space:nowrap;padding-right:1px">7b</div>
<div class="a" style="left:1020px;top:109px;width:67px;height:23px;border:1px solid #6e6e74;border-radius:3px;background:linear-gradient(#fde47c,#f2c93e);text-align:center;line-height:23px;font-size:11px;letter-spacing:-0.3px;white-space:nowrap;padding-right:1px">8b</div>
<div class="a" style="left:1086px;top:109px;width:23px;height:23px;border:1px solid #6e6e74;border-radius:3px;background:linear-gradient(#fde47c,#f2c93e);text-align:center;line-height:23px;font-size:11px;letter-spacing:-0.3px;white-space:nowrap;padding-right:1px">1b</div>
<div class="a" style="left:1108px;top:109px;width:23px;height:23px;border:1px solid #6e6e74;border-radius:3px;background:linear-gradient(#fde47c,#f2c93e);text-align:center;line-height:23px;font-size:11px;letter-spacing:-0.3px;white-space:nowrap;padding-right:1px">2b</div>
<div class="a" style="left:1130px;top:109px;width:23px;height:23px;border:1px solid #6e6e74;border-radius:3px;background:linear-gradient(#fde47c,#f2c93e);text-align:center;line-height:23px;font-size:11px;letter-spacing:-0.3px;white-space:nowrap;padding-right:1px">3a</div>
<div class="a" style="left:1152px;top:109px;width:23px;height:23px;border:1px solid #6e6e74;border-radius:3px;background:linear-gradient(#fde47c,#f2c93e);text-align:center;line-height:23px;font-size:11px;letter-spacing:-0.3px;white-space:nowrap;padding-right:1px">4a</div>
<div class="a" style="left:1174px;top:109px;width:23px;height:23px;border:1px solid #6e6e74;border-radius:3px;background:linear-gradient(#fde47c,#f2c93e);text-align:center;line-height:23px;font-size:11px;letter-spacing:-0.3px;white-space:nowrap;padding-right:1px">5a</div>
<div class="a" style="left:1196px;top:109px;width:23px;height:23px;border:1px solid #6e6e74;border-radius:3px;background:linear-gradient(#fde47c,#f2c93e);text-align:center;line-height:23px;font-size:11px;letter-spacing:-0.3px;white-space:nowrap;padding-right:1px">6a</div>
<div class="a" style="left:1218px;top:109px;width:23px;height:23px;border:1px solid #6e6e74;border-radius:3px;background:linear-gradient(#fde47c,#f2c93e);text-align:center;line-height:23px;font-size:11px;letter-spacing:-0.3px;white-space:nowrap;padding-right:1px">7a</div>
<div class="a" style="left:1240px;top:109px;width:23px;height:23px;border:1px solid #6e6e74;border-radius:3px;background:linear-gradient(#fde47c,#f2c93e);text-align:center;line-height:23px;font-size:11px;letter-spacing:-0.3px;white-space:nowrap;padding-right:1px">8a</div>
<div class="a" style="left:836px;top:140px;width:23px;height:23px;border:1px solid #6e6e74;border-radius:3px;background:linear-gradient(#fde47c,#f2c93e);text-align:center;line-height:23px;font-size:11px;letter-spacing:-0.3px;white-space:nowrap;padding-right:1px">P1</div>
<div class="a" style="left:866px;top:140px;width:23px;height:23px;border:1px solid #6e6e74;border-radius:3px;background:linear-gradient(#fdfc9c,#efe977);text-align:center;line-height:23px;font-size:11px;letter-spacing:-0.3px;white-space:nowrap;padding-right:1px">H</div>
<div class="a" style="left:1240px;top:140px;width:23px;height:23px;border:1px solid #6e6e74;border-radius:3px;background:linear-gradient(#fdfc9c,#efe977);color:#a9a78a;text-align:center;line-height:23px;font-size:11px;letter-spacing:-0.3px;white-space:nowrap;padding-right:1px">He</div>
<div class="a" style="left:836px;top:162px;width:23px;height:23px;border:1px solid #6e6e74;border-radius:3px;background:linear-gradient(#fde47c,#f2c93e);text-align:center;line-height:23px;font-size:11px;letter-spacing:-0.3px;white-space:nowrap;padding-right:1px">P2</div>
<div class="a" style="left:866px;top:162px;width:23px;height:23px;border:1px solid #6e6e74;border-radius:3px;background:linear-gradient(#fdfc9c,#efe977);text-align:center;line-height:23px;font-size:11px;letter-spacing:-0.3px;white-space:nowrap;padding-right:1px">Li</div>
<div class="a" style="left:888px;top:162px;width:23px;height:23px;border:1px solid #6e6e74;border-radius:3px;background:linear-gradient(#fdfc9c,#efe977);text-align:center;line-height:23px;font-size:11px;letter-spacing:-0.3px;white-space:nowrap;padding-right:1px">Be</div>
<div class="a" style="left:1130px;top:162px;width:23px;height:23px;border:1px solid #6e6e74;border-radius:3px;background:linear-gradient(#fdfc9c,#efe977);text-align:center;line-height:23px;font-size:11px;letter-spacing:-0.3px;white-space:nowrap;padding-right:1px">B</div>
<div class="a" style="left:1152px;top:162px;width:23px;height:23px;border:1px solid #6e6e74;border-radius:3px;background:linear-gradient(#fdfc9c,#efe977);text-align:center;line-height:23px;font-size:11px;letter-spacing:-0.3px;white-space:nowrap;padding-right:1px">C</div>
<div class="a" style="left:1174px;top:162px;width:23px;height:23px;border:1px solid #6e6e74;border-radius:3px;background:linear-gradient(#fdfc9c,#efe977);text-align:center;line-height:23px;font-size:11px;letter-spacing:-0.3px;white-space:nowrap;padding-right:1px">N</div>
<div class="a" style="left:1196px;top:162px;width:23px;height:23px;border:1px solid #6e6e74;border-radius:3px;background:linear-gradient(#6ccc6c,#54b454);text-align:center;line-height:23px;font-size:11px;letter-spacing:-0.3px;white-space:nowrap;padding-right:1px">O</div>
<div class="a" style="left:1218px;top:162px;width:23px;height:23px;border:1px solid #6e6e74;border-radius:3px;background:linear-gradient(#fdfc9c,#efe977);text-align:center;line-height:23px;font-size:11px;letter-spacing:-0.3px;white-space:nowrap;padding-right:1px">F</div>
<div class="a" style="left:1240px;top:162px;width:23px;height:23px;border:1px solid #6e6e74;border-radius:3px;background:linear-gradient(#fdfc9c,#efe977);color:#a9a78a;text-align:center;line-height:23px;font-size:11px;letter-spacing:-0.3px;white-space:nowrap;padding-right:1px">Ne</div>
<div class="a" style="left:836px;top:184px;width:23px;height:23px;border:1px solid #6e6e74;border-radius:3px;background:linear-gradient(#fde47c,#f2c93e);text-align:center;line-height:23px;font-size:11px;letter-spacing:-0.3px;white-space:nowrap;padding-right:1px">P3</div>
<div class="a" style="left:866px;top:184px;width:23px;height:23px;border:1px solid #6e6e74;border-radius:3px;background:linear-gradient(#fdfc9c,#efe977);text-align:center;line-height:23px;font-size:11px;letter-spacing:-0.3px;white-space:nowrap;padding-right:1px">Na</div>
<div class="a" style="left:888px;top:184px;width:23px;height:23px;border:1px solid #6e6e74;border-radius:3px;background:linear-gradient(#fdfc9c,#efe977);text-align:center;line-height:23px;font-size:11px;letter-spacing:-0.3px;white-space:nowrap;padding-right:1px">Mg</div>
<div class="a" style="left:1130px;top:184px;width:23px;height:23px;border:1px solid #6e6e74;border-radius:3px;background:linear-gradient(#fdfc9c,#efe977);text-align:center;line-height:23px;font-size:11px;letter-spacing:-0.3px;white-space:nowrap;padding-right:1px">Al</div>
<div class="a" style="left:1152px;top:184px;width:23px;height:23px;border:1px solid #6e6e74;border-radius:3px;background:linear-gradient(#fdfc9c,#efe977);text-align:center;line-height:23px;font-size:11px;letter-spacing:-0.3px;white-space:nowrap;padding-right:1px">Si</div>
<div class="a" style="left:1174px;top:184px;width:23px;height:23px;border:1px solid #6e6e74;border-radius:3px;background:linear-gradient(#fdfc9c,#efe977);text-align:center;line-height:23px;font-size:11px;letter-spacing:-0.3px;white-space:nowrap;padding-right:1px">P</div>
<div class="a" style="left:1196px;top:184px;width:23px;height:23px;border:1px solid #6e6e74;border-radius:3px;background:linear-gradient(#fdfc9c,#efe977);text-align:center;line-height:23px;font-size:11px;letter-spacing:-0.3px;white-space:nowrap;padding-right:1px">S</div>
<div class="a" style="left:1218px;top:184px;width:23px;height:23px;border:1px solid #6e6e74;border-radius:3px;background:linear-gradient(#fdfc9c,#efe977);text-align:center;line-height:23px;font-size:11px;letter-spacing:-0.3px;white-space:nowrap;padding-right:1px">Cl</div>
<div class="a" style="left:1240px;top:184px;width:23px;height:23px;border:1px solid #6e6e74;border-radius:3px;background:linear-gradient(#fdfc9c,#efe977);text-align:center;line-height:23px;font-size:11px;letter-spacing:-0.3px;white-space:nowrap;padding-right:1px">Ar</div>
<div class="a" style="left:836px;top:206px;width:23px;height:23px;border:1px solid #6e6e74;border-radius:3px;background:linear-gradient(#fde47c,#f2c93e);text-align:center;line-height:23px;font-size:11px;letter-spacing:-0.3px;white-space:nowrap;padding-right:1px">P4</div>
<div class="a" style="left:866px;top:206px;width:23px;height:23px;border:1px solid #6e6e74;border-radius:3px;background:linear-gradient(#fdfc9c,#efe977);text-align:center;line-height:23px;font-size:11px;letter-spacing:-0.3px;white-space:nowrap;padding-right:1px">K</div>
<div class="a" style="left:888px;top:206px;width:23px;height:23px;border:1px solid #6e6e74;border-radius:3px;background:linear-gradient(#fdfc9c,#efe977);text-align:center;line-height:23px;font-size:11px;letter-spacing:-0.3px;white-space:nowrap;padding-right:1px">Ca</div>
<div class="a" style="left:910px;top:206px;width:23px;height:23px;border:1px solid #6e6e74;border-radius:3px;background:linear-gradient(#fdfc9c,#efe977);text-align:center;line-height:23px;font-size:11px;letter-spacing:-0.3px;white-space:nowrap;padding-right:1px">Sc</div>
<div class="a" style="left:932px;top:206px;width:23px;height:23px;border:1px solid #6e6e74;border-radius:3px;background:linear-gradient(#fdfc9c,#efe977);text-align:center;line-height:23px;font-size:11px;letter-spacing:-0.3px;white-space:nowrap;padding-right:1px">Ti</div>
<div class="a" style="left:954px;top:206px;width:23px;height:23px;border:1px solid #6e6e74;border-radius:3px;background:linear-gradient(#fdfc9c,#efe977);text-align:center;line-height:23px;font-size:11px;letter-spacing:-0.3px;white-space:nowrap;padding-right:1px">V</div>
<div class="a" style="left:976px;top:206px;width:23px;height:23px;border:1px solid #6e6e74;border-radius:3px;background:linear-gradient(#fdfc9c,#efe977);text-align:center;line-height:23px;font-size:11px;letter-spacing:-0.3px;white-space:nowrap;padding-right:1px">Cr</div>
<div class="a" style="left:998px;top:206px;width:23px;height:23px;border:1px solid #6e6e74;border-radius:3px;background:linear-gradient(#fdfc9c,#efe977);text-align:center;line-height:23px;font-size:11px;letter-spacing:-0.3px;white-space:nowrap;padding-right:1px">Mn</div>
<div class="a" style="left:1020px;top:206px;width:23px;height:23px;border:1px solid #6e6e74;border-radius:3px;background:linear-gradient(#fdfc9c,#efe977);text-align:center;line-height:23px;font-size:11px;letter-spacing:-0.3px;white-space:nowrap;padding-right:1px">Fe</div>
<div class="a" style="left:1042px;top:206px;width:23px;height:23px;border:1px solid #6e6e74;border-radius:3px;background:linear-gradient(#fdfc9c,#efe977);text-align:center;line-height:23px;font-size:11px;letter-spacing:-0.3px;white-space:nowrap;padding-right:1px">Co</div>
<div class="a" style="left:1064px;top:206px;width:23px;height:23px;border:1px solid #6e6e74;border-radius:3px;background:linear-gradient(#fdfc9c,#efe977);text-align:center;line-height:23px;font-size:11px;letter-spacing:-0.3px;white-space:nowrap;padding-right:1px">Ni</div>
<div class="a" style="left:1086px;top:206px;width:23px;height:23px;border:1px solid #6e6e74;border-radius:3px;background:linear-gradient(#fdfc9c,#efe977);text-align:center;line-height:23px;font-size:11px;letter-spacing:-0.3px;white-space:nowrap;padding-right:1px">Cu</div>
<div class="a" style="left:1108px;top:206px;width:23px;height:23px;border:1px solid #6e6e74;border-radius:3px;background:linear-gradient(#fdfc9c,#efe977);text-align:center;line-height:23px;font-size:11px;letter-spacing:-0.3px;white-space:nowrap;padding-right:1px">Zn</div>
<div class="a" style="left:1130px;top:206px;width:23px;height:23px;border:1px solid #6e6e74;border-radius:3px;background:linear-gradient(#fdfc9c,#efe977);text-align:center;line-height:23px;font-size:11px;letter-spacing:-0.3px;white-space:nowrap;padding-right:1px">Ga</div>
<div class="a" style="left:1152px;top:206px;width:23px;height:23px;border:1px solid #6e6e74;border-radius:3px;background:linear-gradient(#fdfc9c,#efe977);text-align:center;line-height:23px;font-size:11px;letter-spacing:-0.3px;white-space:nowrap;padding-right:1px">Ge</div>
<div class="a" style="left:1174px;top:206px;width:23px;height:23px;border:1px solid #6e6e74;border-radius:3px;background:linear-gradient(#fdfc9c,#efe977);text-align:center;line-height:23px;font-size:11px;letter-spacing:-0.3px;white-space:nowrap;padding-right:1px">As</div>
<div class="a" style="left:1196px;top:206px;width:23px;height:23px;border:1px solid #6e6e74;border-radius:3px;background:linear-gradient(#fdfc9c,#efe977);text-align:center;line-height:23px;font-size:11px;letter-spacing:-0.3px;white-space:nowrap;padding-right:1px">Se</div>
<div class="a" style="left:1218px;top:206px;width:23px;height:23px;border:1px solid #6e6e74;border-radius:3px;background:linear-gradient(#fdfc9c,#efe977);text-align:center;line-height:23px;font-size:11px;letter-spacing:-0.3px;white-space:nowrap;padding-right:1px">Br</div>
<div class="a" style="left:1240px;top:206px;width:23px;height:23px;border:1px solid #6e6e74;border-radius:3px;background:linear-gradient(#fdfc9c,#efe977);text-align:center;line-height:23px;font-size:11px;letter-spacing:-0.3px;white-space:nowrap;padding-right:1px">Kr</div>
<div class="a" style="left:836px;top:228px;width:23px;height:23px;border:1px solid #6e6e74;border-radius:3px;background:linear-gradient(#fde47c,#f2c93e);text-align:center;line-height:23px;font-size:11px;letter-spacing:-0.3px;white-space:nowrap;padding-right:1px">P5</div>
<div class="a" style="left:866px;top:228px;width:23px;height:23px;border:1px solid #6e6e74;border-radius:3px;background:linear-gradient(#fdfc9c,#efe977);text-align:center;line-height:23px;font-size:11px;letter-spacing:-0.3px;white-space:nowrap;padding-right:1px">Rb</div>
<div class="a" style="left:888px;top:228px;width:23px;height:23px;border:1px solid #6e6e74;border-radius:3px;background:linear-gradient(#fdfc9c,#efe977);text-align:center;line-height:23px;font-size:11px;letter-spacing:-0.3px;white-space:nowrap;padding-right:1px">Sr</div>
<div class="a" style="left:910px;top:228px;width:23px;height:23px;border:1px solid #6e6e74;border-radius:3px;background:linear-gradient(#fdfc9c,#efe977);text-align:center;line-height:23px;font-size:11px;letter-spacing:-0.3px;white-space:nowrap;padding-right:1px">Y</div>
<div class="a" style="left:932px;top:228px;width:23px;height:23px;border:1px solid #6e6e74;border-radius:3px;background:linear-gradient(#fdfc9c,#efe977);text-align:center;line-height:23px;font-size:11px;letter-spacing:-0.3px;white-space:nowrap;padding-right:1px">Zr</div>
<div class="a" style="left:954px;top:228px;width:23px;height:23px;border:1px solid #6e6e74;border-radius:3px;background:linear-gradient(#fdfc9c,#efe977);text-align:center;line-height:23px;font-size:11px;letter-spacing:-0.3px;white-space:nowrap;padding-right:1px">Nb</div>
<div class="a" style="left:976px;top:228px;width:23px;height:23px;border:1px solid #6e6e74;border-radius:3px;background:linear-gradient(#fdfc9c,#efe977);text-align:center;line-height:23px;font-size:11px;letter-spacing:-0.3px;white-space:nowrap;padding-right:1px">Mo</div>
<div class="a" style="left:998px;top:228px;width:23px;height:23px;border:1px solid #6e6e74;border-radius:3px;background:linear-gradient(#fdfc9c,#efe977);text-align:center;line-height:23px;font-size:11px;letter-spacing:-0.3px;white-space:nowrap;padding-right:1px">Tc</div>
<div class="a" style="left:1020px;top:228px;width:23px;height:23px;border:1px solid #6e6e74;border-radius:3px;background:linear-gradient(#fdfc9c,#efe977);text-align:center;line-height:23px;font-size:11px;letter-spacing:-0.3px;white-space:nowrap;padding-right:1px">Ru</div>
<div class="a" style="left:1042px;top:228px;width:23px;height:23px;border:1px solid #6e6e74;border-radius:3px;background:linear-gradient(#fdfc9c,#efe977);text-align:center;line-height:23px;font-size:11px;letter-spacing:-0.3px;white-space:nowrap;padding-right:1px">Rh</div>
<div class="a" style="left:1064px;top:228px;width:23px;height:23px;border:1px solid #6e6e74;border-radius:3px;background:linear-gradient(#fdfc9c,#efe977);text-align:center;line-height:23px;font-size:11px;letter-spacing:-0.3px;white-space:nowrap;padding-right:1px">Pd</div>
<div class="a" style="left:1086px;top:228px;width:23px;height:23px;border:1px solid #6e6e74;border-radius:3px;background:linear-gradient(#fdfc9c,#efe977);text-align:center;line-height:23px;font-size:11px;letter-spacing:-0.3px;white-space:nowrap;padding-right:1px">Ag</div>
<div class="a" style="left:1108px;top:228px;width:23px;height:23px;border:1px solid #6e6e74;border-radius:3px;background:linear-gradient(#fdfc9c,#efe977);text-align:center;line-height:23px;font-size:11px;letter-spacing:-0.3px;white-space:nowrap;padding-right:1px">Cd</div>
<div class="a" style="left:1130px;top:228px;width:23px;height:23px;border:1px solid #6e6e74;border-radius:3px;background:linear-gradient(#fdfc9c,#efe977);text-align:center;line-height:23px;font-size:11px;letter-spacing:-0.3px;white-space:nowrap;padding-right:1px">In</div>
<div class="a" style="left:1152px;top:228px;width:23px;height:23px;border:1px solid #6e6e74;border-radius:3px;background:linear-gradient(#fdfc9c,#efe977);text-align:center;line-height:23px;font-size:11px;letter-spacing:-0.3px;white-space:nowrap;padding-right:1px">Sn</div>
<div class="a" style="left:1174px;top:228px;width:23px;height:23px;border:1px solid #6e6e74;border-radius:3px;background:linear-gradient(#fdfc9c,#efe977);text-align:center;line-height:23px;font-size:11px;letter-spacing:-0.3px;white-space:nowrap;padding-right:1px">Sb</div>
<div class="a" style="left:1196px;top:228px;width:23px;height:23px;border:1px solid #6e6e74;border-radius:3px;background:linear-gradient(#fdfc9c,#efe977);text-align:center;line-height:23px;font-size:11px;letter-spacing:-0.3px;white-space:nowrap;padding-right:1px">Te</div>
<div class="a" style="left:1218px;top:228px;width:23px;height:23px;border:1px solid #6e6e74;border-radius:3px;background:linear-gradient(#fdfc9c,#efe977);text-align:center;line-height:23px;font-size:11px;letter-spacing:-0.3px;white-space:nowrap;padding-right:1px">I</div>
<div class="a" style="left:1240px;top:228px;width:23px;height:23px;border:1px solid #6e6e74;border-radius:3px;background:linear-gradient(#fdfc9c,#efe977);text-align:center;line-height:23px;font-size:11px;letter-spacing:-0.3px;white-space:nowrap;padding-right:1px">Xe</div>
<div class="a" style="left:836px;top:250px;width:23px;height:23px;border:1px solid #6e6e74;border-radius:3px;background:linear-gradient(#fde47c,#f2c93e);text-align:center;line-height:23px;font-size:11px;letter-spacing:-0.3px;white-space:nowrap;padding-right:1px">P6</div>
<div class="a" style="left:866px;top:250px;width:23px;height:23px;border:1px solid #6e6e74;border-radius:3px;background:linear-gradient(#fdfc9c,#efe977);text-align:center;line-height:23px;font-size:11px;letter-spacing:-0.3px;white-space:nowrap;padding-right:1px">Cs</div>
<div class="a" style="left:888px;top:250px;width:23px;height:23px;border:1px solid #6e6e74;border-radius:3px;background:linear-gradient(#fdfc9c,#efe977);text-align:center;line-height:23px;font-size:11px;letter-spacing:-0.3px;white-space:nowrap;padding-right:1px">Ba</div>
<div class="a" style="left:910px;top:250px;width:23px;height:23px;border:1px solid #6e6e74;border-radius:3px;background:linear-gradient(#fdfc9c,#efe977);text-align:center;line-height:23px;font-size:11px;letter-spacing:-0.3px;white-space:nowrap;padding-right:1px">La</div>
<div class="a" style="left:932px;top:250px;width:23px;height:23px;border:1px solid #6e6e74;border-radius:3px;background:linear-gradient(#fdfc9c,#efe977);text-align:center;line-height:23px;font-size:11px;letter-spacing:-0.3px;white-space:nowrap;padding-right:1px">Hf</div>
<div class="a" style="left:954px;top:250px;width:23px;height:23px;border:1px solid #6e6e74;border-radius:3px;background:linear-gradient(#fdfc9c,#efe977);text-align:center;line-height:23px;font-size:11px;letter-spacing:-0.3px;white-space:nowrap;padding-right:1px">Ta</div>
<div class="a" style="left:976px;top:250px;width:23px;height:23px;border:1px solid #6e6e74;border-radius:3px;background:linear-gradient(#fdfc9c,#efe977);text-align:center;line-height:23px;font-size:11px;letter-spacing:-0.3px;white-space:nowrap;padding-right:1px">W</div>
<div class="a" style="left:998px;top:250px;width:23px;height:23px;border:1px solid #6e6e74;border-radius:3px;background:linear-gradient(#fdfc9c,#efe977);text-align:center;line-height:23px;font-size:11px;letter-spacing:-0.3px;white-space:nowrap;padding-right:1px">Re</div>
<div class="a" style="left:1020px;top:250px;width:23px;height:23px;border:1px solid #6e6e74;border-radius:3px;background:linear-gradient(#fdfc9c,#efe977);text-align:center;line-height:23px;font-size:11px;letter-spacing:-0.3px;white-space:nowrap;padding-right:1px">Os</div>
<div class="a" style="left:1042px;top:250px;width:23px;height:23px;border:1px solid #6e6e74;border-radius:3px;background:linear-gradient(#fdfc9c,#efe977);text-align:center;line-height:23px;font-size:11px;letter-spacing:-0.3px;white-space:nowrap;padding-right:1px">Ir</div>
<div class="a" style="left:1064px;top:250px;width:23px;height:23px;border:1px solid #6e6e74;border-radius:3px;background:linear-gradient(#fdfc9c,#efe977);text-align:center;line-height:23px;font-size:11px;letter-spacing:-0.3px;white-space:nowrap;padding-right:1px">Pt</div>
<div class="a" style="left:1086px;top:250px;width:23px;height:23px;border:1px solid #6e6e74;border-radius:3px;background:linear-gradient(#fdfc9c,#efe977);text-align:center;line-height:23px;font-size:11px;letter-spacing:-0.3px;white-space:nowrap;padding-right:1px">Au</div>
<div class="a" style="left:1108px;top:250px;width:23px;height:23px;border:1px solid #6e6e74;border-radius:3px;background:linear-gradient(#fdfc9c,#efe977);text-align:center;line-height:23px;font-size:11px;letter-spacing:-0.3px;white-space:nowrap;padding-right:1px">Hg</div>
<div class="a" style="left:1130px;top:250px;width:23px;height:23px;border:1px solid #6e6e74;border-radius:3px;background:linear-gradient(#fdfc9c,#efe977);text-align:center;line-height:23px;font-size:11px;letter-spacing:-0.3px;white-space:nowrap;padding-right:1px">Tl</div>
<div class="a" style="left:1152px;top:250px;width:23px;height:23px;border:1px solid #6e6e74;border-radius:3px;background:linear-gradient(#fdfc9c,#efe977);text-align:center;line-height:23px;font-size:11px;letter-spacing:-0.3px;white-space:nowrap;padding-right:1px">Pb</div>
<div class="a" style="left:1174px;top:250px;width:23px;height:23px;border:1px solid #6e6e74;border-radius:3px;background:linear-gradient(#fdfc9c,#efe977);text-align:center;line-height:23px;font-size:11px;letter-spacing:-0.3px;white-space:nowrap;padding-right:1px">Bi</div>
<div class="a" style="left:1196px;top:250px;width:23px;height:23px;border:1px solid #6e6e74;border-radius:3px;background:linear-gradient(#fdfc9c,#efe977);text-align:center;line-height:23px;font-size:11px;letter-spacing:-0.3px;white-space:nowrap;padding-right:1px">Po</div>
<div class="a" style="left:1218px;top:250px;width:23px;height:23px;border:1px solid #6e6e74;border-radius:3px;background:linear-gradient(#fdfc9c,#efe977);color:#a9a78a;text-align:center;line-height:23px;font-size:11px;letter-spacing:-0.3px;white-space:nowrap;padding-right:1px">At</div>
<div class="a" style="left:1240px;top:250px;width:23px;height:23px;border:1px solid #6e6e74;border-radius:3px;background:linear-gradient(#fdfc9c,#efe977);color:#a9a78a;text-align:center;line-height:23px;font-size:11px;letter-spacing:-0.3px;white-space:nowrap;padding-right:1px">Rn</div>
<div class="a" style="left:836px;top:272px;width:23px;height:23px;border:1px solid #6e6e74;border-radius:3px;background:linear-gradient(#fde47c,#f2c93e);text-align:center;line-height:23px;font-size:11px;letter-spacing:-0.3px;white-space:nowrap;padding-right:1px">P7</div>
<div class="a" style="left:866px;top:272px;width:23px;height:23px;border:1px solid #6e6e74;border-radius:3px;background:linear-gradient(#fdfc9c,#efe977);color:#a9a78a;text-align:center;line-height:23px;font-size:11px;letter-spacing:-0.3px;white-space:nowrap;padding-right:1px">Fr</div>
<div class="a" style="left:888px;top:272px;width:23px;height:23px;border:1px solid #6e6e74;border-radius:3px;background:linear-gradient(#fdfc9c,#efe977);color:#a9a78a;text-align:center;line-height:23px;font-size:11px;letter-spacing:-0.3px;white-space:nowrap;padding-right:1px">Ra</div>
<div class="a" style="left:910px;top:272px;width:23px;height:23px;border:1px solid #6e6e74;border-radius:3px;background:linear-gradient(#fdfc9c,#efe977);color:#a9a78a;text-align:center;line-height:23px;font-size:11px;letter-spacing:-0.3px;white-space:nowrap;padding-right:1px">Ac</div>
<div class="a" style="left:902px;top:303px;width:23px;height:23px;border:1px solid #6e6e74;border-radius:3px;background:linear-gradient(#fde47c,#f2c93e);text-align:center;line-height:23px;font-size:11px;letter-spacing:-0.3px;white-space:nowrap;padding-right:1px">L</div>
<div class="a" style="left:932px;top:303px;width:23px;height:23px;border:1px solid #6e6e74;border-radius:3px;background:linear-gradient(#fdfc9c,#efe977);text-align:center;line-height:23px;font-size:11px;letter-spacing:-0.3px;white-space:nowrap;padding-right:1px">Ce</div>
<div class="a" style="left:954px;top:303px;width:23px;height:23px;border:1px solid #6e6e74;border-radius:3px;background:linear-gradient(#fdfc9c,#efe977);text-align:center;line-height:23px;font-size:11px;letter-spacing:-0.3px;white-space:nowrap;padding-right:1px">Pr</div>
<div class="a" style="left:976px;top:303px;width:23px;height:23px;border:1px solid #6e6e74;border-radius:3px;background:linear-gradient(#fdfc9c,#efe977);text-align:center;line-height:23px;font-size:11px;letter-spacing:-0.3px;white-space:nowrap;padding-right:1px">Nd</div>
<div class="a" style="left:998px;top:303px;width:23px;height:23px;border:1px solid #6e6e74;border-radius:3px;background:linear-gradient(#fdfc9c,#efe977);color:#a9a78a;text-align:center;line-height:23px;font-size:11px;letter-spacing:-0.3px;white-space:nowrap;padding-right:1px">Pm</div>
<div class="a" style="left:1020px;top:303px;width:23px;height:23px;border:1px solid #6e6e74;border-radius:3px;background:linear-gradient(#fdfc9c,#efe977);text-align:center;line-height:23px;font-size:11px;letter-spacing:-0.3px;white-space:nowrap;padding-right:1px">Sm</div>
<div class="a" style="left:1042px;top:303px;width:23px;height:23px;border:1px solid #6e6e74;border-radius:3px;background:linear-gradient(#fdfc9c,#efe977);text-align:center;line-height:23px;font-size:11px;letter-spacing:-0.3px;white-space:nowrap;padding-right:1px">Eu</div>
<div class="a" style="left:1064px;top:303px;width:23px;height:23px;border:1px solid #6e6e74;border-radius:3px;background:linear-gradient(#fdfc9c,#efe977);text-align:center;line-height:23px;font-size:11px;letter-spacing:-0.3px;white-space:nowrap;padding-right:1px">Gd</div>
<div class="a" style="left:1086px;top:303px;width:23px;height:23px;border:1px solid #6e6e74;border-radius:3px;background:linear-gradient(#fdfc9c,#efe977);text-align:center;line-height:23px;font-size:11px;letter-spacing:-0.3px;white-space:nowrap;padding-right:1px">Tb</div>
<div class="a" style="left:1108px;top:303px;width:23px;height:23px;border:1px solid #6e6e74;border-radius:3px;background:linear-gradient(#fdfc9c,#efe977);text-align:center;line-height:23px;font-size:11px;letter-spacing:-0.3px;white-space:nowrap;padding-right:1px">Dy</div>
<div class="a" style="left:1130px;top:303px;width:23px;height:23px;border:1px solid #6e6e74;border-radius:3px;background:linear-gradient(#fdfc9c,#efe977);text-align:center;line-height:23px;font-size:11px;letter-spacing:-0.3px;white-space:nowrap;padding-right:1px">Ho</div>
<div class="a" style="left:1152px;top:303px;width:23px;height:23px;border:1px solid #6e6e74;border-radius:3px;background:linear-gradient(#fdfc9c,#efe977);text-align:center;line-height:23px;font-size:11px;letter-spacing:-0.3px;white-space:nowrap;padding-right:1px">Er</div>
<div class="a" style="left:1174px;top:303px;width:23px;height:23px;border:1px solid #6e6e74;border-radius:3px;background:linear-gradient(#fdfc9c,#efe977);text-align:center;line-height:23px;font-size:11px;letter-spacing:-0.3px;white-space:nowrap;padding-right:1px">Tm</div>
<div class="a" style="left:1196px;top:303px;width:23px;height:23px;border:1px solid #6e6e74;border-radius:3px;background:linear-gradient(#fdfc9c,#efe977);text-align:center;line-height:23px;font-size:11px;letter-spacing:-0.3px;white-space:nowrap;padding-right:1px">Yb</div>
<div class="a" style="left:1218px;top:303px;width:23px;height:23px;border:1px solid #6e6e74;border-radius:3px;background:linear-gradient(#fdfc9c,#efe977);text-align:center;line-height:23px;font-size:11px;letter-spacing:-0.3px;white-space:nowrap;padding-right:1px">Lu</div>
<div class="a" style="left:902px;top:325px;width:23px;height:23px;border:1px solid #6e6e74;border-radius:3px;background:linear-gradient(#fde47c,#f2c93e);text-align:center;line-height:23px;font-size:11px;letter-spacing:-0.3px;white-space:nowrap;padding-right:1px">A</div>
<div class="a" style="left:932px;top:325px;width:23px;height:23px;border:1px solid #6e6e74;border-radius:3px;background:linear-gradient(#fdfc9c,#efe977);text-align:center;line-height:23px;font-size:11px;letter-spacing:-0.3px;white-space:nowrap;padding-right:1px">Th</div>
<div class="a" style="left:954px;top:325px;width:23px;height:23px;border:1px solid #6e6e74;border-radius:3px;background:linear-gradient(#fdfc9c,#efe977);text-align:center;line-height:23px;font-size:11px;letter-spacing:-0.3px;white-space:nowrap;padding-right:1px">Pa</div>
<div class="a" style="left:976px;top:325px;width:23px;height:23px;border:1px solid #6e6e74;border-radius:3px;background:linear-gradient(#fdfc9c,#efe977);text-align:center;line-height:23px;font-size:11px;letter-spacing:-0.3px;white-space:nowrap;padding-right:1px">U</div>
<div class="a" style="left:998px;top:325px;width:23px;height:23px;border:1px solid #6e6e74;border-radius:3px;background:linear-gradient(#fdfc9c,#efe977);text-align:center;line-height:23px;font-size:11px;letter-spacing:-0.3px;white-space:nowrap;padding-right:1px">Np</div>
<div class="a" style="left:1020px;top:325px;width:23px;height:23px;border:1px solid #6e6e74;border-radius:3px;background:linear-gradient(#fdfc9c,#efe977);text-align:center;line-height:23px;font-size:11px;letter-spacing:-0.3px;white-space:nowrap;padding-right:1px">Pu</div>
<div class="a" style="left:1042px;top:325px;width:23px;height:23px;border:1px solid #6e6e74;border-radius:3px;background:linear-gradient(#fdfc9c,#efe977);text-align:center;line-height:23px;font-size:11px;letter-spacing:-0.3px;white-space:nowrap;padding-right:1px">Am</div>
<div class="a" style="left:1064px;top:325px;width:23px;height:23px;border:1px solid #6e6e74;border-radius:3px;background:linear-gradient(#fdfc9c,#efe977);text-align:center;line-height:23px;font-size:11px;letter-spacing:-0.3px;white-space:nowrap;padding-right:1px">Cm</div>
<div class="a" style="left:1086px;top:325px;width:23px;height:23px;border:1px solid #6e6e74;border-radius:3px;background:linear-gradient(#fdfc9c,#efe977);color:#a9a78a;text-align:center;line-height:23px;font-size:11px;letter-spacing:-0.3px;white-space:nowrap;padding-right:1px">Bk</div>
<div class="a" style="left:1108px;top:325px;width:23px;height:23px;border:1px solid #6e6e74;border-radius:3px;background:linear-gradient(#fdfc9c,#efe977);text-align:center;line-height:23px;font-size:11px;letter-spacing:-0.3px;white-space:nowrap;padding-right:1px">Cf</div>
<div class="a" style="left:1130px;top:325px;width:23px;height:23px;border:1px solid #6e6e74;border-radius:3px;background:linear-gradient(#fdfc9c,#efe977);color:#a9a78a;text-align:center;line-height:23px;font-size:11px;letter-spacing:-0.3px;white-space:nowrap;padding-right:1px">Es</div>
<div class="a" style="left:1152px;top:325px;width:23px;height:23px;border:1px solid #6e6e74;border-radius:3px;background:linear-gradient(#fdfc9c,#efe977);color:#a9a78a;text-align:center;line-height:23px;font-size:11px;letter-spacing:-0.3px;white-space:nowrap;padding-right:1px">Fm</div>
<div class="a" style="left:1174px;top:325px;width:23px;height:23px;border:1px solid #6e6e74;border-radius:3px;background:linear-gradient(#fdfc9c,#efe977);color:#a9a78a;text-align:center;line-height:23px;font-size:11px;letter-spacing:-0.3px;white-space:nowrap;padding-right:1px">Md</div>
<div class="a" style="left:1196px;top:325px;width:23px;height:23px;border:1px solid #6e6e74;border-radius:3px;background:linear-gradient(#fdfc9c,#efe977);color:#a9a78a;text-align:center;line-height:23px;font-size:11px;letter-spacing:-0.3px;white-space:nowrap;padding-right:1px">No</div>
<div class="a" style="left:1218px;top:325px;width:23px;height:23px;border:1px solid #6e6e74;border-radius:3px;background:linear-gradient(#fdfc9c,#efe977);color:#a9a78a;text-align:center;line-height:23px;font-size:11px;letter-spacing:-0.3px;white-space:nowrap;padding-right:1px">Lr</div>
<div class="a" style="left:834px;top:367px;width:191px;height:105px;border:1px solid #c4c4c4;border-radius:3px"></div>
<div class="t" style="left:839px;top:362.5px;font-size:11px;background:#f0f0f0;padding:0 2px">Element selection by mouse</div>
<div class="a" style="left:849px;top:383px;width:14px;height:14px;background:#5ec45e;border:1px solid #000"></div>
<div class="a" style="left:869px;top:384px;width:13px;height:13px;border-radius:50%;border:1px solid #a0a0a0;background:radial-gradient(#ffffff,#e4e4e4)"></div>
<div class="a" style="left:873px;top:388px;width:5px;height:5px;border-radius:50%;background:#000"></div>
<div class="t" style="left:888px;top:384.8px;font-size:11.5px;color:#000;">All</div>
<div class="a" style="left:849px;top:405px;width:14px;height:14px;background:#ff7e62;border:1px solid #000"></div>
<div class="a" style="left:869px;top:406px;width:13px;height:13px;border-radius:50%;border:1px solid #a0a0a0;background:radial-gradient(#ffffff,#e4e4e4)"></div>
<div class="t" style="left:888px;top:406.8px;font-size:11.5px;color:#000;">None</div>
<div class="a" style="left:849px;top:427px;width:14px;height:14px;background:#5aa8c8;border:1px solid #000"></div>
<div class="a" style="left:869px;top:428px;width:13px;height:13px;border-radius:50%;border:1px solid #a0a0a0;background:radial-gradient(#ffffff,#e4e4e4)"></div>
<div class="t" style="left:888px;top:428.8px;font-size:11.5px;color:#000;">Any</div>
<div class="a" style="left:849px;top:449px;width:14px;height:14px;background:#ffff80;border:1px solid #000"></div>
<div class="a" style="left:869px;top:450px;width:13px;height:13px;border-radius:50%;border:1px solid #a0a0a0;background:radial-gradient(#ffffff,#e4e4e4)"></div>
<div class="t" style="left:888px;top:450.8px;font-size:11.5px;color:#000;">Optional</div>
<div class="a" style="left:940px;top:381px;width:75px;height:40px;border:1px solid #acacac;border-radius:3px;background:linear-gradient(#f3f3f3,#e9e9e9 50%,#dddddd 60%,#d8d8d8)"></div>
<div class="a" style="left:940px;top:425px;width:75px;height:40px;border:1px solid #acacac;border-radius:3px;background:linear-gradient(#f3f3f3,#e9e9e9 50%,#dddddd 60%,#d8d8d8)"></div>
<div class="a" style="left:953px;top:394px;width:14px;height:14px;border:1px solid #000;background:linear-gradient(#ff7e62 50%,#ffff80 50%)"></div>
<div class="t" style="left:971px;top:395.5px;font-size:12px;color:#000;"><u>T</u>oggle</div>
<div class="a" style="left:954px;top:438px;width:14px;height:14px;border:1px solid #000;background:#ffff80"></div>
<div class="t" style="left:971px;top:439.5px;font-size:12px;color:#000;"><u>R</u>eset</div>
<div class="t" style="left:1038px;top:368.8px;font-size:11.5px;color:#000;">Name:</div>
<div class="a" style="left:1118px;top:365px;width:100px;height:21px;background:#fff;border:1px solid #b4b4b4;border-radius:3px"></div>
<div class="a" style="left:1218px;top:364px;width:23px;height:23px;border:1px solid #b0b0b0;border-radius:3px;background:linear-gradient(#f6f6f6,#dedede)"></div>
<div class="a" style="left:1241px;top:364px;width:22px;height:23px;border:1px solid #b0b0b0;border-radius:3px;background:linear-gradient(#f6f6f6,#dedede)"></div>
<svg class="a" style="left:1222px;top:368px" width="16" height="15"><rect x="0.5" y="0.5" width="14" height="10" fill="#fff" stroke="#5a80b0"/><rect x="1" y="1" width="13" height="3" fill="#4a80c8"/><path d="M1 6.5H14M1 8.5H14M5.5 4V11M9.5 4V11" stroke="#8aa8d0"/><path d="M9 6L9 14L11 12L13 15L14 14L12 11L15 11Z" fill="#fff" stroke="#333" stroke-width="0.8"/></svg>
<svg class="a" style="left:1245px;top:368px" width="14" height="14"><path d="M2 2L12 12M12 2L2 12" stroke="#c00000" stroke-width="3.5"/><path d="M2 2L12 12M12 2L2 12" stroke="#ff3030" stroke-width="1.5"/></svg>
<div class="t" style="left:1038px;top:396.8px;font-size:11.5px;color:#000;">Elem. count:</div>
<div class="a" style="left:1118px;top:393px;width:100px;height:21px;background:#fff;border:1px solid #b4b4b4;border-radius:3px"></div>
<div class="a" style="left:1218px;top:392px;width:23px;height:23px;border:1px solid #b0b0b0;border-radius:3px;background:linear-gradient(#f6f6f6,#dedede)"></div>
<div class="a" style="left:1241px;top:392px;width:22px;height:23px;border:1px solid #b0b0b0;border-radius:3px;background:linear-gradient(#f6f6f6,#dedede)"></div>
<svg class="a" style="left:1222px;top:396px" width="16" height="15"><rect x="0.5" y="0.5" width="14" height="10" fill="#fff" stroke="#5a80b0"/><rect x="1" y="1" width="13" height="3" fill="#4a80c8"/><path d="M1 6.5H14M1 8.5H14M5.5 4V11M9.5 4V11" stroke="#8aa8d0"/><path d="M9 6L9 14L11 12L13 15L14 14L12 11L15 11Z" fill="#fff" stroke="#333" stroke-width="0.8"/></svg>
<svg class="a" style="left:1245px;top:396px" width="14" height="14"><path d="M2 2L12 12M12 2L2 12" stroke="#c00000" stroke-width="3.5"/><path d="M2 2L12 12M12 2L2 12" stroke="#ff3030" stroke-width="1.5"/></svg>
<div class="t" style="left:1038px;top:425.8px;font-size:11.5px;color:#000;">Formula sum:</div>
<div class="a" style="left:1118px;top:422px;width:100px;height:21px;background:#fff;border:1px solid #b4b4b4;border-radius:3px"></div>
<div class="a" style="left:1218px;top:421px;width:23px;height:23px;border:1px solid #b0b0b0;border-radius:3px;background:linear-gradient(#f6f6f6,#dedede)"></div>
<div class="a" style="left:1241px;top:421px;width:22px;height:23px;border:1px solid #b0b0b0;border-radius:3px;background:linear-gradient(#f6f6f6,#dedede)"></div>
<svg class="a" style="left:1222px;top:425px" width="16" height="15"><rect x="0.5" y="0.5" width="14" height="10" fill="#fff" stroke="#5a80b0"/><rect x="1" y="1" width="13" height="3" fill="#4a80c8"/><path d="M1 6.5H14M1 8.5H14M5.5 4V11M9.5 4V11" stroke="#8aa8d0"/><path d="M9 6L9 14L11 12L13 15L14 14L12 11L15 11Z" fill="#fff" stroke="#333" stroke-width="0.8"/></svg>
<svg class="a" style="left:1245px;top:425px" width="14" height="14"><path d="M2 2L12 12M12 2L2 12" stroke="#c00000" stroke-width="3.5"/><path d="M2 2L12 12M12 2L2 12" stroke="#ff3030" stroke-width="1.5"/></svg>
<div class="a" style="left:1039px;top:457px;width:13px;height:13px;background:linear-gradient(#f0f0f0,#fafafa);border:1px solid #b0b0b0;border-radius:2px"></div>
<div class="t" style="left:1056px;top:459.0px;font-size:11px;color:#000;">Inorganics only (no C-H-bonds)</div>
<div class="t" style="left:831px;top:517.8px;font-size:11.5px;color:#000;">Preset:</div>
<div class="a" style="left:888px;top:513px;width:212px;height:20px;border:1px solid #acacac;border-radius:3px;background:linear-gradient(#f6f6f6,#ececec 50%,#dcdcdc 51%,#d6d6d6)"></div>
<div class="a" style="left:1083px;top:514px;width:1px;height:18px;background:#b8b8b8"></div>
<svg class="a" style="left:1088px;top:520px" width="8" height="5"><path d="M0 0H8L4 5Z" fill="#000"/></svg>
<div class="t" style="left:892px;top:517.0px;font-size:11px;color:#000;">None / new set</div>
<div class="a" style="left:1106px;top:512px;width:49px;height:22px;border:1px solid #acacac;border-radius:3px;background:linear-gradient(#f3f3f3,#e9e9e9 50%,#dddddd 60%,#d8d8d8)"></div>
<div class="t" style="left:1106px;width:49px;text-align:center;top:516.5px;font-size:12px"><u>S</u>ave</div>
<div class="a" style="left:1162px;top:512px;width:49px;height:22px;border:1px solid #acacac;border-radius:3px;background:linear-gradient(#f3f3f3,#e9e9e9 50%,#dddddd 60%,#d8d8d8)"></div>
<div class="t" style="left:1162px;width:49px;text-align:center;top:516.5px;font-size:12px"><u>D</u>elete</div>
<div class="a" style="left:1218px;top:512px;width:49px;height:22px;border:1px solid #acacac;border-radius:3px;background:linear-gradient(#f3f3f3,#e9e9e9 50%,#dddddd 60%,#d8d8d8)"></div>
<div class="t" style="left:1218px;width:49px;text-align:center;top:516.5px;font-size:12px"><u>R</u>eset</div>
<div class="a" style="left:821px;top:544px;width:133px;height:23px;border:1px solid #c0c0c0;border-top:none;border-radius:0 0 3px 3px;background:#f0f0f0"></div>
<svg class="a" style="left:833px;top:549px" width="14" height="12"><path d="M0.5 0.5H13.5L8.5 6V11.5L5.5 10V6Z" fill="none" stroke="#606060"/></svg>
<div class="t" style="left:851px;top:550.0px;font-size:11px;color:#000;">Restraints (99863)</div>
<div class="a" style="left:954px;top:545px;width:128px;height:20px;border:1px solid #b0b0b0;border-top:none;border-radius:0 0 2px 2px;background:linear-gradient(#f2f2f2,#e6e6e6 50%,#dcdcdc 51%,#e8e8e8)"></div>
<div class="a" style="left:1081px;top:545px;width:84px;height:20px;border:1px solid #b0b0b0;border-top:none;border-radius:0 0 2px 2px;background:linear-gradient(#f2f2f2,#e6e6e6 50%,#dcdcdc 51%,#e8e8e8)"></div>
<div class="a" style="left:1164px;top:545px;width:97px;height:20px;border:1px solid #b0b0b0;border-top:none;border-radius:0 0 2px 2px;background:linear-gradient(#f2f2f2,#e6e6e6 50%,#dcdcdc 51%,#e8e8e8)"></div>
<svg class="a" style="left:966px;top:549px" width="11" height="11"><path d="M5.5 0V11M0 5.5H11" stroke="#2e6fd0" stroke-width="2"/></svg>
<div class="t" style="left:983px;top:549.5px;font-size:11px;color:#000;">Additional entries</div>
<svg class="a" style="left:1093px;top:548px" width="11" height="14"><rect x="0.5" y="0.5" width="10" height="13" fill="#fff" stroke="#4a80c0"/><path d="M0.5 4.5H10.5M0.5 8.5H10.5M4.5 0.5V13.5" stroke="#4a80c0"/></svg>
<div class="t" style="left:1110px;top:549.5px;font-size:11px;color:#000;">Peak list</div>
<svg class="a" style="left:1177px;top:547px" width="11" height="15"><path d="M0.5 0.5H7L10.5 4V14.5H0.5Z" fill="#fff" stroke="#4a70a0"/><path d="M2.5 6.5H8.5M2.5 8.5H8.5M2.5 10.5H8.5M2.5 12.5H7" stroke="#7090b8"/></svg>
<div class="t" style="left:1194px;top:549.5px;font-size:11px;color:#000;">Data sheet</div>
<svg class="a" style="left:817px;top:567px" width="463" height="4"><path d="M6 1.5H1279" stroke="#c8c8c8" stroke-dasharray="3 2"/></svg>
<div class="a" style="left:821px;top:572px;width:459px;height:162px;border:1px solid #c2bea0;background:#fffbe3"></div>
<div class="a" style="left:822px;top:573px;width:40px;height:20px;background:linear-gradient(#fdfbea,#f2efd9 50%,#e9e5cc);border-bottom:1px solid #8e8a70"></div>
<div class="a" style="left:861px;top:573px;width:2px;height:19px;background:#8e8a70"></div>
<div class="t" style="left:822px;width:40px;text-align:center;top:577px;font-size:11.5px">Color</div>
<div class="a" style="left:862px;top:573px;width:80px;height:20px;background:linear-gradient(#fdfbea,#f2efd9 50%,#e9e5cc);border-bottom:1px solid #8e8a70"></div>
<div class="a" style="left:941px;top:573px;width:2px;height:19px;background:#8e8a70"></div>
<div class="t" style="left:862px;width:80px;text-align:center;top:577px;font-size:11.5px">Entry</div>
<div class="a" style="left:942px;top:573px;width:80px;height:20px;background:linear-gradient(#fdfbea,#f2efd9 50%,#e9e5cc);border-bottom:1px solid #8e8a70"></div>
<div class="a" style="left:1021px;top:573px;width:2px;height:19px;background:#8e8a70"></div>
<div class="t" style="left:942px;width:80px;text-align:center;top:577px;font-size:11.5px">Formula</div>
<div class="a" style="left:1022px;top:573px;width:160px;height:20px;background:linear-gradient(#fdfbea,#f2efd9 50%,#e9e5cc);border-bottom:1px solid #8e8a70"></div>
<div class="a" style="left:1181px;top:573px;width:2px;height:19px;background:#8e8a70"></div>
<div class="t" style="left:1022px;width:160px;text-align:center;top:577px;font-size:11.5px">Matched phase</div>
<div class="a" style="left:1182px;top:573px;width:80px;height:20px;background:linear-gradient(#fdfbea,#f2efd9 50%,#e9e5cc);border-bottom:1px solid #8e8a70"></div>
<div class="a" style="left:1261px;top:573px;width:2px;height:19px;background:#8e8a70"></div>
<div class="t" style="left:1186px;top:577px;font-size:11.5px">Quant.(%)</div>
<svg class="a" style="left:1245px;top:577px" width="11" height="9"><path d="M0.5 0.5H10.5L5.5 8Z" fill="none" stroke="#a8a8a8"/></svg>
<div class="a" style="left:822px;top:593px;width:440px;height:16px;background:#fffbe3"></div>
<div class="a" style="left:822px;top:609px;width:440px;height:16px;background:#f4f4f4"></div>
<div class="a" style="left:822px;top:593px;width:40px;height:16px;background:#00dd90"></div>
<div class="a" style="left:822px;top:609px;width:40px;height:16px;background:#ff0000"></div>
<div class="t" style="left:870px;top:595px;font-size:11px">96-900-8082</div>
<div class="t" style="left:945px;top:595px;font-size:11px">Al2 O3</div>
<div class="t" style="left:1027px;top:595px;font-size:11px">Corundum</div>
<div class="t" style="left:1150px;width:84px;text-align:right;top:595px;font-size:11px">73.8</div>
<div class="t" style="left:870px;top:611px;font-size:11px">96-210-0993</div>
<div class="t" style="left:945px;top:611px;font-size:11px">C Ca O3</div>
<div class="t" style="left:1027px;top:611px;font-size:11px"></div>
<div class="t" style="left:1150px;width:84px;text-align:right;top:611px;font-size:11px">26.2</div>
<svg class="a" style="left:817px;top:240px" width="3" height="160"><path d="M1.5 0V158" stroke="#b8b8b8" stroke-dasharray="2 2"/></svg>
<div class="a" style="left:5px;top:743px;width:1px;height:11px;background:#f0c060"></div>
<div class="a" style="left:648px;top:737px;width:66px;height:21px;border:1px solid #a0a0a0;border-right-color:#fff;border-bottom-color:#fff;box-shadow:inset 1px 1px 0 #d0d0d0, 1px 1px 0 #a0a0a0"></div>
<div class="t" style="left:648px;width:66px;text-align:right;padding-right:5px;top:741.5px;font-size:11.5px;font-family:&quot;Liberation Mono&quot;,monospace;font-size:12.5px;color:#333">1.2877</div>
<div class="a" style="left:717px;top:737px;width:67px;height:21px;border:1px solid #a0a0a0;border-right-color:#fff;border-bottom-color:#fff;box-shadow:inset 1px 1px 0 #d0d0d0, 1px 1px 0 #a0a0a0"></div>
<div class="t" style="left:717px;width:67px;text-align:right;padding-right:5px;top:741.5px;font-size:11.5px;font-family:&quot;Liberation Mono&quot;,monospace;font-size:12.5px;color:#333">73.55</div>
<div class="a" style="left:788px;top:737px;width:66px;height:21px;border:1px solid #a0a0a0;border-right-color:#fff;border-bottom-color:#fff;box-shadow:inset 1px 1px 0 #d0d0d0, 1px 1px 0 #a0a0a0"></div>
<div class="t" style="left:788px;width:66px;text-align:right;padding-right:5px;top:741.5px;font-size:11.5px;font-family:&quot;Liberation Mono&quot;,monospace;font-size:12.5px;color:#333">461.11</div>
<div class="a" style="left:857px;top:737px;width:63px;height:21px;border:1px solid #b8b8b8"></div>
<div class="t" style="left:857px;width:63px;text-align:left;padding-left:4px;top:741.5px;font-size:11.5px;font-size:11px">573 entries</div>
<div class="a" style="left:923px;top:737px;width:137px;height:21px;border:1px solid #b8b8b8"></div>
<div class="t" style="left:923px;width:137px;text-align:left;padding-left:4px;top:741.5px;font-size:11.5px;font-size:11px">COD REV8354 2011.02.04</div>
<div class="a" style="left:1062px;top:737px;width:218px;height:21px;border:1px solid #b8b8b8"></div>
<div class="t" style="left:1062px;width:218px;text-align:left;padding-left:4px;top:741.5px;font-size:11.5px;font-size:10.6px">Dr. Holger Putz;Crystal Impact;Single Licence</div>
<div class="a" style="left:0px;top:760px;width:1280px;height:1px;background:#2a2a2a"></div>
<div class="a" style="left:0px;top:761px;width:1280px;height:2px;background:#8fa5bf"></div>
<div class="a" style="left:60px;top:760px;width:58px;height:3px;background:#f4f6f8;border-top:1px solid #111;border-radius:2px 2px 0 0"></div>
<div class="a" style="left:245px;top:760px;width:58px;height:3px;background:#f4f6f8;border-top:1px solid #111;border-radius:2px 2px 0 0"></div>
<div class="a" style="left:307px;top:760px;width:58px;height:3px;background:#f4f6f8;border-top:1px solid #111;border-radius:2px 2px 0 0"></div></body></html>
